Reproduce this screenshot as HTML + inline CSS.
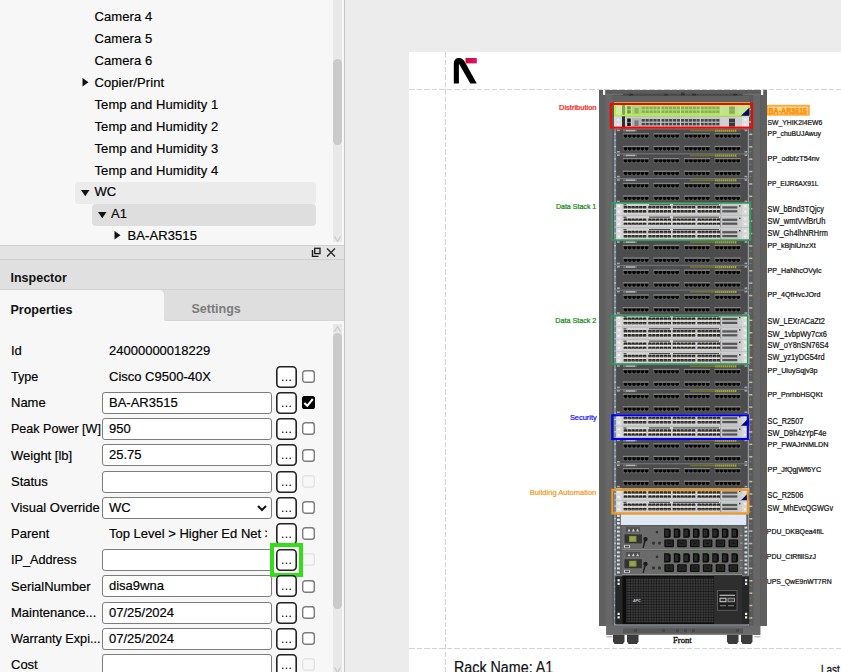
<!DOCTYPE html><html><head><meta charset="utf-8"><style>

html,body{margin:0;padding:0}
body{width:841px;height:672px;overflow:hidden;position:relative;background:#ececec;font-family:"Liberation Sans",sans-serif;color:#111}
.a{position:absolute}
.tr{position:absolute;height:22px;line-height:22px;font-size:13px;white-space:nowrap;letter-spacing:0.09px;color:#000;-webkit-text-stroke:0.18px #000}
.lbl{position:absolute;left:11px;height:22px;line-height:22px;font-size:13px;white-space:nowrap;color:#000;-webkit-text-stroke:0.18px #000}
.val{position:absolute;left:109px;height:22px;line-height:22px;font-size:13px;white-space:nowrap;color:#000;-webkit-text-stroke:0.18px #000}
.inp{position:absolute;left:102px;width:168px;height:20px;border:1px solid #7d7d7d;border-radius:3px;background:#fff}
.inp span{position:absolute;left:6px;top:0;line-height:20px;font-size:13px;color:#000;white-space:nowrap;-webkit-text-stroke:0.18px #000}
.btn{position:absolute;left:276px;width:17px;height:18px;border:2px solid #2a2a2a;border-radius:4px;background:#fff}
.btn svg{position:absolute;left:0;top:0}
.cb{position:absolute;left:302px;width:11px;height:11px;border:1px solid #8a8a8a;border-radius:2.5px;background:#fff}
.cbd{border-color:#e6e6e6;background:#f7f7f7}
.rl{position:absolute;font-size:7px;white-space:nowrap;color:#111;letter-spacing:0.1px}

</style></head><body>
<div class="a" style="left:0;top:0;width:344px;height:245px;background:#f7f7f7"></div>
<div class="a" style="left:75px;top:182px;width:241px;height:21.5px;background:#ebebeb;border-radius:4px"></div>
<div class="a" style="left:92px;top:204px;width:224px;height:21.5px;background:#dedede;border-radius:4px"></div>
<div class="tr" style="left:94.5px;top:5.5px">Camera 4</div>
<div class="tr" style="left:94.5px;top:27.5px">Camera 5</div>
<div class="tr" style="left:94.5px;top:49.5px">Camera 6</div>
<div class="tr" style="left:94.5px;top:71.5px">Copier/Print</div>
<svg class="a" style="left:82.0px;top:78.0px" width="7" height="9"><path d="M0.5 0V8.5L6.5 4.25Z" fill="#111"/></svg>
<div class="tr" style="left:94.5px;top:93.5px">Temp and Humidity 1</div>
<div class="tr" style="left:94.5px;top:115.5px">Temp and Humidity 2</div>
<div class="tr" style="left:94.5px;top:137.5px">Temp and Humidity 3</div>
<div class="tr" style="left:94.5px;top:159.5px">Temp and Humidity 4</div>
<div class="tr" style="left:94.5px;top:180.9px">WC</div>
<svg class="a" style="left:81.0px;top:190.2px" width="9" height="7"><path d="M0 0H8.5L4.25 6.3Z" fill="#111"/></svg>
<div class="tr" style="left:111.0px;top:202.9px">A1</div>
<svg class="a" style="left:97.5px;top:212.2px" width="9" height="7"><path d="M0 0H8.5L4.25 6.3Z" fill="#111"/></svg>
<div class="tr" style="left:127.5px;top:224.9px">BA-AR3515</div>
<svg class="a" style="left:113.5px;top:231.4px" width="7" height="9"><path d="M0.5 0V8.5L6.5 4.25Z" fill="#111"/></svg>
<div class="a" style="left:333px;top:0;width:9px;height:242px;background:#e8e8e8"></div>
<div class="a" style="left:333px;top:59px;width:9px;height:86px;background:#cbcacb;border-radius:4.5px"></div>
<svg class="a" style="left:333px;top:235px" width="9" height="8"><path d="M1.5 1.5L4.5 6.5L7.5 1.5" stroke="#cdcdcd" stroke-width="1.4" fill="none"/></svg>
<div class="a" style="left:344px;top:0;width:1px;height:672px;background:#c6c6c6"></div>
<div class="a" style="left:0;top:245px;width:344px;height:1px;background:#d0d0d0"></div>
<div class="a" style="left:0;top:246px;width:344px;height:13px;background:#e3e3e3"></div>
<div class="a" style="left:0;top:259px;width:344px;height:1px;background:#cfcfcf"></div>
<svg class="a" style="left:311px;top:247px" width="10" height="10"><path d="M1.5 3V9.5H7.5" stroke="#1a1a1a" stroke-width="1.4" fill="none"/><rect x="3.7" y="1.3" width="5.3" height="5.3" stroke="#1a1a1a" stroke-width="1.3" fill="#d8d8d8"/></svg>
<svg class="a" style="left:326px;top:248px" width="10" height="9"><path d="M1 0.5L9 8.5M9 0.5L1 8.5" stroke="#222" stroke-width="1.3"/></svg>
<div class="a" style="left:0;top:260px;width:344px;height:29px;background:#e0e0e0"></div>
<div class="a" style="left:0;top:289px;width:344px;height:1px;background:#d2d2d2"></div>
<div class="a" style="left:10.5px;top:268px;font-size:12.5px;font-weight:bold;line-height:20px;color:#111">Inspector</div>
<div class="a" style="left:0;top:290px;width:344px;height:382px;background:#f7f7f7"></div>
<div class="a" style="left:163px;top:290px;width:181px;height:30.5px;background:#dedede;border-bottom-left-radius:4px;border-bottom:1px solid #d6d6d6;box-sizing:border-box"></div>
<div class="a" style="left:150px;top:290px;width:14px;height:8px;background:#dedede"></div>
<div class="a" style="left:0;top:290px;width:163.5px;height:31px;background:#f7f7f7;border-top-right-radius:5px"></div>
<div class="a" style="left:10.5px;top:300px;font-size:12.5px;font-weight:bold;line-height:20px;color:#111">Properties</div>
<div class="a" style="left:191.5px;top:298.5px;font-size:12.5px;font-weight:bold;line-height:20px;color:#7b7b7b">Settings</div>
<div class="lbl" style="top:339.70px;transform:scaleX(1.0000);transform-origin:0 0">Id</div>
<div class="val" style="top:339.70px">24000000018229</div>
<div class="lbl" style="top:365.90px;transform:scaleX(0.9684);transform-origin:0 0">Type</div>
<div class="val" style="top:365.90px">Cisco C9500-40X</div>
<svg class="a" style="left:276px;top:365.80px" width="21" height="22"><rect x="0.8" y="0.8" width="19.4" height="20.4" rx="3.6" fill="#fff" stroke="#222" stroke-width="1.6"/><circle cx="6.8" cy="14.3" r="0.8" fill="#111"/><circle cx="10.5" cy="14.3" r="0.8" fill="#111"/><circle cx="14.2" cy="14.3" r="0.8" fill="#111"/></svg>
<svg class="a" style="left:302px;top:370.00px" width="13" height="13"><rect x="0.7" y="0.7" width="11.6" height="11.6" rx="2.6" fill="#fff" stroke="#7c7c7c" stroke-width="1.4"/></svg>
<div class="lbl" style="top:392.10px;transform:scaleX(1.0000);transform-origin:0 0">Name</div>
<div class="inp" style="top:392.00px"><span>BA-AR3515</span></div>
<svg class="a" style="left:276px;top:392.00px" width="21" height="22"><rect x="0.8" y="0.8" width="19.4" height="20.4" rx="3.6" fill="#fff" stroke="#222" stroke-width="1.6"/><circle cx="6.8" cy="14.3" r="0.8" fill="#111"/><circle cx="10.5" cy="14.3" r="0.8" fill="#111"/><circle cx="14.2" cy="14.3" r="0.8" fill="#111"/></svg>
<svg class="a" style="left:302px;top:396.20px" width="13" height="13"><rect x="0" y="0" width="13" height="13" rx="2.6" fill="#000"/><path d="M2.3 6.9L5.3 9.8L10.8 3" stroke="#fff" stroke-width="2.1" fill="none"/></svg>
<div class="lbl" style="top:418.30px;transform:scaleX(0.9646);transform-origin:0 0">Peak Power [W]</div>
<div class="inp" style="top:418.20px"><span>950</span></div>
<svg class="a" style="left:276px;top:418.20px" width="21" height="22"><rect x="0.8" y="0.8" width="19.4" height="20.4" rx="3.6" fill="#fff" stroke="#222" stroke-width="1.6"/><circle cx="6.8" cy="14.3" r="0.8" fill="#111"/><circle cx="10.5" cy="14.3" r="0.8" fill="#111"/><circle cx="14.2" cy="14.3" r="0.8" fill="#111"/></svg>
<svg class="a" style="left:302px;top:422.40px" width="13" height="13"><rect x="0.7" y="0.7" width="11.6" height="11.6" rx="2.6" fill="#fff" stroke="#7c7c7c" stroke-width="1.4"/></svg>
<div class="lbl" style="top:444.50px;transform:scaleX(1.0000);transform-origin:0 0">Weight [lb]</div>
<div class="inp" style="top:444.40px"><span>25.75</span></div>
<svg class="a" style="left:276px;top:444.40px" width="21" height="22"><rect x="0.8" y="0.8" width="19.4" height="20.4" rx="3.6" fill="#fff" stroke="#222" stroke-width="1.6"/><circle cx="6.8" cy="14.3" r="0.8" fill="#111"/><circle cx="10.5" cy="14.3" r="0.8" fill="#111"/><circle cx="14.2" cy="14.3" r="0.8" fill="#111"/></svg>
<svg class="a" style="left:302px;top:448.60px" width="13" height="13"><rect x="0.7" y="0.7" width="11.6" height="11.6" rx="2.6" fill="#fff" stroke="#7c7c7c" stroke-width="1.4"/></svg>
<div class="lbl" style="top:470.70px;transform:scaleX(1.0000);transform-origin:0 0">Status</div>
<div class="inp" style="top:470.60px"><span></span></div>
<svg class="a" style="left:276px;top:470.60px" width="21" height="22"><rect x="0.8" y="0.8" width="19.4" height="20.4" rx="3.6" fill="#fff" stroke="#222" stroke-width="1.6"/><circle cx="6.8" cy="14.3" r="0.8" fill="#111"/><circle cx="10.5" cy="14.3" r="0.8" fill="#111"/><circle cx="14.2" cy="14.3" r="0.8" fill="#111"/></svg>
<svg class="a" style="left:302px;top:474.80px" width="13" height="13"><rect x="0.7" y="0.7" width="11.6" height="11.6" rx="2.6" fill="#f7f7f7" stroke="#e4e4e4" stroke-width="1.4"/></svg>
<div class="lbl" style="top:496.90px;transform:scaleX(1.0000);transform-origin:0 0">Visual Override</div>
<div class="inp" style="top:496.80px"><span>WC</span></div>
<svg class="a" style="left:257px;top:504.80px" width="10" height="7"><path d="M1 1L5 5L9 1" stroke="#111" stroke-width="2" fill="none"/></svg>
<svg class="a" style="left:276px;top:496.80px" width="21" height="22"><rect x="0.8" y="0.8" width="19.4" height="20.4" rx="3.6" fill="#fff" stroke="#222" stroke-width="1.6"/><circle cx="6.8" cy="14.3" r="0.8" fill="#111"/><circle cx="10.5" cy="14.3" r="0.8" fill="#111"/><circle cx="14.2" cy="14.3" r="0.8" fill="#111"/></svg>
<svg class="a" style="left:302px;top:501.00px" width="13" height="13"><rect x="0.7" y="0.7" width="11.6" height="11.6" rx="2.6" fill="#fff" stroke="#7c7c7c" stroke-width="1.4"/></svg>
<div class="lbl" style="top:523.10px;transform:scaleX(1.0000);transform-origin:0 0">Parent</div>
<div class="val" style="top:523.10px;width:158px;overflow:hidden">Top Level &gt; Higher Ed Net &gt;</div>
<svg class="a" style="left:276px;top:523.00px" width="21" height="22"><rect x="0.8" y="0.8" width="19.4" height="20.4" rx="3.6" fill="#fff" stroke="#222" stroke-width="1.6"/><circle cx="6.8" cy="14.3" r="0.8" fill="#111"/><circle cx="10.5" cy="14.3" r="0.8" fill="#111"/><circle cx="14.2" cy="14.3" r="0.8" fill="#111"/></svg>
<svg class="a" style="left:302px;top:527.20px" width="13" height="13"><rect x="0.7" y="0.7" width="11.6" height="11.6" rx="2.6" fill="#fff" stroke="#7c7c7c" stroke-width="1.4"/></svg>
<div class="lbl" style="top:549.30px;transform:scaleX(0.9747);transform-origin:0 0">IP_Address</div>
<div class="inp" style="top:549.20px"><span></span></div>
<svg class="a" style="left:276px;top:549.20px" width="21" height="22"><rect x="0.8" y="0.8" width="19.4" height="20.4" rx="3.6" fill="#fff" stroke="#222" stroke-width="1.6"/><circle cx="6.8" cy="14.3" r="0.8" fill="#111"/><circle cx="10.5" cy="14.3" r="0.8" fill="#111"/><circle cx="14.2" cy="14.3" r="0.8" fill="#111"/></svg>
<svg class="a" style="left:302px;top:553.40px" width="13" height="13"><rect x="0.7" y="0.7" width="11.6" height="11.6" rx="2.6" fill="#f7f7f7" stroke="#e4e4e4" stroke-width="1.4"/></svg>
<div class="a" style="left:270px;top:543.20px;width:24.5px;height:25.5px;border:4px solid #33dd17"></div>
<div class="lbl" style="top:575.50px;transform:scaleX(1.0000);transform-origin:0 0">SerialNumber</div>
<div class="inp" style="top:575.40px"><span>disa9wna</span></div>
<svg class="a" style="left:276px;top:575.40px" width="21" height="22"><rect x="0.8" y="0.8" width="19.4" height="20.4" rx="3.6" fill="#fff" stroke="#222" stroke-width="1.6"/><circle cx="6.8" cy="14.3" r="0.8" fill="#111"/><circle cx="10.5" cy="14.3" r="0.8" fill="#111"/><circle cx="14.2" cy="14.3" r="0.8" fill="#111"/></svg>
<svg class="a" style="left:302px;top:579.60px" width="13" height="13"><rect x="0.7" y="0.7" width="11.6" height="11.6" rx="2.6" fill="#fff" stroke="#7c7c7c" stroke-width="1.4"/></svg>
<div class="lbl" style="top:601.70px;transform:scaleX(1.0000);transform-origin:0 0">Maintenance...</div>
<div class="inp" style="top:601.60px"><span>07/25/2024</span></div>
<svg class="a" style="left:276px;top:601.60px" width="21" height="22"><rect x="0.8" y="0.8" width="19.4" height="20.4" rx="3.6" fill="#fff" stroke="#222" stroke-width="1.6"/><circle cx="6.8" cy="14.3" r="0.8" fill="#111"/><circle cx="10.5" cy="14.3" r="0.8" fill="#111"/><circle cx="14.2" cy="14.3" r="0.8" fill="#111"/></svg>
<svg class="a" style="left:302px;top:605.80px" width="13" height="13"><rect x="0.7" y="0.7" width="11.6" height="11.6" rx="2.6" fill="#fff" stroke="#7c7c7c" stroke-width="1.4"/></svg>
<div class="lbl" style="top:627.90px;transform:scaleX(0.9730);transform-origin:0 0">Warranty Expi...</div>
<div class="inp" style="top:627.80px"><span>07/25/2024</span></div>
<svg class="a" style="left:276px;top:627.80px" width="21" height="22"><rect x="0.8" y="0.8" width="19.4" height="20.4" rx="3.6" fill="#fff" stroke="#222" stroke-width="1.6"/><circle cx="6.8" cy="14.3" r="0.8" fill="#111"/><circle cx="10.5" cy="14.3" r="0.8" fill="#111"/><circle cx="14.2" cy="14.3" r="0.8" fill="#111"/></svg>
<svg class="a" style="left:302px;top:632.00px" width="13" height="13"><rect x="0.7" y="0.7" width="11.6" height="11.6" rx="2.6" fill="#fff" stroke="#7c7c7c" stroke-width="1.4"/></svg>
<div class="lbl" style="top:654.10px;transform:scaleX(1.0000);transform-origin:0 0">Cost</div>
<div class="inp" style="top:654.00px"><span></span></div>
<svg class="a" style="left:276px;top:654.00px" width="21" height="22"><rect x="0.8" y="0.8" width="19.4" height="20.4" rx="3.6" fill="#fff" stroke="#222" stroke-width="1.6"/><circle cx="6.8" cy="14.3" r="0.8" fill="#111"/><circle cx="10.5" cy="14.3" r="0.8" fill="#111"/><circle cx="14.2" cy="14.3" r="0.8" fill="#111"/></svg>
<svg class="a" style="left:302px;top:658.20px" width="13" height="13"><rect x="0.7" y="0.7" width="11.6" height="11.6" rx="2.6" fill="#f7f7f7" stroke="#e4e4e4" stroke-width="1.4"/></svg>
<div class="a" style="left:333px;top:324px;width:9px;height:348px;background:#e8e8e8"></div>
<div class="a" style="left:333px;top:333px;width:9px;height:276px;background:#cbcacb;border-radius:4.5px"></div>
<svg class="a" style="left:333px;top:325px" width="9" height="8"><path d="M1.5 6.5L4.5 1.5L7.5 6.5" stroke="#cdcdcd" stroke-width="1.4" fill="none"/></svg>
<svg class="a" style="left:333px;top:666px" width="9" height="8"><path d="M1.5 1.5L4.5 6.5L7.5 1.5" stroke="#cdcdcd" stroke-width="1.4" fill="none"/></svg>
<div class="a" style="left:409px;top:52px;width:432px;height:620px;background:#fff"></div>
<div class="a" style="left:445px;top:52px;width:1px;height:620px;background:repeating-linear-gradient(to bottom,#d4d4d4 0 5.5px,transparent 5.5px 7.5px)"></div>
<div class="a" style="left:409px;top:89px;width:432px;height:1px;background:repeating-linear-gradient(to right,#d4d4d4 0 5.5px,transparent 5.5px 7.5px)"></div>
<div class="a" style="left:409px;top:648px;width:432px;height:1px;background:repeating-linear-gradient(to right,#d4d4d4 0 5.5px,transparent 5.5px 7.5px)"></div>
<svg class="a" style="left:448px;top:54px" width="34" height="34"><defs><linearGradient id="lg" x1="0" x2="1"><stop offset="0" stop-color="#c8102e"/><stop offset="1" stop-color="#e0107a"/></linearGradient></defs><path d="M5.8 29.6V9.8Q5.8 4 11.2 4Q14.6 4 16.6 7.6L28.8 29.6H22.3L11.3 10.2H10.9V29.6Z" fill="#000"/><rect x="17.5" y="4" width="11.3" height="5.4" fill="url(#lg)"/></svg>
<div class="a" style="left:453.5px;top:657px;font-size:16px;line-height:22px;color:#111;white-space:nowrap;transform:scaleX(0.893);transform-origin:0 0;-webkit-text-stroke:0.2px #111">Rack Name: A1</div>
<div class="a" style="left:821px;top:662px;font-size:12.5px;line-height:16px;color:#111;white-space:nowrap;transform:scaleX(0.8);transform-origin:0 0;-webkit-text-stroke:0.3px #111">Last</div>
<svg class="a" style="left:0;top:0" width="841" height="672" shape-rendering="auto"><defs><pattern id="mesh" width="2.6" height="2.6" patternUnits="userSpaceOnUse"><rect width="2.6" height="2.6" fill="#3e3e3e"/><circle cx="1.3" cy="1.3" r="0.95" fill="#0c0c0c"/></pattern></defs><rect x="599.00" y="90.00" width="168.00" height="536.00" fill="#5f5f5f" /><rect x="605.80" y="90.00" width="0.70" height="536.00" fill="#6e6e6e" /><rect x="606.50" y="90.00" width="5.50" height="545.00" fill="#676767" /><rect x="612.00" y="95.00" width="2.00" height="530.00" fill="#5a5a5a" /><rect x="760.30" y="90.00" width="0.70" height="536.00" fill="#575757" /><rect x="753.20" y="90.00" width="7.10" height="545.00" fill="#676767" /><rect x="749.00" y="95.00" width="4.20" height="530.00" fill="#5a5a5a" /><rect x="599.00" y="90.00" width="168.00" height="4.00" fill="#5c5c5c" /><rect x="605.00" y="94.00" width="156.00" height="1.00" fill="#707070" /><rect x="612.00" y="95.00" width="137.00" height="9.00" fill="#595959" /><rect x="622.80" y="93.60" width="120.00" height="2.20" fill="#4a4a4a" /><rect x="629.00" y="93.80" width="4.00" height="1.60" fill="#2e2e2e" /><rect x="664.00" y="93.80" width="4.00" height="1.60" fill="#2e2e2e" /><rect x="692.00" y="93.80" width="4.00" height="1.60" fill="#2e2e2e" /><rect x="733.00" y="93.80" width="4.00" height="1.60" fill="#2e2e2e" /><rect x="681.00" y="92.50" width="3.50" height="3.00" fill="#333" /><rect x="612.00" y="96.00" width="137.00" height="8.00" fill="#606060" /><rect x="603.00" y="90.00" width="2.20" height="5.00" fill="#f4f4f4" /><rect x="761.00" y="90.00" width="2.20" height="5.00" fill="#f4f4f4" /><rect x="614.00" y="104.00" width="2.20" height="521.00" fill="#7c8896" /><rect x="747.60" y="104.00" width="1.40" height="521.00" fill="#8c9aaa" /><rect x="614.30" y="108.60" width="1.60" height="1.50" fill="#a8d0f0" /><rect x="614.30" y="114.80" width="1.60" height="1.50" fill="#94b8d8" /><rect x="749.30" y="108.80" width="1.40" height="1.50" fill="#b8d4ee" /><rect x="750.70" y="108.80" width="1.60" height="1.50" fill="#e8c060" /><rect x="749.50" y="114.20" width="2.00" height="0.70" fill="#7a8490" /><rect x="614.30" y="121.00" width="1.60" height="1.50" fill="#a8d0f0" /><rect x="614.30" y="127.20" width="1.60" height="1.50" fill="#94b8d8" /><rect x="749.30" y="121.20" width="1.40" height="1.50" fill="#b8d4ee" /><rect x="750.70" y="121.20" width="1.60" height="1.50" fill="#e8c060" /><rect x="749.50" y="126.60" width="2.00" height="0.70" fill="#7a8490" /><rect x="614.30" y="133.40" width="1.60" height="1.50" fill="#a8d0f0" /><rect x="614.30" y="139.60" width="1.60" height="1.50" fill="#94b8d8" /><rect x="749.30" y="133.60" width="1.40" height="1.50" fill="#b8d4ee" /><rect x="750.70" y="133.60" width="1.60" height="1.50" fill="#e8c060" /><rect x="749.50" y="139.00" width="2.00" height="0.70" fill="#7a8490" /><rect x="614.30" y="145.80" width="1.60" height="1.50" fill="#a8d0f0" /><rect x="614.30" y="152.00" width="1.60" height="1.50" fill="#94b8d8" /><rect x="749.30" y="146.00" width="1.40" height="1.50" fill="#b8d4ee" /><rect x="750.70" y="146.00" width="1.60" height="1.50" fill="#e8c060" /><rect x="749.50" y="151.40" width="2.00" height="0.70" fill="#7a8490" /><rect x="614.30" y="158.20" width="1.60" height="1.50" fill="#a8d0f0" /><rect x="614.30" y="164.40" width="1.60" height="1.50" fill="#94b8d8" /><rect x="749.30" y="158.40" width="1.40" height="1.50" fill="#b8d4ee" /><rect x="750.70" y="158.40" width="1.60" height="1.50" fill="#e8c060" /><rect x="749.50" y="163.80" width="2.00" height="0.70" fill="#7a8490" /><rect x="614.30" y="170.60" width="1.60" height="1.50" fill="#a8d0f0" /><rect x="614.30" y="176.80" width="1.60" height="1.50" fill="#94b8d8" /><rect x="749.30" y="170.80" width="1.40" height="1.50" fill="#b8d4ee" /><rect x="750.70" y="170.80" width="1.60" height="1.50" fill="#e8c060" /><rect x="749.50" y="176.20" width="2.00" height="0.70" fill="#7a8490" /><rect x="614.30" y="183.00" width="1.60" height="1.50" fill="#a8d0f0" /><rect x="614.30" y="189.20" width="1.60" height="1.50" fill="#94b8d8" /><rect x="749.30" y="183.20" width="1.40" height="1.50" fill="#b8d4ee" /><rect x="750.70" y="183.20" width="1.60" height="1.50" fill="#e8c060" /><rect x="749.50" y="188.60" width="2.00" height="0.70" fill="#7a8490" /><rect x="614.30" y="195.40" width="1.60" height="1.50" fill="#a8d0f0" /><rect x="614.30" y="201.60" width="1.60" height="1.50" fill="#94b8d8" /><rect x="749.30" y="195.60" width="1.40" height="1.50" fill="#b8d4ee" /><rect x="750.70" y="195.60" width="1.60" height="1.50" fill="#e8c060" /><rect x="749.50" y="201.00" width="2.00" height="0.70" fill="#7a8490" /><rect x="614.30" y="207.80" width="1.60" height="1.50" fill="#a8d0f0" /><rect x="614.30" y="214.00" width="1.60" height="1.50" fill="#94b8d8" /><rect x="749.30" y="208.00" width="1.40" height="1.50" fill="#b8d4ee" /><rect x="750.70" y="208.00" width="1.60" height="1.50" fill="#e8c060" /><rect x="749.50" y="213.40" width="2.00" height="0.70" fill="#7a8490" /><rect x="614.30" y="220.20" width="1.60" height="1.50" fill="#a8d0f0" /><rect x="614.30" y="226.40" width="1.60" height="1.50" fill="#94b8d8" /><rect x="749.30" y="220.40" width="1.40" height="1.50" fill="#b8d4ee" /><rect x="750.70" y="220.40" width="1.60" height="1.50" fill="#e8c060" /><rect x="749.50" y="225.80" width="2.00" height="0.70" fill="#7a8490" /><rect x="614.30" y="232.60" width="1.60" height="1.50" fill="#a8d0f0" /><rect x="614.30" y="238.80" width="1.60" height="1.50" fill="#94b8d8" /><rect x="749.30" y="232.80" width="1.40" height="1.50" fill="#b8d4ee" /><rect x="750.70" y="232.80" width="1.60" height="1.50" fill="#e8c060" /><rect x="749.50" y="238.20" width="2.00" height="0.70" fill="#7a8490" /><rect x="614.30" y="245.00" width="1.60" height="1.50" fill="#a8d0f0" /><rect x="614.30" y="251.20" width="1.60" height="1.50" fill="#94b8d8" /><rect x="749.30" y="245.20" width="1.40" height="1.50" fill="#b8d4ee" /><rect x="750.70" y="245.20" width="1.60" height="1.50" fill="#e8c060" /><rect x="749.50" y="250.60" width="2.00" height="0.70" fill="#7a8490" /><rect x="614.30" y="257.40" width="1.60" height="1.50" fill="#a8d0f0" /><rect x="614.30" y="263.60" width="1.60" height="1.50" fill="#94b8d8" /><rect x="749.30" y="257.60" width="1.40" height="1.50" fill="#b8d4ee" /><rect x="750.70" y="257.60" width="1.60" height="1.50" fill="#e8c060" /><rect x="749.50" y="263.00" width="2.00" height="0.70" fill="#7a8490" /><rect x="614.30" y="269.80" width="1.60" height="1.50" fill="#a8d0f0" /><rect x="614.30" y="276.00" width="1.60" height="1.50" fill="#94b8d8" /><rect x="749.30" y="270.00" width="1.40" height="1.50" fill="#b8d4ee" /><rect x="750.70" y="270.00" width="1.60" height="1.50" fill="#e8c060" /><rect x="749.50" y="275.40" width="2.00" height="0.70" fill="#7a8490" /><rect x="614.30" y="282.20" width="1.60" height="1.50" fill="#a8d0f0" /><rect x="614.30" y="288.40" width="1.60" height="1.50" fill="#94b8d8" /><rect x="749.30" y="282.40" width="1.40" height="1.50" fill="#b8d4ee" /><rect x="750.70" y="282.40" width="1.60" height="1.50" fill="#e8c060" /><rect x="749.50" y="287.80" width="2.00" height="0.70" fill="#7a8490" /><rect x="614.30" y="294.60" width="1.60" height="1.50" fill="#a8d0f0" /><rect x="614.30" y="300.80" width="1.60" height="1.50" fill="#94b8d8" /><rect x="749.30" y="294.80" width="1.40" height="1.50" fill="#b8d4ee" /><rect x="750.70" y="294.80" width="1.60" height="1.50" fill="#e8c060" /><rect x="749.50" y="300.20" width="2.00" height="0.70" fill="#7a8490" /><rect x="614.30" y="307.00" width="1.60" height="1.50" fill="#a8d0f0" /><rect x="614.30" y="313.20" width="1.60" height="1.50" fill="#94b8d8" /><rect x="749.30" y="307.20" width="1.40" height="1.50" fill="#b8d4ee" /><rect x="750.70" y="307.20" width="1.60" height="1.50" fill="#e8c060" /><rect x="749.50" y="312.60" width="2.00" height="0.70" fill="#7a8490" /><rect x="614.30" y="319.40" width="1.60" height="1.50" fill="#a8d0f0" /><rect x="614.30" y="325.60" width="1.60" height="1.50" fill="#94b8d8" /><rect x="749.30" y="319.60" width="1.40" height="1.50" fill="#b8d4ee" /><rect x="750.70" y="319.60" width="1.60" height="1.50" fill="#e8c060" /><rect x="749.50" y="325.00" width="2.00" height="0.70" fill="#7a8490" /><rect x="614.30" y="331.80" width="1.60" height="1.50" fill="#a8d0f0" /><rect x="614.30" y="338.00" width="1.60" height="1.50" fill="#94b8d8" /><rect x="749.30" y="332.00" width="1.40" height="1.50" fill="#b8d4ee" /><rect x="750.70" y="332.00" width="1.60" height="1.50" fill="#e8c060" /><rect x="749.50" y="337.40" width="2.00" height="0.70" fill="#7a8490" /><rect x="614.30" y="344.20" width="1.60" height="1.50" fill="#a8d0f0" /><rect x="614.30" y="350.40" width="1.60" height="1.50" fill="#94b8d8" /><rect x="749.30" y="344.40" width="1.40" height="1.50" fill="#b8d4ee" /><rect x="750.70" y="344.40" width="1.60" height="1.50" fill="#e8c060" /><rect x="749.50" y="349.80" width="2.00" height="0.70" fill="#7a8490" /><rect x="614.30" y="356.60" width="1.60" height="1.50" fill="#a8d0f0" /><rect x="614.30" y="362.80" width="1.60" height="1.50" fill="#94b8d8" /><rect x="749.30" y="356.80" width="1.40" height="1.50" fill="#b8d4ee" /><rect x="750.70" y="356.80" width="1.60" height="1.50" fill="#e8c060" /><rect x="749.50" y="362.20" width="2.00" height="0.70" fill="#7a8490" /><rect x="614.30" y="369.00" width="1.60" height="1.50" fill="#a8d0f0" /><rect x="614.30" y="375.20" width="1.60" height="1.50" fill="#94b8d8" /><rect x="749.30" y="369.20" width="1.40" height="1.50" fill="#b8d4ee" /><rect x="750.70" y="369.20" width="1.60" height="1.50" fill="#e8c060" /><rect x="749.50" y="374.60" width="2.00" height="0.70" fill="#7a8490" /><rect x="614.30" y="381.40" width="1.60" height="1.50" fill="#a8d0f0" /><rect x="614.30" y="387.60" width="1.60" height="1.50" fill="#94b8d8" /><rect x="749.30" y="381.60" width="1.40" height="1.50" fill="#b8d4ee" /><rect x="750.70" y="381.60" width="1.60" height="1.50" fill="#e8c060" /><rect x="749.50" y="387.00" width="2.00" height="0.70" fill="#7a8490" /><rect x="614.30" y="393.80" width="1.60" height="1.50" fill="#a8d0f0" /><rect x="614.30" y="400.00" width="1.60" height="1.50" fill="#94b8d8" /><rect x="749.30" y="394.00" width="1.40" height="1.50" fill="#b8d4ee" /><rect x="750.70" y="394.00" width="1.60" height="1.50" fill="#e8c060" /><rect x="749.50" y="399.40" width="2.00" height="0.70" fill="#7a8490" /><rect x="614.30" y="406.20" width="1.60" height="1.50" fill="#a8d0f0" /><rect x="614.30" y="412.40" width="1.60" height="1.50" fill="#94b8d8" /><rect x="749.30" y="406.40" width="1.40" height="1.50" fill="#b8d4ee" /><rect x="750.70" y="406.40" width="1.60" height="1.50" fill="#e8c060" /><rect x="749.50" y="411.80" width="2.00" height="0.70" fill="#7a8490" /><rect x="614.30" y="418.60" width="1.60" height="1.50" fill="#a8d0f0" /><rect x="614.30" y="424.80" width="1.60" height="1.50" fill="#94b8d8" /><rect x="749.30" y="418.80" width="1.40" height="1.50" fill="#b8d4ee" /><rect x="750.70" y="418.80" width="1.60" height="1.50" fill="#e8c060" /><rect x="749.50" y="424.20" width="2.00" height="0.70" fill="#7a8490" /><rect x="614.30" y="431.00" width="1.60" height="1.50" fill="#a8d0f0" /><rect x="614.30" y="437.20" width="1.60" height="1.50" fill="#94b8d8" /><rect x="749.30" y="431.20" width="1.40" height="1.50" fill="#b8d4ee" /><rect x="750.70" y="431.20" width="1.60" height="1.50" fill="#e8c060" /><rect x="749.50" y="436.60" width="2.00" height="0.70" fill="#7a8490" /><rect x="614.30" y="443.40" width="1.60" height="1.50" fill="#a8d0f0" /><rect x="614.30" y="449.60" width="1.60" height="1.50" fill="#94b8d8" /><rect x="749.30" y="443.60" width="1.40" height="1.50" fill="#b8d4ee" /><rect x="750.70" y="443.60" width="1.60" height="1.50" fill="#e8c060" /><rect x="749.50" y="449.00" width="2.00" height="0.70" fill="#7a8490" /><rect x="614.30" y="455.80" width="1.60" height="1.50" fill="#a8d0f0" /><rect x="614.30" y="462.00" width="1.60" height="1.50" fill="#94b8d8" /><rect x="749.30" y="456.00" width="1.40" height="1.50" fill="#b8d4ee" /><rect x="750.70" y="456.00" width="1.60" height="1.50" fill="#e8c060" /><rect x="749.50" y="461.40" width="2.00" height="0.70" fill="#7a8490" /><rect x="614.30" y="468.20" width="1.60" height="1.50" fill="#a8d0f0" /><rect x="614.30" y="474.40" width="1.60" height="1.50" fill="#94b8d8" /><rect x="749.30" y="468.40" width="1.40" height="1.50" fill="#b8d4ee" /><rect x="750.70" y="468.40" width="1.60" height="1.50" fill="#e8c060" /><rect x="749.50" y="473.80" width="2.00" height="0.70" fill="#7a8490" /><rect x="614.30" y="480.60" width="1.60" height="1.50" fill="#a8d0f0" /><rect x="614.30" y="486.80" width="1.60" height="1.50" fill="#94b8d8" /><rect x="749.30" y="480.80" width="1.40" height="1.50" fill="#b8d4ee" /><rect x="750.70" y="480.80" width="1.60" height="1.50" fill="#e8c060" /><rect x="749.50" y="486.20" width="2.00" height="0.70" fill="#7a8490" /><rect x="614.30" y="493.00" width="1.60" height="1.50" fill="#a8d0f0" /><rect x="614.30" y="499.20" width="1.60" height="1.50" fill="#94b8d8" /><rect x="749.30" y="493.20" width="1.40" height="1.50" fill="#b8d4ee" /><rect x="750.70" y="493.20" width="1.60" height="1.50" fill="#e8c060" /><rect x="749.50" y="498.60" width="2.00" height="0.70" fill="#7a8490" /><rect x="614.30" y="505.40" width="1.60" height="1.50" fill="#a8d0f0" /><rect x="614.30" y="511.60" width="1.60" height="1.50" fill="#94b8d8" /><rect x="749.30" y="505.60" width="1.40" height="1.50" fill="#b8d4ee" /><rect x="750.70" y="505.60" width="1.60" height="1.50" fill="#e8c060" /><rect x="749.50" y="511.00" width="2.00" height="0.70" fill="#7a8490" /><rect x="614.30" y="517.80" width="1.60" height="1.50" fill="#a8d0f0" /><rect x="614.30" y="524.00" width="1.60" height="1.50" fill="#94b8d8" /><rect x="749.30" y="518.00" width="1.40" height="1.50" fill="#b8d4ee" /><rect x="750.70" y="518.00" width="1.60" height="1.50" fill="#e8c060" /><rect x="749.50" y="523.40" width="2.00" height="0.70" fill="#7a8490" /><rect x="614.30" y="530.20" width="1.60" height="1.50" fill="#a8d0f0" /><rect x="614.30" y="536.40" width="1.60" height="1.50" fill="#94b8d8" /><rect x="749.30" y="530.40" width="1.40" height="1.50" fill="#b8d4ee" /><rect x="750.70" y="530.40" width="1.60" height="1.50" fill="#e8c060" /><rect x="749.50" y="535.80" width="2.00" height="0.70" fill="#7a8490" /><rect x="614.30" y="542.60" width="1.60" height="1.50" fill="#a8d0f0" /><rect x="614.30" y="548.80" width="1.60" height="1.50" fill="#94b8d8" /><rect x="749.30" y="542.80" width="1.40" height="1.50" fill="#b8d4ee" /><rect x="750.70" y="542.80" width="1.60" height="1.50" fill="#e8c060" /><rect x="749.50" y="548.20" width="2.00" height="0.70" fill="#7a8490" /><rect x="614.30" y="555.00" width="1.60" height="1.50" fill="#a8d0f0" /><rect x="614.30" y="561.20" width="1.60" height="1.50" fill="#94b8d8" /><rect x="749.30" y="555.20" width="1.40" height="1.50" fill="#b8d4ee" /><rect x="750.70" y="555.20" width="1.60" height="1.50" fill="#e8c060" /><rect x="749.50" y="560.60" width="2.00" height="0.70" fill="#7a8490" /><rect x="614.30" y="567.40" width="1.60" height="1.50" fill="#a8d0f0" /><rect x="614.30" y="573.60" width="1.60" height="1.50" fill="#94b8d8" /><rect x="749.30" y="567.60" width="1.40" height="1.50" fill="#b8d4ee" /><rect x="750.70" y="567.60" width="1.60" height="1.50" fill="#e8c060" /><rect x="749.50" y="573.00" width="2.00" height="0.70" fill="#7a8490" /><rect x="614.30" y="579.80" width="1.60" height="1.50" fill="#a8d0f0" /><rect x="614.30" y="586.00" width="1.60" height="1.50" fill="#94b8d8" /><rect x="749.30" y="580.00" width="1.40" height="1.50" fill="#b8d4ee" /><rect x="750.70" y="580.00" width="1.60" height="1.50" fill="#e8c060" /><rect x="749.50" y="585.40" width="2.00" height="0.70" fill="#7a8490" /><rect x="614.30" y="592.20" width="1.60" height="1.50" fill="#a8d0f0" /><rect x="614.30" y="598.40" width="1.60" height="1.50" fill="#94b8d8" /><rect x="749.30" y="592.40" width="1.40" height="1.50" fill="#b8d4ee" /><rect x="750.70" y="592.40" width="1.60" height="1.50" fill="#e8c060" /><rect x="749.50" y="597.80" width="2.00" height="0.70" fill="#7a8490" /><rect x="614.30" y="604.60" width="1.60" height="1.50" fill="#a8d0f0" /><rect x="614.30" y="610.80" width="1.60" height="1.50" fill="#94b8d8" /><rect x="749.30" y="604.80" width="1.40" height="1.50" fill="#b8d4ee" /><rect x="750.70" y="604.80" width="1.60" height="1.50" fill="#e8c060" /><rect x="749.50" y="610.20" width="2.00" height="0.70" fill="#7a8490" /><rect x="614.30" y="617.00" width="1.60" height="1.50" fill="#a8d0f0" /><rect x="614.30" y="623.20" width="1.60" height="1.50" fill="#94b8d8" /><rect x="749.30" y="617.20" width="1.40" height="1.50" fill="#b8d4ee" /><rect x="750.70" y="617.20" width="1.60" height="1.50" fill="#e8c060" /><rect x="749.50" y="622.60" width="2.00" height="0.70" fill="#7a8490" /><rect x="614.00" y="102.30" width="136.00" height="14.30" fill="#b2f03a" /><rect x="616.00" y="104.20" width="132.50" height="10.40" fill="#c6e694" /><rect x="616.00" y="104.20" width="6.00" height="10.40" fill="#d2eaa8" /><rect x="622.00" y="104.20" width="3.00" height="10.40" fill="#7fa84c" /><path d="M627.2 106.20h3.6v3.3h-3.6z M627.2 110.20h3.6v3.3h-3.6z" fill="#6a9a38" /><rect x="632.00" y="105.50" width="9.00" height="9.00" fill="#b0d47c" /><rect x="634.50" y="108.00" width="4.00" height="5.50" fill="#8cb458" /><rect x="641.00" y="105.20" width="79.00" height="9.80" fill="#b9dc80" /><rect x="641.60" y="106.60" width="3.20" height="2.60" fill="#86b04a" /><rect x="645.53" y="106.60" width="3.20" height="2.60" fill="#86b04a" /><rect x="649.46" y="106.60" width="3.20" height="2.60" fill="#86b04a" /><rect x="653.39" y="106.60" width="3.20" height="2.60" fill="#86b04a" /><rect x="657.32" y="106.60" width="3.20" height="2.60" fill="#86b04a" /><rect x="661.25" y="106.60" width="3.20" height="2.60" fill="#86b04a" /><rect x="665.18" y="106.60" width="3.20" height="2.60" fill="#86b04a" /><rect x="669.11" y="106.60" width="3.20" height="2.60" fill="#86b04a" /><rect x="673.04" y="106.60" width="3.20" height="2.60" fill="#86b04a" /><rect x="676.97" y="106.60" width="3.20" height="2.60" fill="#86b04a" /><rect x="680.90" y="106.60" width="3.20" height="2.60" fill="#86b04a" /><rect x="684.83" y="106.60" width="3.20" height="2.60" fill="#86b04a" /><rect x="688.76" y="106.60" width="3.20" height="2.60" fill="#86b04a" /><rect x="692.69" y="106.60" width="3.20" height="2.60" fill="#86b04a" /><rect x="696.62" y="106.60" width="3.20" height="2.60" fill="#86b04a" /><rect x="700.55" y="106.60" width="3.20" height="2.60" fill="#86b04a" /><rect x="704.48" y="106.60" width="3.20" height="2.60" fill="#86b04a" /><rect x="708.41" y="106.60" width="3.20" height="2.60" fill="#86b04a" /><rect x="712.34" y="106.60" width="3.20" height="2.60" fill="#86b04a" /><rect x="716.27" y="106.60" width="3.20" height="2.60" fill="#86b04a" /><rect x="641.60" y="110.40" width="3.20" height="2.60" fill="#86b04a" /><rect x="645.53" y="110.40" width="3.20" height="2.60" fill="#86b04a" /><rect x="649.46" y="110.40" width="3.20" height="2.60" fill="#86b04a" /><rect x="653.39" y="110.40" width="3.20" height="2.60" fill="#86b04a" /><rect x="657.32" y="110.40" width="3.20" height="2.60" fill="#86b04a" /><rect x="661.25" y="110.40" width="3.20" height="2.60" fill="#86b04a" /><rect x="665.18" y="110.40" width="3.20" height="2.60" fill="#86b04a" /><rect x="669.11" y="110.40" width="3.20" height="2.60" fill="#86b04a" /><rect x="673.04" y="110.40" width="3.20" height="2.60" fill="#86b04a" /><rect x="676.97" y="110.40" width="3.20" height="2.60" fill="#86b04a" /><rect x="680.90" y="110.40" width="3.20" height="2.60" fill="#86b04a" /><rect x="684.83" y="110.40" width="3.20" height="2.60" fill="#86b04a" /><rect x="688.76" y="110.40" width="3.20" height="2.60" fill="#86b04a" /><rect x="692.69" y="110.40" width="3.20" height="2.60" fill="#86b04a" /><rect x="696.62" y="110.40" width="3.20" height="2.60" fill="#86b04a" /><rect x="700.55" y="110.40" width="3.20" height="2.60" fill="#86b04a" /><rect x="704.48" y="110.40" width="3.20" height="2.60" fill="#86b04a" /><rect x="708.41" y="110.40" width="3.20" height="2.60" fill="#86b04a" /><rect x="712.34" y="110.40" width="3.20" height="2.60" fill="#86b04a" /><rect x="716.27" y="110.40" width="3.20" height="2.60" fill="#86b04a" /><rect x="660.40" y="105.20" width="0.90" height="9.80" fill="#c9e89a" /><rect x="680.10" y="105.20" width="0.90" height="9.80" fill="#c9e89a" /><rect x="699.80" y="105.20" width="0.90" height="9.80" fill="#c9e89a" /><rect x="721.50" y="105.20" width="17.00" height="9.80" fill="#c3e190" /><rect x="729.00" y="106.20" width="6.00" height="8.00" fill="#9cc266" /><rect x="729.50" y="107.00" width="5.00" height="2.60" fill="#84ae4e" /><rect x="729.50" y="110.60" width="5.00" height="2.60" fill="#84ae4e" /><path d="M741 115.80L749.5 107.60V115.80Z" fill="#06066e" /><rect x="614.00" y="116.40" width="135.00" height="12.40" fill="#cfcfcf" /><rect x="614.00" y="116.40" width="8.00" height="12.40" fill="#d8d8d8" /><rect x="617.00" y="118.90" width="2.50" height="1.80" fill="#eef2f8" /><rect x="617.00" y="123.90" width="2.50" height="1.80" fill="#eef2f8" /><rect x="622.00" y="116.40" width="3.00" height="12.40" fill="#2d2d2d" /><path d="M627.2 118.60h3.6v3.3h-3.6z M627.2 122.60h3.6v3.3h-3.6z" fill="#151515" /><rect x="632.00" y="117.90" width="9.00" height="9.00" fill="#b4b4b4" /><rect x="634.50" y="120.40" width="4.00" height="5.50" fill="#7a7a7a" /><rect x="641.00" y="117.60" width="79.00" height="9.80" fill="#c4c4c4" /><rect x="641.60" y="119.00" width="3.20" height="2.60" fill="#454545" /><rect x="645.53" y="119.00" width="3.20" height="2.60" fill="#454545" /><rect x="649.46" y="119.00" width="3.20" height="2.60" fill="#454545" /><rect x="653.39" y="119.00" width="3.20" height="2.60" fill="#454545" /><rect x="657.32" y="119.00" width="3.20" height="2.60" fill="#454545" /><rect x="661.25" y="119.00" width="3.20" height="2.60" fill="#454545" /><rect x="665.18" y="119.00" width="3.20" height="2.60" fill="#454545" /><rect x="669.11" y="119.00" width="3.20" height="2.60" fill="#454545" /><rect x="673.04" y="119.00" width="3.20" height="2.60" fill="#454545" /><rect x="676.97" y="119.00" width="3.20" height="2.60" fill="#454545" /><rect x="680.90" y="119.00" width="3.20" height="2.60" fill="#454545" /><rect x="684.83" y="119.00" width="3.20" height="2.60" fill="#454545" /><rect x="688.76" y="119.00" width="3.20" height="2.60" fill="#454545" /><rect x="692.69" y="119.00" width="3.20" height="2.60" fill="#454545" /><rect x="696.62" y="119.00" width="3.20" height="2.60" fill="#454545" /><rect x="700.55" y="119.00" width="3.20" height="2.60" fill="#454545" /><rect x="704.48" y="119.00" width="3.20" height="2.60" fill="#454545" /><rect x="708.41" y="119.00" width="3.20" height="2.60" fill="#454545" /><rect x="712.34" y="119.00" width="3.20" height="2.60" fill="#454545" /><rect x="716.27" y="119.00" width="3.20" height="2.60" fill="#454545" /><rect x="641.60" y="122.80" width="3.20" height="2.60" fill="#454545" /><rect x="645.53" y="122.80" width="3.20" height="2.60" fill="#454545" /><rect x="649.46" y="122.80" width="3.20" height="2.60" fill="#454545" /><rect x="653.39" y="122.80" width="3.20" height="2.60" fill="#454545" /><rect x="657.32" y="122.80" width="3.20" height="2.60" fill="#454545" /><rect x="661.25" y="122.80" width="3.20" height="2.60" fill="#454545" /><rect x="665.18" y="122.80" width="3.20" height="2.60" fill="#454545" /><rect x="669.11" y="122.80" width="3.20" height="2.60" fill="#454545" /><rect x="673.04" y="122.80" width="3.20" height="2.60" fill="#454545" /><rect x="676.97" y="122.80" width="3.20" height="2.60" fill="#454545" /><rect x="680.90" y="122.80" width="3.20" height="2.60" fill="#454545" /><rect x="684.83" y="122.80" width="3.20" height="2.60" fill="#454545" /><rect x="688.76" y="122.80" width="3.20" height="2.60" fill="#454545" /><rect x="692.69" y="122.80" width="3.20" height="2.60" fill="#454545" /><rect x="696.62" y="122.80" width="3.20" height="2.60" fill="#454545" /><rect x="700.55" y="122.80" width="3.20" height="2.60" fill="#454545" /><rect x="704.48" y="122.80" width="3.20" height="2.60" fill="#454545" /><rect x="708.41" y="122.80" width="3.20" height="2.60" fill="#454545" /><rect x="712.34" y="122.80" width="3.20" height="2.60" fill="#454545" /><rect x="716.27" y="122.80" width="3.20" height="2.60" fill="#454545" /><rect x="660.40" y="117.60" width="0.90" height="9.80" fill="#d6d6d6" /><rect x="680.10" y="117.60" width="0.90" height="9.80" fill="#d6d6d6" /><rect x="699.80" y="117.60" width="0.90" height="9.80" fill="#d6d6d6" /><rect x="721.50" y="117.60" width="17.00" height="9.80" fill="#d0d0d0" /><rect x="729.00" y="118.60" width="6.00" height="8.00" fill="#3a3a3a" /><rect x="729.50" y="122.20" width="5.00" height="0.80" fill="#888" /><rect x="742.00" y="116.40" width="7.00" height="12.40" fill="#dedede" /><rect x="744.00" y="118.90" width="2.50" height="1.80" fill="#f4f4f4" /><rect x="744.00" y="123.90" width="2.50" height="1.80" fill="#f4f4f4" /><rect x="616.20" y="128.80" width="131.40" height="24.80" fill="#4c4c4c" /><rect x="614.00" y="128.40" width="135.00" height="1.10" fill="#6f7680" /><rect x="617.00" y="129.60" width="2.80" height="1.60" fill="#a9a9a9" /><rect x="617.00" y="151.00" width="2.80" height="1.60" fill="#a9a9a9" /><rect x="744.50" y="129.60" width="2.80" height="1.60" fill="#a5a5a5" /><rect x="744.50" y="151.00" width="2.80" height="1.60" fill="#a5a5a5" /><rect x="623.00" y="129.80" width="14.00" height="1.60" fill="#7c7c7c" /><rect x="626.00" y="129.90" width="9.00" height="1.40" fill="#b4b4b4" /><rect x="690.00" y="129.80" width="25.00" height="1.60" fill="#74742e" /><rect x="715.00" y="129.60" width="22.00" height="2.20" fill="#6a6a34" /><rect x="715.30" y="129.70" width="1.10" height="2.00" fill="#b4b440" /><rect x="717.28" y="129.70" width="1.10" height="2.00" fill="#b4b440" /><rect x="719.26" y="129.70" width="1.10" height="2.00" fill="#b4b440" /><rect x="721.24" y="129.70" width="1.10" height="2.00" fill="#b4b440" /><rect x="723.22" y="129.70" width="1.10" height="2.00" fill="#b4b440" /><rect x="725.20" y="129.70" width="1.10" height="2.00" fill="#b4b440" /><rect x="727.18" y="129.70" width="1.10" height="2.00" fill="#b4b440" /><rect x="729.16" y="129.70" width="1.10" height="2.00" fill="#b4b440" /><rect x="731.14" y="129.70" width="1.10" height="2.00" fill="#b4b440" /><rect x="733.12" y="129.70" width="1.10" height="2.00" fill="#b4b440" /><rect x="735.10" y="129.70" width="1.10" height="2.00" fill="#b4b440" /><rect x="738.00" y="130.00" width="3.00" height="1.30" fill="#5e5e30" /><rect x="622.80" y="133.20" width="26.20" height="1.30" fill="#858585" /><rect x="622.80" y="134.50" width="26.20" height="4.00" fill="#5a5a5a" /><path d="M623.80 134.70h3.6v1.9l-0.7 0.7h-0.5v0.5h-1.2v-0.5h-0.5l-0.7 -0.7z" fill="#050505" /><path d="M628.00 134.70h3.6v1.9l-0.7 0.7h-0.5v0.5h-1.2v-0.5h-0.5l-0.7 -0.7z" fill="#050505" /><path d="M632.20 134.70h3.6v1.9l-0.7 0.7h-0.5v0.5h-1.2v-0.5h-0.5l-0.7 -0.7z" fill="#050505" /><path d="M636.40 134.70h3.6v1.9l-0.7 0.7h-0.5v0.5h-1.2v-0.5h-0.5l-0.7 -0.7z" fill="#050505" /><path d="M640.60 134.70h3.6v1.9l-0.7 0.7h-0.5v0.5h-1.2v-0.5h-0.5l-0.7 -0.7z" fill="#050505" /><path d="M644.80 134.70h3.6v1.9l-0.7 0.7h-0.5v0.5h-1.2v-0.5h-0.5l-0.7 -0.7z" fill="#050505" /><rect x="622.80" y="145.80" width="26.20" height="1.30" fill="#858585" /><rect x="622.80" y="147.10" width="26.20" height="4.00" fill="#5a5a5a" /><path d="M623.80 147.30h3.6v1.9l-0.7 0.7h-0.5v0.5h-1.2v-0.5h-0.5l-0.7 -0.7z" fill="#050505" /><path d="M628.00 147.30h3.6v1.9l-0.7 0.7h-0.5v0.5h-1.2v-0.5h-0.5l-0.7 -0.7z" fill="#050505" /><path d="M632.20 147.30h3.6v1.9l-0.7 0.7h-0.5v0.5h-1.2v-0.5h-0.5l-0.7 -0.7z" fill="#050505" /><path d="M636.40 147.30h3.6v1.9l-0.7 0.7h-0.5v0.5h-1.2v-0.5h-0.5l-0.7 -0.7z" fill="#050505" /><path d="M640.60 147.30h3.6v1.9l-0.7 0.7h-0.5v0.5h-1.2v-0.5h-0.5l-0.7 -0.7z" fill="#050505" /><path d="M644.80 147.30h3.6v1.9l-0.7 0.7h-0.5v0.5h-1.2v-0.5h-0.5l-0.7 -0.7z" fill="#050505" /><rect x="653.30" y="133.20" width="26.20" height="1.30" fill="#858585" /><rect x="653.30" y="134.50" width="26.20" height="4.00" fill="#5a5a5a" /><path d="M654.30 134.70h3.6v1.9l-0.7 0.7h-0.5v0.5h-1.2v-0.5h-0.5l-0.7 -0.7z" fill="#050505" /><path d="M658.50 134.70h3.6v1.9l-0.7 0.7h-0.5v0.5h-1.2v-0.5h-0.5l-0.7 -0.7z" fill="#050505" /><path d="M662.70 134.70h3.6v1.9l-0.7 0.7h-0.5v0.5h-1.2v-0.5h-0.5l-0.7 -0.7z" fill="#050505" /><path d="M666.90 134.70h3.6v1.9l-0.7 0.7h-0.5v0.5h-1.2v-0.5h-0.5l-0.7 -0.7z" fill="#050505" /><path d="M671.10 134.70h3.6v1.9l-0.7 0.7h-0.5v0.5h-1.2v-0.5h-0.5l-0.7 -0.7z" fill="#050505" /><path d="M675.30 134.70h3.6v1.9l-0.7 0.7h-0.5v0.5h-1.2v-0.5h-0.5l-0.7 -0.7z" fill="#050505" /><rect x="653.30" y="145.80" width="26.20" height="1.30" fill="#858585" /><rect x="653.30" y="147.10" width="26.20" height="4.00" fill="#5a5a5a" /><path d="M654.30 147.30h3.6v1.9l-0.7 0.7h-0.5v0.5h-1.2v-0.5h-0.5l-0.7 -0.7z" fill="#050505" /><path d="M658.50 147.30h3.6v1.9l-0.7 0.7h-0.5v0.5h-1.2v-0.5h-0.5l-0.7 -0.7z" fill="#050505" /><path d="M662.70 147.30h3.6v1.9l-0.7 0.7h-0.5v0.5h-1.2v-0.5h-0.5l-0.7 -0.7z" fill="#050505" /><path d="M666.90 147.30h3.6v1.9l-0.7 0.7h-0.5v0.5h-1.2v-0.5h-0.5l-0.7 -0.7z" fill="#050505" /><path d="M671.10 147.30h3.6v1.9l-0.7 0.7h-0.5v0.5h-1.2v-0.5h-0.5l-0.7 -0.7z" fill="#050505" /><path d="M675.30 147.30h3.6v1.9l-0.7 0.7h-0.5v0.5h-1.2v-0.5h-0.5l-0.7 -0.7z" fill="#050505" /><rect x="683.90" y="133.20" width="26.20" height="1.30" fill="#858585" /><rect x="683.90" y="134.50" width="26.20" height="4.00" fill="#5a5a5a" /><path d="M684.90 134.70h3.6v1.9l-0.7 0.7h-0.5v0.5h-1.2v-0.5h-0.5l-0.7 -0.7z" fill="#050505" /><path d="M689.10 134.70h3.6v1.9l-0.7 0.7h-0.5v0.5h-1.2v-0.5h-0.5l-0.7 -0.7z" fill="#050505" /><path d="M693.30 134.70h3.6v1.9l-0.7 0.7h-0.5v0.5h-1.2v-0.5h-0.5l-0.7 -0.7z" fill="#050505" /><path d="M697.50 134.70h3.6v1.9l-0.7 0.7h-0.5v0.5h-1.2v-0.5h-0.5l-0.7 -0.7z" fill="#050505" /><path d="M701.70 134.70h3.6v1.9l-0.7 0.7h-0.5v0.5h-1.2v-0.5h-0.5l-0.7 -0.7z" fill="#050505" /><path d="M705.90 134.70h3.6v1.9l-0.7 0.7h-0.5v0.5h-1.2v-0.5h-0.5l-0.7 -0.7z" fill="#050505" /><rect x="683.90" y="145.80" width="26.20" height="1.30" fill="#858585" /><rect x="683.90" y="147.10" width="26.20" height="4.00" fill="#5a5a5a" /><path d="M684.90 147.30h3.6v1.9l-0.7 0.7h-0.5v0.5h-1.2v-0.5h-0.5l-0.7 -0.7z" fill="#050505" /><path d="M689.10 147.30h3.6v1.9l-0.7 0.7h-0.5v0.5h-1.2v-0.5h-0.5l-0.7 -0.7z" fill="#050505" /><path d="M693.30 147.30h3.6v1.9l-0.7 0.7h-0.5v0.5h-1.2v-0.5h-0.5l-0.7 -0.7z" fill="#050505" /><path d="M697.50 147.30h3.6v1.9l-0.7 0.7h-0.5v0.5h-1.2v-0.5h-0.5l-0.7 -0.7z" fill="#050505" /><path d="M701.70 147.30h3.6v1.9l-0.7 0.7h-0.5v0.5h-1.2v-0.5h-0.5l-0.7 -0.7z" fill="#050505" /><path d="M705.90 147.30h3.6v1.9l-0.7 0.7h-0.5v0.5h-1.2v-0.5h-0.5l-0.7 -0.7z" fill="#050505" /><rect x="714.40" y="133.20" width="26.20" height="1.30" fill="#858585" /><rect x="714.40" y="134.50" width="26.20" height="4.00" fill="#5a5a5a" /><path d="M715.40 134.70h3.6v1.9l-0.7 0.7h-0.5v0.5h-1.2v-0.5h-0.5l-0.7 -0.7z" fill="#050505" /><path d="M719.60 134.70h3.6v1.9l-0.7 0.7h-0.5v0.5h-1.2v-0.5h-0.5l-0.7 -0.7z" fill="#050505" /><path d="M723.80 134.70h3.6v1.9l-0.7 0.7h-0.5v0.5h-1.2v-0.5h-0.5l-0.7 -0.7z" fill="#050505" /><path d="M728.00 134.70h3.6v1.9l-0.7 0.7h-0.5v0.5h-1.2v-0.5h-0.5l-0.7 -0.7z" fill="#050505" /><path d="M732.20 134.70h3.6v1.9l-0.7 0.7h-0.5v0.5h-1.2v-0.5h-0.5l-0.7 -0.7z" fill="#050505" /><path d="M736.40 134.70h3.6v1.9l-0.7 0.7h-0.5v0.5h-1.2v-0.5h-0.5l-0.7 -0.7z" fill="#050505" /><rect x="714.40" y="145.80" width="26.20" height="1.30" fill="#858585" /><rect x="714.40" y="147.10" width="26.20" height="4.00" fill="#5a5a5a" /><path d="M715.40 147.30h3.6v1.9l-0.7 0.7h-0.5v0.5h-1.2v-0.5h-0.5l-0.7 -0.7z" fill="#050505" /><path d="M719.60 147.30h3.6v1.9l-0.7 0.7h-0.5v0.5h-1.2v-0.5h-0.5l-0.7 -0.7z" fill="#050505" /><path d="M723.80 147.30h3.6v1.9l-0.7 0.7h-0.5v0.5h-1.2v-0.5h-0.5l-0.7 -0.7z" fill="#050505" /><path d="M728.00 147.30h3.6v1.9l-0.7 0.7h-0.5v0.5h-1.2v-0.5h-0.5l-0.7 -0.7z" fill="#050505" /><path d="M732.20 147.30h3.6v1.9l-0.7 0.7h-0.5v0.5h-1.2v-0.5h-0.5l-0.7 -0.7z" fill="#050505" /><path d="M736.40 147.30h3.6v1.9l-0.7 0.7h-0.5v0.5h-1.2v-0.5h-0.5l-0.7 -0.7z" fill="#050505" /><rect x="616.20" y="153.60" width="131.40" height="24.80" fill="#4c4c4c" /><rect x="614.00" y="153.20" width="135.00" height="1.10" fill="#6f7680" /><rect x="617.00" y="154.40" width="2.80" height="1.60" fill="#a9a9a9" /><rect x="617.00" y="175.80" width="2.80" height="1.60" fill="#a9a9a9" /><rect x="744.50" y="154.40" width="2.80" height="1.60" fill="#a5a5a5" /><rect x="744.50" y="175.80" width="2.80" height="1.60" fill="#a5a5a5" /><rect x="623.00" y="154.60" width="14.00" height="1.60" fill="#7c7c7c" /><rect x="626.00" y="154.70" width="9.00" height="1.40" fill="#b4b4b4" /><rect x="690.00" y="154.60" width="25.00" height="1.60" fill="#74742e" /><rect x="715.00" y="154.40" width="22.00" height="2.20" fill="#6a6a34" /><rect x="715.30" y="154.50" width="1.10" height="2.00" fill="#b4b440" /><rect x="717.28" y="154.50" width="1.10" height="2.00" fill="#b4b440" /><rect x="719.26" y="154.50" width="1.10" height="2.00" fill="#b4b440" /><rect x="721.24" y="154.50" width="1.10" height="2.00" fill="#b4b440" /><rect x="723.22" y="154.50" width="1.10" height="2.00" fill="#b4b440" /><rect x="725.20" y="154.50" width="1.10" height="2.00" fill="#b4b440" /><rect x="727.18" y="154.50" width="1.10" height="2.00" fill="#b4b440" /><rect x="729.16" y="154.50" width="1.10" height="2.00" fill="#b4b440" /><rect x="731.14" y="154.50" width="1.10" height="2.00" fill="#b4b440" /><rect x="733.12" y="154.50" width="1.10" height="2.00" fill="#b4b440" /><rect x="735.10" y="154.50" width="1.10" height="2.00" fill="#b4b440" /><rect x="738.00" y="154.80" width="3.00" height="1.30" fill="#5e5e30" /><rect x="622.80" y="158.00" width="26.20" height="1.30" fill="#858585" /><rect x="622.80" y="159.30" width="26.20" height="4.00" fill="#5a5a5a" /><path d="M623.80 159.50h3.6v1.9l-0.7 0.7h-0.5v0.5h-1.2v-0.5h-0.5l-0.7 -0.7z" fill="#050505" /><path d="M628.00 159.50h3.6v1.9l-0.7 0.7h-0.5v0.5h-1.2v-0.5h-0.5l-0.7 -0.7z" fill="#050505" /><path d="M632.20 159.50h3.6v1.9l-0.7 0.7h-0.5v0.5h-1.2v-0.5h-0.5l-0.7 -0.7z" fill="#050505" /><path d="M636.40 159.50h3.6v1.9l-0.7 0.7h-0.5v0.5h-1.2v-0.5h-0.5l-0.7 -0.7z" fill="#050505" /><path d="M640.60 159.50h3.6v1.9l-0.7 0.7h-0.5v0.5h-1.2v-0.5h-0.5l-0.7 -0.7z" fill="#050505" /><path d="M644.80 159.50h3.6v1.9l-0.7 0.7h-0.5v0.5h-1.2v-0.5h-0.5l-0.7 -0.7z" fill="#050505" /><rect x="622.80" y="170.60" width="26.20" height="1.30" fill="#858585" /><rect x="622.80" y="171.90" width="26.20" height="4.00" fill="#5a5a5a" /><path d="M623.80 172.10h3.6v1.9l-0.7 0.7h-0.5v0.5h-1.2v-0.5h-0.5l-0.7 -0.7z" fill="#050505" /><path d="M628.00 172.10h3.6v1.9l-0.7 0.7h-0.5v0.5h-1.2v-0.5h-0.5l-0.7 -0.7z" fill="#050505" /><path d="M632.20 172.10h3.6v1.9l-0.7 0.7h-0.5v0.5h-1.2v-0.5h-0.5l-0.7 -0.7z" fill="#050505" /><path d="M636.40 172.10h3.6v1.9l-0.7 0.7h-0.5v0.5h-1.2v-0.5h-0.5l-0.7 -0.7z" fill="#050505" /><path d="M640.60 172.10h3.6v1.9l-0.7 0.7h-0.5v0.5h-1.2v-0.5h-0.5l-0.7 -0.7z" fill="#050505" /><path d="M644.80 172.10h3.6v1.9l-0.7 0.7h-0.5v0.5h-1.2v-0.5h-0.5l-0.7 -0.7z" fill="#050505" /><rect x="653.30" y="158.00" width="26.20" height="1.30" fill="#858585" /><rect x="653.30" y="159.30" width="26.20" height="4.00" fill="#5a5a5a" /><path d="M654.30 159.50h3.6v1.9l-0.7 0.7h-0.5v0.5h-1.2v-0.5h-0.5l-0.7 -0.7z" fill="#050505" /><path d="M658.50 159.50h3.6v1.9l-0.7 0.7h-0.5v0.5h-1.2v-0.5h-0.5l-0.7 -0.7z" fill="#050505" /><path d="M662.70 159.50h3.6v1.9l-0.7 0.7h-0.5v0.5h-1.2v-0.5h-0.5l-0.7 -0.7z" fill="#050505" /><path d="M666.90 159.50h3.6v1.9l-0.7 0.7h-0.5v0.5h-1.2v-0.5h-0.5l-0.7 -0.7z" fill="#050505" /><path d="M671.10 159.50h3.6v1.9l-0.7 0.7h-0.5v0.5h-1.2v-0.5h-0.5l-0.7 -0.7z" fill="#050505" /><path d="M675.30 159.50h3.6v1.9l-0.7 0.7h-0.5v0.5h-1.2v-0.5h-0.5l-0.7 -0.7z" fill="#050505" /><rect x="653.30" y="170.60" width="26.20" height="1.30" fill="#858585" /><rect x="653.30" y="171.90" width="26.20" height="4.00" fill="#5a5a5a" /><path d="M654.30 172.10h3.6v1.9l-0.7 0.7h-0.5v0.5h-1.2v-0.5h-0.5l-0.7 -0.7z" fill="#050505" /><path d="M658.50 172.10h3.6v1.9l-0.7 0.7h-0.5v0.5h-1.2v-0.5h-0.5l-0.7 -0.7z" fill="#050505" /><path d="M662.70 172.10h3.6v1.9l-0.7 0.7h-0.5v0.5h-1.2v-0.5h-0.5l-0.7 -0.7z" fill="#050505" /><path d="M666.90 172.10h3.6v1.9l-0.7 0.7h-0.5v0.5h-1.2v-0.5h-0.5l-0.7 -0.7z" fill="#050505" /><path d="M671.10 172.10h3.6v1.9l-0.7 0.7h-0.5v0.5h-1.2v-0.5h-0.5l-0.7 -0.7z" fill="#050505" /><path d="M675.30 172.10h3.6v1.9l-0.7 0.7h-0.5v0.5h-1.2v-0.5h-0.5l-0.7 -0.7z" fill="#050505" /><rect x="683.90" y="158.00" width="26.20" height="1.30" fill="#858585" /><rect x="683.90" y="159.30" width="26.20" height="4.00" fill="#5a5a5a" /><path d="M684.90 159.50h3.6v1.9l-0.7 0.7h-0.5v0.5h-1.2v-0.5h-0.5l-0.7 -0.7z" fill="#050505" /><path d="M689.10 159.50h3.6v1.9l-0.7 0.7h-0.5v0.5h-1.2v-0.5h-0.5l-0.7 -0.7z" fill="#050505" /><path d="M693.30 159.50h3.6v1.9l-0.7 0.7h-0.5v0.5h-1.2v-0.5h-0.5l-0.7 -0.7z" fill="#050505" /><path d="M697.50 159.50h3.6v1.9l-0.7 0.7h-0.5v0.5h-1.2v-0.5h-0.5l-0.7 -0.7z" fill="#050505" /><path d="M701.70 159.50h3.6v1.9l-0.7 0.7h-0.5v0.5h-1.2v-0.5h-0.5l-0.7 -0.7z" fill="#050505" /><path d="M705.90 159.50h3.6v1.9l-0.7 0.7h-0.5v0.5h-1.2v-0.5h-0.5l-0.7 -0.7z" fill="#050505" /><rect x="683.90" y="170.60" width="26.20" height="1.30" fill="#858585" /><rect x="683.90" y="171.90" width="26.20" height="4.00" fill="#5a5a5a" /><path d="M684.90 172.10h3.6v1.9l-0.7 0.7h-0.5v0.5h-1.2v-0.5h-0.5l-0.7 -0.7z" fill="#050505" /><path d="M689.10 172.10h3.6v1.9l-0.7 0.7h-0.5v0.5h-1.2v-0.5h-0.5l-0.7 -0.7z" fill="#050505" /><path d="M693.30 172.10h3.6v1.9l-0.7 0.7h-0.5v0.5h-1.2v-0.5h-0.5l-0.7 -0.7z" fill="#050505" /><path d="M697.50 172.10h3.6v1.9l-0.7 0.7h-0.5v0.5h-1.2v-0.5h-0.5l-0.7 -0.7z" fill="#050505" /><path d="M701.70 172.10h3.6v1.9l-0.7 0.7h-0.5v0.5h-1.2v-0.5h-0.5l-0.7 -0.7z" fill="#050505" /><path d="M705.90 172.10h3.6v1.9l-0.7 0.7h-0.5v0.5h-1.2v-0.5h-0.5l-0.7 -0.7z" fill="#050505" /><rect x="714.40" y="158.00" width="26.20" height="1.30" fill="#858585" /><rect x="714.40" y="159.30" width="26.20" height="4.00" fill="#5a5a5a" /><path d="M715.40 159.50h3.6v1.9l-0.7 0.7h-0.5v0.5h-1.2v-0.5h-0.5l-0.7 -0.7z" fill="#050505" /><path d="M719.60 159.50h3.6v1.9l-0.7 0.7h-0.5v0.5h-1.2v-0.5h-0.5l-0.7 -0.7z" fill="#050505" /><path d="M723.80 159.50h3.6v1.9l-0.7 0.7h-0.5v0.5h-1.2v-0.5h-0.5l-0.7 -0.7z" fill="#050505" /><path d="M728.00 159.50h3.6v1.9l-0.7 0.7h-0.5v0.5h-1.2v-0.5h-0.5l-0.7 -0.7z" fill="#050505" /><path d="M732.20 159.50h3.6v1.9l-0.7 0.7h-0.5v0.5h-1.2v-0.5h-0.5l-0.7 -0.7z" fill="#050505" /><path d="M736.40 159.50h3.6v1.9l-0.7 0.7h-0.5v0.5h-1.2v-0.5h-0.5l-0.7 -0.7z" fill="#050505" /><rect x="714.40" y="170.60" width="26.20" height="1.30" fill="#858585" /><rect x="714.40" y="171.90" width="26.20" height="4.00" fill="#5a5a5a" /><path d="M715.40 172.10h3.6v1.9l-0.7 0.7h-0.5v0.5h-1.2v-0.5h-0.5l-0.7 -0.7z" fill="#050505" /><path d="M719.60 172.10h3.6v1.9l-0.7 0.7h-0.5v0.5h-1.2v-0.5h-0.5l-0.7 -0.7z" fill="#050505" /><path d="M723.80 172.10h3.6v1.9l-0.7 0.7h-0.5v0.5h-1.2v-0.5h-0.5l-0.7 -0.7z" fill="#050505" /><path d="M728.00 172.10h3.6v1.9l-0.7 0.7h-0.5v0.5h-1.2v-0.5h-0.5l-0.7 -0.7z" fill="#050505" /><path d="M732.20 172.10h3.6v1.9l-0.7 0.7h-0.5v0.5h-1.2v-0.5h-0.5l-0.7 -0.7z" fill="#050505" /><path d="M736.40 172.10h3.6v1.9l-0.7 0.7h-0.5v0.5h-1.2v-0.5h-0.5l-0.7 -0.7z" fill="#050505" /><rect x="616.20" y="178.40" width="131.40" height="24.80" fill="#4c4c4c" /><rect x="614.00" y="178.00" width="135.00" height="1.10" fill="#6f7680" /><rect x="617.00" y="179.20" width="2.80" height="1.60" fill="#a9a9a9" /><rect x="617.00" y="200.60" width="2.80" height="1.60" fill="#a9a9a9" /><rect x="744.50" y="179.20" width="2.80" height="1.60" fill="#a5a5a5" /><rect x="744.50" y="200.60" width="2.80" height="1.60" fill="#a5a5a5" /><rect x="623.00" y="179.40" width="14.00" height="1.60" fill="#7c7c7c" /><rect x="626.00" y="179.50" width="9.00" height="1.40" fill="#b4b4b4" /><rect x="690.00" y="179.40" width="25.00" height="1.60" fill="#74742e" /><rect x="715.00" y="179.20" width="22.00" height="2.20" fill="#6a6a34" /><rect x="715.30" y="179.30" width="1.10" height="2.00" fill="#b4b440" /><rect x="717.28" y="179.30" width="1.10" height="2.00" fill="#b4b440" /><rect x="719.26" y="179.30" width="1.10" height="2.00" fill="#b4b440" /><rect x="721.24" y="179.30" width="1.10" height="2.00" fill="#b4b440" /><rect x="723.22" y="179.30" width="1.10" height="2.00" fill="#b4b440" /><rect x="725.20" y="179.30" width="1.10" height="2.00" fill="#b4b440" /><rect x="727.18" y="179.30" width="1.10" height="2.00" fill="#b4b440" /><rect x="729.16" y="179.30" width="1.10" height="2.00" fill="#b4b440" /><rect x="731.14" y="179.30" width="1.10" height="2.00" fill="#b4b440" /><rect x="733.12" y="179.30" width="1.10" height="2.00" fill="#b4b440" /><rect x="735.10" y="179.30" width="1.10" height="2.00" fill="#b4b440" /><rect x="738.00" y="179.60" width="3.00" height="1.30" fill="#5e5e30" /><rect x="622.80" y="182.80" width="26.20" height="1.30" fill="#858585" /><rect x="622.80" y="184.10" width="26.20" height="4.00" fill="#5a5a5a" /><path d="M623.80 184.30h3.6v1.9l-0.7 0.7h-0.5v0.5h-1.2v-0.5h-0.5l-0.7 -0.7z" fill="#050505" /><path d="M628.00 184.30h3.6v1.9l-0.7 0.7h-0.5v0.5h-1.2v-0.5h-0.5l-0.7 -0.7z" fill="#050505" /><path d="M632.20 184.30h3.6v1.9l-0.7 0.7h-0.5v0.5h-1.2v-0.5h-0.5l-0.7 -0.7z" fill="#050505" /><path d="M636.40 184.30h3.6v1.9l-0.7 0.7h-0.5v0.5h-1.2v-0.5h-0.5l-0.7 -0.7z" fill="#050505" /><path d="M640.60 184.30h3.6v1.9l-0.7 0.7h-0.5v0.5h-1.2v-0.5h-0.5l-0.7 -0.7z" fill="#050505" /><path d="M644.80 184.30h3.6v1.9l-0.7 0.7h-0.5v0.5h-1.2v-0.5h-0.5l-0.7 -0.7z" fill="#050505" /><rect x="622.80" y="195.40" width="26.20" height="1.30" fill="#858585" /><rect x="622.80" y="196.70" width="26.20" height="4.00" fill="#5a5a5a" /><path d="M623.80 196.90h3.6v1.9l-0.7 0.7h-0.5v0.5h-1.2v-0.5h-0.5l-0.7 -0.7z" fill="#050505" /><path d="M628.00 196.90h3.6v1.9l-0.7 0.7h-0.5v0.5h-1.2v-0.5h-0.5l-0.7 -0.7z" fill="#050505" /><path d="M632.20 196.90h3.6v1.9l-0.7 0.7h-0.5v0.5h-1.2v-0.5h-0.5l-0.7 -0.7z" fill="#050505" /><path d="M636.40 196.90h3.6v1.9l-0.7 0.7h-0.5v0.5h-1.2v-0.5h-0.5l-0.7 -0.7z" fill="#050505" /><path d="M640.60 196.90h3.6v1.9l-0.7 0.7h-0.5v0.5h-1.2v-0.5h-0.5l-0.7 -0.7z" fill="#050505" /><path d="M644.80 196.90h3.6v1.9l-0.7 0.7h-0.5v0.5h-1.2v-0.5h-0.5l-0.7 -0.7z" fill="#050505" /><rect x="653.30" y="182.80" width="26.20" height="1.30" fill="#858585" /><rect x="653.30" y="184.10" width="26.20" height="4.00" fill="#5a5a5a" /><path d="M654.30 184.30h3.6v1.9l-0.7 0.7h-0.5v0.5h-1.2v-0.5h-0.5l-0.7 -0.7z" fill="#050505" /><path d="M658.50 184.30h3.6v1.9l-0.7 0.7h-0.5v0.5h-1.2v-0.5h-0.5l-0.7 -0.7z" fill="#050505" /><path d="M662.70 184.30h3.6v1.9l-0.7 0.7h-0.5v0.5h-1.2v-0.5h-0.5l-0.7 -0.7z" fill="#050505" /><path d="M666.90 184.30h3.6v1.9l-0.7 0.7h-0.5v0.5h-1.2v-0.5h-0.5l-0.7 -0.7z" fill="#050505" /><path d="M671.10 184.30h3.6v1.9l-0.7 0.7h-0.5v0.5h-1.2v-0.5h-0.5l-0.7 -0.7z" fill="#050505" /><path d="M675.30 184.30h3.6v1.9l-0.7 0.7h-0.5v0.5h-1.2v-0.5h-0.5l-0.7 -0.7z" fill="#050505" /><rect x="653.30" y="195.40" width="26.20" height="1.30" fill="#858585" /><rect x="653.30" y="196.70" width="26.20" height="4.00" fill="#5a5a5a" /><path d="M654.30 196.90h3.6v1.9l-0.7 0.7h-0.5v0.5h-1.2v-0.5h-0.5l-0.7 -0.7z" fill="#050505" /><path d="M658.50 196.90h3.6v1.9l-0.7 0.7h-0.5v0.5h-1.2v-0.5h-0.5l-0.7 -0.7z" fill="#050505" /><path d="M662.70 196.90h3.6v1.9l-0.7 0.7h-0.5v0.5h-1.2v-0.5h-0.5l-0.7 -0.7z" fill="#050505" /><path d="M666.90 196.90h3.6v1.9l-0.7 0.7h-0.5v0.5h-1.2v-0.5h-0.5l-0.7 -0.7z" fill="#050505" /><path d="M671.10 196.90h3.6v1.9l-0.7 0.7h-0.5v0.5h-1.2v-0.5h-0.5l-0.7 -0.7z" fill="#050505" /><path d="M675.30 196.90h3.6v1.9l-0.7 0.7h-0.5v0.5h-1.2v-0.5h-0.5l-0.7 -0.7z" fill="#050505" /><rect x="683.90" y="182.80" width="26.20" height="1.30" fill="#858585" /><rect x="683.90" y="184.10" width="26.20" height="4.00" fill="#5a5a5a" /><path d="M684.90 184.30h3.6v1.9l-0.7 0.7h-0.5v0.5h-1.2v-0.5h-0.5l-0.7 -0.7z" fill="#050505" /><path d="M689.10 184.30h3.6v1.9l-0.7 0.7h-0.5v0.5h-1.2v-0.5h-0.5l-0.7 -0.7z" fill="#050505" /><path d="M693.30 184.30h3.6v1.9l-0.7 0.7h-0.5v0.5h-1.2v-0.5h-0.5l-0.7 -0.7z" fill="#050505" /><path d="M697.50 184.30h3.6v1.9l-0.7 0.7h-0.5v0.5h-1.2v-0.5h-0.5l-0.7 -0.7z" fill="#050505" /><path d="M701.70 184.30h3.6v1.9l-0.7 0.7h-0.5v0.5h-1.2v-0.5h-0.5l-0.7 -0.7z" fill="#050505" /><path d="M705.90 184.30h3.6v1.9l-0.7 0.7h-0.5v0.5h-1.2v-0.5h-0.5l-0.7 -0.7z" fill="#050505" /><rect x="683.90" y="195.40" width="26.20" height="1.30" fill="#858585" /><rect x="683.90" y="196.70" width="26.20" height="4.00" fill="#5a5a5a" /><path d="M684.90 196.90h3.6v1.9l-0.7 0.7h-0.5v0.5h-1.2v-0.5h-0.5l-0.7 -0.7z" fill="#050505" /><path d="M689.10 196.90h3.6v1.9l-0.7 0.7h-0.5v0.5h-1.2v-0.5h-0.5l-0.7 -0.7z" fill="#050505" /><path d="M693.30 196.90h3.6v1.9l-0.7 0.7h-0.5v0.5h-1.2v-0.5h-0.5l-0.7 -0.7z" fill="#050505" /><path d="M697.50 196.90h3.6v1.9l-0.7 0.7h-0.5v0.5h-1.2v-0.5h-0.5l-0.7 -0.7z" fill="#050505" /><path d="M701.70 196.90h3.6v1.9l-0.7 0.7h-0.5v0.5h-1.2v-0.5h-0.5l-0.7 -0.7z" fill="#050505" /><path d="M705.90 196.90h3.6v1.9l-0.7 0.7h-0.5v0.5h-1.2v-0.5h-0.5l-0.7 -0.7z" fill="#050505" /><rect x="714.40" y="182.80" width="26.20" height="1.30" fill="#858585" /><rect x="714.40" y="184.10" width="26.20" height="4.00" fill="#5a5a5a" /><path d="M715.40 184.30h3.6v1.9l-0.7 0.7h-0.5v0.5h-1.2v-0.5h-0.5l-0.7 -0.7z" fill="#050505" /><path d="M719.60 184.30h3.6v1.9l-0.7 0.7h-0.5v0.5h-1.2v-0.5h-0.5l-0.7 -0.7z" fill="#050505" /><path d="M723.80 184.30h3.6v1.9l-0.7 0.7h-0.5v0.5h-1.2v-0.5h-0.5l-0.7 -0.7z" fill="#050505" /><path d="M728.00 184.30h3.6v1.9l-0.7 0.7h-0.5v0.5h-1.2v-0.5h-0.5l-0.7 -0.7z" fill="#050505" /><path d="M732.20 184.30h3.6v1.9l-0.7 0.7h-0.5v0.5h-1.2v-0.5h-0.5l-0.7 -0.7z" fill="#050505" /><path d="M736.40 184.30h3.6v1.9l-0.7 0.7h-0.5v0.5h-1.2v-0.5h-0.5l-0.7 -0.7z" fill="#050505" /><rect x="714.40" y="195.40" width="26.20" height="1.30" fill="#858585" /><rect x="714.40" y="196.70" width="26.20" height="4.00" fill="#5a5a5a" /><path d="M715.40 196.90h3.6v1.9l-0.7 0.7h-0.5v0.5h-1.2v-0.5h-0.5l-0.7 -0.7z" fill="#050505" /><path d="M719.60 196.90h3.6v1.9l-0.7 0.7h-0.5v0.5h-1.2v-0.5h-0.5l-0.7 -0.7z" fill="#050505" /><path d="M723.80 196.90h3.6v1.9l-0.7 0.7h-0.5v0.5h-1.2v-0.5h-0.5l-0.7 -0.7z" fill="#050505" /><path d="M728.00 196.90h3.6v1.9l-0.7 0.7h-0.5v0.5h-1.2v-0.5h-0.5l-0.7 -0.7z" fill="#050505" /><path d="M732.20 196.90h3.6v1.9l-0.7 0.7h-0.5v0.5h-1.2v-0.5h-0.5l-0.7 -0.7z" fill="#050505" /><path d="M736.40 196.90h3.6v1.9l-0.7 0.7h-0.5v0.5h-1.2v-0.5h-0.5l-0.7 -0.7z" fill="#050505" /><rect x="616.20" y="203.20" width="133.00" height="12.40" fill="#cdcdcd" /><rect x="616.20" y="203.20" width="5.60" height="12.40" fill="#dadada" /><rect x="742.00" y="203.20" width="7.20" height="12.40" fill="#d8d8d8" /><rect x="617.50" y="205.20" width="2.50" height="2.00" fill="#f2f2f2" /><rect x="617.50" y="210.70" width="2.50" height="2.00" fill="#f2f2f2" /><rect x="744.00" y="205.20" width="2.50" height="2.00" fill="#eeeeee" /><rect x="744.00" y="210.70" width="2.50" height="2.00" fill="#eeeeee" /><rect x="623.20" y="204.20" width="23.40" height="10.20" fill="#d4d4d4" /><rect x="623.70" y="206.00" width="3.40" height="2.60" fill="#262626" rx="0.6"/><rect x="624.30" y="207.70" width="2.20" height="0.80" fill="#8a7a5a" /><rect x="627.55" y="206.00" width="3.40" height="2.60" fill="#262626" rx="0.6"/><rect x="628.15" y="207.70" width="2.20" height="0.80" fill="#8a7a5a" /><rect x="631.40" y="206.00" width="3.40" height="2.60" fill="#262626" rx="0.6"/><rect x="632.00" y="207.70" width="2.20" height="0.80" fill="#8a7a5a" /><rect x="635.25" y="206.00" width="3.40" height="2.60" fill="#262626" rx="0.6"/><rect x="635.85" y="207.70" width="2.20" height="0.80" fill="#8a7a5a" /><rect x="639.10" y="206.00" width="3.40" height="2.60" fill="#262626" rx="0.6"/><rect x="639.70" y="207.70" width="2.20" height="0.80" fill="#8a7a5a" /><rect x="642.95" y="206.00" width="3.40" height="2.60" fill="#262626" rx="0.6"/><rect x="643.55" y="207.70" width="2.20" height="0.80" fill="#8a7a5a" /><rect x="623.70" y="210.10" width="3.40" height="2.60" fill="#262626" rx="0.6"/><rect x="624.30" y="211.80" width="2.20" height="0.80" fill="#8a7a5a" /><rect x="627.55" y="210.10" width="3.40" height="2.60" fill="#262626" rx="0.6"/><rect x="628.15" y="211.80" width="2.20" height="0.80" fill="#8a7a5a" /><rect x="631.40" y="210.10" width="3.40" height="2.60" fill="#262626" rx="0.6"/><rect x="632.00" y="211.80" width="2.20" height="0.80" fill="#8a7a5a" /><rect x="635.25" y="210.10" width="3.40" height="2.60" fill="#262626" rx="0.6"/><rect x="635.85" y="211.80" width="2.20" height="0.80" fill="#8a7a5a" /><rect x="639.10" y="210.10" width="3.40" height="2.60" fill="#262626" rx="0.6"/><rect x="639.70" y="211.80" width="2.20" height="0.80" fill="#8a7a5a" /><rect x="642.95" y="210.10" width="3.40" height="2.60" fill="#262626" rx="0.6"/><rect x="643.55" y="211.80" width="2.20" height="0.80" fill="#8a7a5a" /><rect x="623.70" y="208.80" width="22.50" height="1.10" fill="#efefef" /><rect x="647.80" y="204.20" width="23.40" height="10.20" fill="#d4d4d4" /><rect x="648.30" y="206.00" width="3.40" height="2.60" fill="#262626" rx="0.6"/><rect x="648.90" y="207.70" width="2.20" height="0.80" fill="#8a7a5a" /><rect x="652.15" y="206.00" width="3.40" height="2.60" fill="#262626" rx="0.6"/><rect x="652.75" y="207.70" width="2.20" height="0.80" fill="#8a7a5a" /><rect x="656.00" y="206.00" width="3.40" height="2.60" fill="#262626" rx="0.6"/><rect x="656.60" y="207.70" width="2.20" height="0.80" fill="#8a7a5a" /><rect x="659.85" y="206.00" width="3.40" height="2.60" fill="#262626" rx="0.6"/><rect x="660.45" y="207.70" width="2.20" height="0.80" fill="#8a7a5a" /><rect x="663.70" y="206.00" width="3.40" height="2.60" fill="#262626" rx="0.6"/><rect x="664.30" y="207.70" width="2.20" height="0.80" fill="#8a7a5a" /><rect x="667.55" y="206.00" width="3.40" height="2.60" fill="#262626" rx="0.6"/><rect x="668.15" y="207.70" width="2.20" height="0.80" fill="#8a7a5a" /><rect x="648.30" y="210.10" width="3.40" height="2.60" fill="#262626" rx="0.6"/><rect x="648.90" y="211.80" width="2.20" height="0.80" fill="#8a7a5a" /><rect x="652.15" y="210.10" width="3.40" height="2.60" fill="#262626" rx="0.6"/><rect x="652.75" y="211.80" width="2.20" height="0.80" fill="#8a7a5a" /><rect x="656.00" y="210.10" width="3.40" height="2.60" fill="#262626" rx="0.6"/><rect x="656.60" y="211.80" width="2.20" height="0.80" fill="#8a7a5a" /><rect x="659.85" y="210.10" width="3.40" height="2.60" fill="#262626" rx="0.6"/><rect x="660.45" y="211.80" width="2.20" height="0.80" fill="#8a7a5a" /><rect x="663.70" y="210.10" width="3.40" height="2.60" fill="#262626" rx="0.6"/><rect x="664.30" y="211.80" width="2.20" height="0.80" fill="#8a7a5a" /><rect x="667.55" y="210.10" width="3.40" height="2.60" fill="#262626" rx="0.6"/><rect x="668.15" y="211.80" width="2.20" height="0.80" fill="#8a7a5a" /><rect x="648.30" y="208.80" width="22.50" height="1.10" fill="#efefef" /><rect x="672.20" y="204.20" width="23.40" height="10.20" fill="#d4d4d4" /><rect x="672.70" y="206.00" width="3.40" height="2.60" fill="#262626" rx="0.6"/><rect x="673.30" y="207.70" width="2.20" height="0.80" fill="#8a7a5a" /><rect x="676.55" y="206.00" width="3.40" height="2.60" fill="#262626" rx="0.6"/><rect x="677.15" y="207.70" width="2.20" height="0.80" fill="#8a7a5a" /><rect x="680.40" y="206.00" width="3.40" height="2.60" fill="#262626" rx="0.6"/><rect x="681.00" y="207.70" width="2.20" height="0.80" fill="#8a7a5a" /><rect x="684.25" y="206.00" width="3.40" height="2.60" fill="#262626" rx="0.6"/><rect x="684.85" y="207.70" width="2.20" height="0.80" fill="#8a7a5a" /><rect x="688.10" y="206.00" width="3.40" height="2.60" fill="#262626" rx="0.6"/><rect x="688.70" y="207.70" width="2.20" height="0.80" fill="#8a7a5a" /><rect x="691.95" y="206.00" width="3.40" height="2.60" fill="#262626" rx="0.6"/><rect x="692.55" y="207.70" width="2.20" height="0.80" fill="#8a7a5a" /><rect x="672.70" y="210.10" width="3.40" height="2.60" fill="#262626" rx="0.6"/><rect x="673.30" y="211.80" width="2.20" height="0.80" fill="#8a7a5a" /><rect x="676.55" y="210.10" width="3.40" height="2.60" fill="#262626" rx="0.6"/><rect x="677.15" y="211.80" width="2.20" height="0.80" fill="#8a7a5a" /><rect x="680.40" y="210.10" width="3.40" height="2.60" fill="#262626" rx="0.6"/><rect x="681.00" y="211.80" width="2.20" height="0.80" fill="#8a7a5a" /><rect x="684.25" y="210.10" width="3.40" height="2.60" fill="#262626" rx="0.6"/><rect x="684.85" y="211.80" width="2.20" height="0.80" fill="#8a7a5a" /><rect x="688.10" y="210.10" width="3.40" height="2.60" fill="#262626" rx="0.6"/><rect x="688.70" y="211.80" width="2.20" height="0.80" fill="#8a7a5a" /><rect x="691.95" y="210.10" width="3.40" height="2.60" fill="#262626" rx="0.6"/><rect x="692.55" y="211.80" width="2.20" height="0.80" fill="#8a7a5a" /><rect x="672.70" y="208.80" width="22.50" height="1.10" fill="#efefef" /><rect x="697.00" y="204.20" width="23.40" height="10.20" fill="#d4d4d4" /><rect x="697.50" y="206.00" width="3.40" height="2.60" fill="#262626" rx="0.6"/><rect x="698.10" y="207.70" width="2.20" height="0.80" fill="#8a7a5a" /><rect x="701.35" y="206.00" width="3.40" height="2.60" fill="#262626" rx="0.6"/><rect x="701.95" y="207.70" width="2.20" height="0.80" fill="#8a7a5a" /><rect x="705.20" y="206.00" width="3.40" height="2.60" fill="#262626" rx="0.6"/><rect x="705.80" y="207.70" width="2.20" height="0.80" fill="#8a7a5a" /><rect x="709.05" y="206.00" width="3.40" height="2.60" fill="#262626" rx="0.6"/><rect x="709.65" y="207.70" width="2.20" height="0.80" fill="#8a7a5a" /><rect x="712.90" y="206.00" width="3.40" height="2.60" fill="#262626" rx="0.6"/><rect x="713.50" y="207.70" width="2.20" height="0.80" fill="#8a7a5a" /><rect x="716.75" y="206.00" width="3.40" height="2.60" fill="#262626" rx="0.6"/><rect x="717.35" y="207.70" width="2.20" height="0.80" fill="#8a7a5a" /><rect x="697.50" y="210.10" width="3.40" height="2.60" fill="#262626" rx="0.6"/><rect x="698.10" y="211.80" width="2.20" height="0.80" fill="#8a7a5a" /><rect x="701.35" y="210.10" width="3.40" height="2.60" fill="#262626" rx="0.6"/><rect x="701.95" y="211.80" width="2.20" height="0.80" fill="#8a7a5a" /><rect x="705.20" y="210.10" width="3.40" height="2.60" fill="#262626" rx="0.6"/><rect x="705.80" y="211.80" width="2.20" height="0.80" fill="#8a7a5a" /><rect x="709.05" y="210.10" width="3.40" height="2.60" fill="#262626" rx="0.6"/><rect x="709.65" y="211.80" width="2.20" height="0.80" fill="#8a7a5a" /><rect x="712.90" y="210.10" width="3.40" height="2.60" fill="#262626" rx="0.6"/><rect x="713.50" y="211.80" width="2.20" height="0.80" fill="#8a7a5a" /><rect x="716.75" y="210.10" width="3.40" height="2.60" fill="#262626" rx="0.6"/><rect x="717.35" y="211.80" width="2.20" height="0.80" fill="#8a7a5a" /><rect x="697.50" y="208.80" width="22.50" height="1.10" fill="#efefef" /><rect x="623.50" y="204.20" width="3.00" height="1.30" fill="#555" /><rect x="649.00" y="204.20" width="21.00" height="1.10" fill="#4a4a4a" /><rect x="673.00" y="204.20" width="46.00" height="1.10" fill="#4a4a4a" /><rect x="720.20" y="204.20" width="0.90" height="10.40" fill="#8a8a8a" /><rect x="721.50" y="204.70" width="16.50" height="9.50" fill="#c6c6c6" /><rect x="722.30" y="206.30" width="15.00" height="2.20" fill="#555" /><rect x="722.30" y="210.20" width="15.00" height="2.20" fill="#535353" /><rect x="739.00" y="205.20" width="1.50" height="1.50" fill="#444" /><rect x="616.20" y="214.90" width="133.00" height="0.80" fill="#aebbc9" /><rect x="616.20" y="215.60" width="133.00" height="12.40" fill="#cdcdcd" /><rect x="616.20" y="215.60" width="5.60" height="12.40" fill="#dadada" /><rect x="742.00" y="215.60" width="7.20" height="12.40" fill="#d8d8d8" /><rect x="617.50" y="217.60" width="2.50" height="2.00" fill="#f2f2f2" /><rect x="617.50" y="223.10" width="2.50" height="2.00" fill="#f2f2f2" /><rect x="744.00" y="217.60" width="2.50" height="2.00" fill="#eeeeee" /><rect x="744.00" y="223.10" width="2.50" height="2.00" fill="#eeeeee" /><rect x="623.20" y="216.60" width="23.40" height="10.20" fill="#d4d4d4" /><rect x="623.70" y="218.40" width="3.40" height="2.60" fill="#262626" rx="0.6"/><rect x="624.30" y="220.10" width="2.20" height="0.80" fill="#8a7a5a" /><rect x="627.55" y="218.40" width="3.40" height="2.60" fill="#262626" rx="0.6"/><rect x="628.15" y="220.10" width="2.20" height="0.80" fill="#8a7a5a" /><rect x="631.40" y="218.40" width="3.40" height="2.60" fill="#262626" rx="0.6"/><rect x="632.00" y="220.10" width="2.20" height="0.80" fill="#8a7a5a" /><rect x="635.25" y="218.40" width="3.40" height="2.60" fill="#262626" rx="0.6"/><rect x="635.85" y="220.10" width="2.20" height="0.80" fill="#8a7a5a" /><rect x="639.10" y="218.40" width="3.40" height="2.60" fill="#262626" rx="0.6"/><rect x="639.70" y="220.10" width="2.20" height="0.80" fill="#8a7a5a" /><rect x="642.95" y="218.40" width="3.40" height="2.60" fill="#262626" rx="0.6"/><rect x="643.55" y="220.10" width="2.20" height="0.80" fill="#8a7a5a" /><rect x="623.70" y="222.50" width="3.40" height="2.60" fill="#262626" rx="0.6"/><rect x="624.30" y="224.20" width="2.20" height="0.80" fill="#8a7a5a" /><rect x="627.55" y="222.50" width="3.40" height="2.60" fill="#262626" rx="0.6"/><rect x="628.15" y="224.20" width="2.20" height="0.80" fill="#8a7a5a" /><rect x="631.40" y="222.50" width="3.40" height="2.60" fill="#262626" rx="0.6"/><rect x="632.00" y="224.20" width="2.20" height="0.80" fill="#8a7a5a" /><rect x="635.25" y="222.50" width="3.40" height="2.60" fill="#262626" rx="0.6"/><rect x="635.85" y="224.20" width="2.20" height="0.80" fill="#8a7a5a" /><rect x="639.10" y="222.50" width="3.40" height="2.60" fill="#262626" rx="0.6"/><rect x="639.70" y="224.20" width="2.20" height="0.80" fill="#8a7a5a" /><rect x="642.95" y="222.50" width="3.40" height="2.60" fill="#262626" rx="0.6"/><rect x="643.55" y="224.20" width="2.20" height="0.80" fill="#8a7a5a" /><rect x="623.70" y="221.20" width="22.50" height="1.10" fill="#efefef" /><rect x="647.80" y="216.60" width="23.40" height="10.20" fill="#d4d4d4" /><rect x="648.30" y="218.40" width="3.40" height="2.60" fill="#262626" rx="0.6"/><rect x="648.90" y="220.10" width="2.20" height="0.80" fill="#8a7a5a" /><rect x="652.15" y="218.40" width="3.40" height="2.60" fill="#262626" rx="0.6"/><rect x="652.75" y="220.10" width="2.20" height="0.80" fill="#8a7a5a" /><rect x="656.00" y="218.40" width="3.40" height="2.60" fill="#262626" rx="0.6"/><rect x="656.60" y="220.10" width="2.20" height="0.80" fill="#8a7a5a" /><rect x="659.85" y="218.40" width="3.40" height="2.60" fill="#262626" rx="0.6"/><rect x="660.45" y="220.10" width="2.20" height="0.80" fill="#8a7a5a" /><rect x="663.70" y="218.40" width="3.40" height="2.60" fill="#262626" rx="0.6"/><rect x="664.30" y="220.10" width="2.20" height="0.80" fill="#8a7a5a" /><rect x="667.55" y="218.40" width="3.40" height="2.60" fill="#262626" rx="0.6"/><rect x="668.15" y="220.10" width="2.20" height="0.80" fill="#8a7a5a" /><rect x="648.30" y="222.50" width="3.40" height="2.60" fill="#262626" rx="0.6"/><rect x="648.90" y="224.20" width="2.20" height="0.80" fill="#8a7a5a" /><rect x="652.15" y="222.50" width="3.40" height="2.60" fill="#262626" rx="0.6"/><rect x="652.75" y="224.20" width="2.20" height="0.80" fill="#8a7a5a" /><rect x="656.00" y="222.50" width="3.40" height="2.60" fill="#262626" rx="0.6"/><rect x="656.60" y="224.20" width="2.20" height="0.80" fill="#8a7a5a" /><rect x="659.85" y="222.50" width="3.40" height="2.60" fill="#262626" rx="0.6"/><rect x="660.45" y="224.20" width="2.20" height="0.80" fill="#8a7a5a" /><rect x="663.70" y="222.50" width="3.40" height="2.60" fill="#262626" rx="0.6"/><rect x="664.30" y="224.20" width="2.20" height="0.80" fill="#8a7a5a" /><rect x="667.55" y="222.50" width="3.40" height="2.60" fill="#262626" rx="0.6"/><rect x="668.15" y="224.20" width="2.20" height="0.80" fill="#8a7a5a" /><rect x="648.30" y="221.20" width="22.50" height="1.10" fill="#efefef" /><rect x="672.20" y="216.60" width="23.40" height="10.20" fill="#d4d4d4" /><rect x="672.70" y="218.40" width="3.40" height="2.60" fill="#262626" rx="0.6"/><rect x="673.30" y="220.10" width="2.20" height="0.80" fill="#8a7a5a" /><rect x="676.55" y="218.40" width="3.40" height="2.60" fill="#262626" rx="0.6"/><rect x="677.15" y="220.10" width="2.20" height="0.80" fill="#8a7a5a" /><rect x="680.40" y="218.40" width="3.40" height="2.60" fill="#262626" rx="0.6"/><rect x="681.00" y="220.10" width="2.20" height="0.80" fill="#8a7a5a" /><rect x="684.25" y="218.40" width="3.40" height="2.60" fill="#262626" rx="0.6"/><rect x="684.85" y="220.10" width="2.20" height="0.80" fill="#8a7a5a" /><rect x="688.10" y="218.40" width="3.40" height="2.60" fill="#262626" rx="0.6"/><rect x="688.70" y="220.10" width="2.20" height="0.80" fill="#8a7a5a" /><rect x="691.95" y="218.40" width="3.40" height="2.60" fill="#262626" rx="0.6"/><rect x="692.55" y="220.10" width="2.20" height="0.80" fill="#8a7a5a" /><rect x="672.70" y="222.50" width="3.40" height="2.60" fill="#262626" rx="0.6"/><rect x="673.30" y="224.20" width="2.20" height="0.80" fill="#8a7a5a" /><rect x="676.55" y="222.50" width="3.40" height="2.60" fill="#262626" rx="0.6"/><rect x="677.15" y="224.20" width="2.20" height="0.80" fill="#8a7a5a" /><rect x="680.40" y="222.50" width="3.40" height="2.60" fill="#262626" rx="0.6"/><rect x="681.00" y="224.20" width="2.20" height="0.80" fill="#8a7a5a" /><rect x="684.25" y="222.50" width="3.40" height="2.60" fill="#262626" rx="0.6"/><rect x="684.85" y="224.20" width="2.20" height="0.80" fill="#8a7a5a" /><rect x="688.10" y="222.50" width="3.40" height="2.60" fill="#262626" rx="0.6"/><rect x="688.70" y="224.20" width="2.20" height="0.80" fill="#8a7a5a" /><rect x="691.95" y="222.50" width="3.40" height="2.60" fill="#262626" rx="0.6"/><rect x="692.55" y="224.20" width="2.20" height="0.80" fill="#8a7a5a" /><rect x="672.70" y="221.20" width="22.50" height="1.10" fill="#efefef" /><rect x="697.00" y="216.60" width="23.40" height="10.20" fill="#d4d4d4" /><rect x="697.50" y="218.40" width="3.40" height="2.60" fill="#262626" rx="0.6"/><rect x="698.10" y="220.10" width="2.20" height="0.80" fill="#8a7a5a" /><rect x="701.35" y="218.40" width="3.40" height="2.60" fill="#262626" rx="0.6"/><rect x="701.95" y="220.10" width="2.20" height="0.80" fill="#8a7a5a" /><rect x="705.20" y="218.40" width="3.40" height="2.60" fill="#262626" rx="0.6"/><rect x="705.80" y="220.10" width="2.20" height="0.80" fill="#8a7a5a" /><rect x="709.05" y="218.40" width="3.40" height="2.60" fill="#262626" rx="0.6"/><rect x="709.65" y="220.10" width="2.20" height="0.80" fill="#8a7a5a" /><rect x="712.90" y="218.40" width="3.40" height="2.60" fill="#262626" rx="0.6"/><rect x="713.50" y="220.10" width="2.20" height="0.80" fill="#8a7a5a" /><rect x="716.75" y="218.40" width="3.40" height="2.60" fill="#262626" rx="0.6"/><rect x="717.35" y="220.10" width="2.20" height="0.80" fill="#8a7a5a" /><rect x="697.50" y="222.50" width="3.40" height="2.60" fill="#262626" rx="0.6"/><rect x="698.10" y="224.20" width="2.20" height="0.80" fill="#8a7a5a" /><rect x="701.35" y="222.50" width="3.40" height="2.60" fill="#262626" rx="0.6"/><rect x="701.95" y="224.20" width="2.20" height="0.80" fill="#8a7a5a" /><rect x="705.20" y="222.50" width="3.40" height="2.60" fill="#262626" rx="0.6"/><rect x="705.80" y="224.20" width="2.20" height="0.80" fill="#8a7a5a" /><rect x="709.05" y="222.50" width="3.40" height="2.60" fill="#262626" rx="0.6"/><rect x="709.65" y="224.20" width="2.20" height="0.80" fill="#8a7a5a" /><rect x="712.90" y="222.50" width="3.40" height="2.60" fill="#262626" rx="0.6"/><rect x="713.50" y="224.20" width="2.20" height="0.80" fill="#8a7a5a" /><rect x="716.75" y="222.50" width="3.40" height="2.60" fill="#262626" rx="0.6"/><rect x="717.35" y="224.20" width="2.20" height="0.80" fill="#8a7a5a" /><rect x="697.50" y="221.20" width="22.50" height="1.10" fill="#efefef" /><rect x="623.50" y="216.60" width="3.00" height="1.30" fill="#555" /><rect x="649.00" y="216.60" width="21.00" height="1.10" fill="#4a4a4a" /><rect x="673.00" y="216.60" width="46.00" height="1.10" fill="#4a4a4a" /><rect x="720.20" y="216.60" width="0.90" height="10.40" fill="#8a8a8a" /><rect x="721.50" y="217.10" width="16.50" height="9.50" fill="#c6c6c6" /><rect x="722.30" y="218.70" width="15.00" height="2.20" fill="#555" /><rect x="722.30" y="222.60" width="15.00" height="2.20" fill="#535353" /><rect x="739.00" y="217.60" width="1.50" height="1.50" fill="#444" /><rect x="616.20" y="227.30" width="133.00" height="0.80" fill="#aebbc9" /><rect x="616.20" y="228.00" width="133.00" height="12.40" fill="#cdcdcd" /><rect x="616.20" y="228.00" width="5.60" height="12.40" fill="#dadada" /><rect x="742.00" y="228.00" width="7.20" height="12.40" fill="#d8d8d8" /><rect x="617.50" y="230.00" width="2.50" height="2.00" fill="#f2f2f2" /><rect x="617.50" y="235.50" width="2.50" height="2.00" fill="#f2f2f2" /><rect x="744.00" y="230.00" width="2.50" height="2.00" fill="#eeeeee" /><rect x="744.00" y="235.50" width="2.50" height="2.00" fill="#eeeeee" /><rect x="623.20" y="229.00" width="23.40" height="10.20" fill="#d4d4d4" /><rect x="623.70" y="230.80" width="3.40" height="2.60" fill="#262626" rx="0.6"/><rect x="624.30" y="232.50" width="2.20" height="0.80" fill="#8a7a5a" /><rect x="627.55" y="230.80" width="3.40" height="2.60" fill="#262626" rx="0.6"/><rect x="628.15" y="232.50" width="2.20" height="0.80" fill="#8a7a5a" /><rect x="631.40" y="230.80" width="3.40" height="2.60" fill="#262626" rx="0.6"/><rect x="632.00" y="232.50" width="2.20" height="0.80" fill="#8a7a5a" /><rect x="635.25" y="230.80" width="3.40" height="2.60" fill="#262626" rx="0.6"/><rect x="635.85" y="232.50" width="2.20" height="0.80" fill="#8a7a5a" /><rect x="639.10" y="230.80" width="3.40" height="2.60" fill="#262626" rx="0.6"/><rect x="639.70" y="232.50" width="2.20" height="0.80" fill="#8a7a5a" /><rect x="642.95" y="230.80" width="3.40" height="2.60" fill="#262626" rx="0.6"/><rect x="643.55" y="232.50" width="2.20" height="0.80" fill="#8a7a5a" /><rect x="623.70" y="234.90" width="3.40" height="2.60" fill="#262626" rx="0.6"/><rect x="624.30" y="236.60" width="2.20" height="0.80" fill="#8a7a5a" /><rect x="627.55" y="234.90" width="3.40" height="2.60" fill="#262626" rx="0.6"/><rect x="628.15" y="236.60" width="2.20" height="0.80" fill="#8a7a5a" /><rect x="631.40" y="234.90" width="3.40" height="2.60" fill="#262626" rx="0.6"/><rect x="632.00" y="236.60" width="2.20" height="0.80" fill="#8a7a5a" /><rect x="635.25" y="234.90" width="3.40" height="2.60" fill="#262626" rx="0.6"/><rect x="635.85" y="236.60" width="2.20" height="0.80" fill="#8a7a5a" /><rect x="639.10" y="234.90" width="3.40" height="2.60" fill="#262626" rx="0.6"/><rect x="639.70" y="236.60" width="2.20" height="0.80" fill="#8a7a5a" /><rect x="642.95" y="234.90" width="3.40" height="2.60" fill="#262626" rx="0.6"/><rect x="643.55" y="236.60" width="2.20" height="0.80" fill="#8a7a5a" /><rect x="623.70" y="233.60" width="22.50" height="1.10" fill="#efefef" /><rect x="647.80" y="229.00" width="23.40" height="10.20" fill="#d4d4d4" /><rect x="648.30" y="230.80" width="3.40" height="2.60" fill="#262626" rx="0.6"/><rect x="648.90" y="232.50" width="2.20" height="0.80" fill="#8a7a5a" /><rect x="652.15" y="230.80" width="3.40" height="2.60" fill="#262626" rx="0.6"/><rect x="652.75" y="232.50" width="2.20" height="0.80" fill="#8a7a5a" /><rect x="656.00" y="230.80" width="3.40" height="2.60" fill="#262626" rx="0.6"/><rect x="656.60" y="232.50" width="2.20" height="0.80" fill="#8a7a5a" /><rect x="659.85" y="230.80" width="3.40" height="2.60" fill="#262626" rx="0.6"/><rect x="660.45" y="232.50" width="2.20" height="0.80" fill="#8a7a5a" /><rect x="663.70" y="230.80" width="3.40" height="2.60" fill="#262626" rx="0.6"/><rect x="664.30" y="232.50" width="2.20" height="0.80" fill="#8a7a5a" /><rect x="667.55" y="230.80" width="3.40" height="2.60" fill="#262626" rx="0.6"/><rect x="668.15" y="232.50" width="2.20" height="0.80" fill="#8a7a5a" /><rect x="648.30" y="234.90" width="3.40" height="2.60" fill="#262626" rx="0.6"/><rect x="648.90" y="236.60" width="2.20" height="0.80" fill="#8a7a5a" /><rect x="652.15" y="234.90" width="3.40" height="2.60" fill="#262626" rx="0.6"/><rect x="652.75" y="236.60" width="2.20" height="0.80" fill="#8a7a5a" /><rect x="656.00" y="234.90" width="3.40" height="2.60" fill="#262626" rx="0.6"/><rect x="656.60" y="236.60" width="2.20" height="0.80" fill="#8a7a5a" /><rect x="659.85" y="234.90" width="3.40" height="2.60" fill="#262626" rx="0.6"/><rect x="660.45" y="236.60" width="2.20" height="0.80" fill="#8a7a5a" /><rect x="663.70" y="234.90" width="3.40" height="2.60" fill="#262626" rx="0.6"/><rect x="664.30" y="236.60" width="2.20" height="0.80" fill="#8a7a5a" /><rect x="667.55" y="234.90" width="3.40" height="2.60" fill="#262626" rx="0.6"/><rect x="668.15" y="236.60" width="2.20" height="0.80" fill="#8a7a5a" /><rect x="648.30" y="233.60" width="22.50" height="1.10" fill="#efefef" /><rect x="672.20" y="229.00" width="23.40" height="10.20" fill="#d4d4d4" /><rect x="672.70" y="230.80" width="3.40" height="2.60" fill="#262626" rx="0.6"/><rect x="673.30" y="232.50" width="2.20" height="0.80" fill="#8a7a5a" /><rect x="676.55" y="230.80" width="3.40" height="2.60" fill="#262626" rx="0.6"/><rect x="677.15" y="232.50" width="2.20" height="0.80" fill="#8a7a5a" /><rect x="680.40" y="230.80" width="3.40" height="2.60" fill="#262626" rx="0.6"/><rect x="681.00" y="232.50" width="2.20" height="0.80" fill="#8a7a5a" /><rect x="684.25" y="230.80" width="3.40" height="2.60" fill="#262626" rx="0.6"/><rect x="684.85" y="232.50" width="2.20" height="0.80" fill="#8a7a5a" /><rect x="688.10" y="230.80" width="3.40" height="2.60" fill="#262626" rx="0.6"/><rect x="688.70" y="232.50" width="2.20" height="0.80" fill="#8a7a5a" /><rect x="691.95" y="230.80" width="3.40" height="2.60" fill="#262626" rx="0.6"/><rect x="692.55" y="232.50" width="2.20" height="0.80" fill="#8a7a5a" /><rect x="672.70" y="234.90" width="3.40" height="2.60" fill="#262626" rx="0.6"/><rect x="673.30" y="236.60" width="2.20" height="0.80" fill="#8a7a5a" /><rect x="676.55" y="234.90" width="3.40" height="2.60" fill="#262626" rx="0.6"/><rect x="677.15" y="236.60" width="2.20" height="0.80" fill="#8a7a5a" /><rect x="680.40" y="234.90" width="3.40" height="2.60" fill="#262626" rx="0.6"/><rect x="681.00" y="236.60" width="2.20" height="0.80" fill="#8a7a5a" /><rect x="684.25" y="234.90" width="3.40" height="2.60" fill="#262626" rx="0.6"/><rect x="684.85" y="236.60" width="2.20" height="0.80" fill="#8a7a5a" /><rect x="688.10" y="234.90" width="3.40" height="2.60" fill="#262626" rx="0.6"/><rect x="688.70" y="236.60" width="2.20" height="0.80" fill="#8a7a5a" /><rect x="691.95" y="234.90" width="3.40" height="2.60" fill="#262626" rx="0.6"/><rect x="692.55" y="236.60" width="2.20" height="0.80" fill="#8a7a5a" /><rect x="672.70" y="233.60" width="22.50" height="1.10" fill="#efefef" /><rect x="697.00" y="229.00" width="23.40" height="10.20" fill="#d4d4d4" /><rect x="697.50" y="230.80" width="3.40" height="2.60" fill="#262626" rx="0.6"/><rect x="698.10" y="232.50" width="2.20" height="0.80" fill="#8a7a5a" /><rect x="701.35" y="230.80" width="3.40" height="2.60" fill="#262626" rx="0.6"/><rect x="701.95" y="232.50" width="2.20" height="0.80" fill="#8a7a5a" /><rect x="705.20" y="230.80" width="3.40" height="2.60" fill="#262626" rx="0.6"/><rect x="705.80" y="232.50" width="2.20" height="0.80" fill="#8a7a5a" /><rect x="709.05" y="230.80" width="3.40" height="2.60" fill="#262626" rx="0.6"/><rect x="709.65" y="232.50" width="2.20" height="0.80" fill="#8a7a5a" /><rect x="712.90" y="230.80" width="3.40" height="2.60" fill="#262626" rx="0.6"/><rect x="713.50" y="232.50" width="2.20" height="0.80" fill="#8a7a5a" /><rect x="716.75" y="230.80" width="3.40" height="2.60" fill="#262626" rx="0.6"/><rect x="717.35" y="232.50" width="2.20" height="0.80" fill="#8a7a5a" /><rect x="697.50" y="234.90" width="3.40" height="2.60" fill="#262626" rx="0.6"/><rect x="698.10" y="236.60" width="2.20" height="0.80" fill="#8a7a5a" /><rect x="701.35" y="234.90" width="3.40" height="2.60" fill="#262626" rx="0.6"/><rect x="701.95" y="236.60" width="2.20" height="0.80" fill="#8a7a5a" /><rect x="705.20" y="234.90" width="3.40" height="2.60" fill="#262626" rx="0.6"/><rect x="705.80" y="236.60" width="2.20" height="0.80" fill="#8a7a5a" /><rect x="709.05" y="234.90" width="3.40" height="2.60" fill="#262626" rx="0.6"/><rect x="709.65" y="236.60" width="2.20" height="0.80" fill="#8a7a5a" /><rect x="712.90" y="234.90" width="3.40" height="2.60" fill="#262626" rx="0.6"/><rect x="713.50" y="236.60" width="2.20" height="0.80" fill="#8a7a5a" /><rect x="716.75" y="234.90" width="3.40" height="2.60" fill="#262626" rx="0.6"/><rect x="717.35" y="236.60" width="2.20" height="0.80" fill="#8a7a5a" /><rect x="697.50" y="233.60" width="22.50" height="1.10" fill="#efefef" /><rect x="623.50" y="229.00" width="3.00" height="1.30" fill="#555" /><rect x="649.00" y="229.00" width="21.00" height="1.10" fill="#4a4a4a" /><rect x="673.00" y="229.00" width="46.00" height="1.10" fill="#4a4a4a" /><rect x="720.20" y="229.00" width="0.90" height="10.40" fill="#8a8a8a" /><rect x="721.50" y="229.50" width="16.50" height="9.50" fill="#c6c6c6" /><rect x="722.30" y="231.10" width="15.00" height="2.20" fill="#555" /><rect x="722.30" y="235.00" width="15.00" height="2.20" fill="#535353" /><rect x="739.00" y="230.00" width="1.50" height="1.50" fill="#444" /><rect x="616.20" y="239.70" width="133.00" height="0.80" fill="#aebbc9" /><rect x="616.20" y="240.40" width="131.40" height="24.80" fill="#4c4c4c" /><rect x="614.00" y="240.00" width="135.00" height="1.10" fill="#6f7680" /><rect x="617.00" y="241.20" width="2.80" height="1.60" fill="#a9a9a9" /><rect x="617.00" y="262.60" width="2.80" height="1.60" fill="#a9a9a9" /><rect x="744.50" y="241.20" width="2.80" height="1.60" fill="#a5a5a5" /><rect x="744.50" y="262.60" width="2.80" height="1.60" fill="#a5a5a5" /><rect x="623.00" y="241.40" width="14.00" height="1.60" fill="#7c7c7c" /><rect x="626.00" y="241.50" width="9.00" height="1.40" fill="#b4b4b4" /><rect x="690.00" y="241.40" width="25.00" height="1.60" fill="#74742e" /><rect x="715.00" y="241.20" width="22.00" height="2.20" fill="#6a6a34" /><rect x="715.30" y="241.30" width="1.10" height="2.00" fill="#b4b440" /><rect x="717.28" y="241.30" width="1.10" height="2.00" fill="#b4b440" /><rect x="719.26" y="241.30" width="1.10" height="2.00" fill="#b4b440" /><rect x="721.24" y="241.30" width="1.10" height="2.00" fill="#b4b440" /><rect x="723.22" y="241.30" width="1.10" height="2.00" fill="#b4b440" /><rect x="725.20" y="241.30" width="1.10" height="2.00" fill="#b4b440" /><rect x="727.18" y="241.30" width="1.10" height="2.00" fill="#b4b440" /><rect x="729.16" y="241.30" width="1.10" height="2.00" fill="#b4b440" /><rect x="731.14" y="241.30" width="1.10" height="2.00" fill="#b4b440" /><rect x="733.12" y="241.30" width="1.10" height="2.00" fill="#b4b440" /><rect x="735.10" y="241.30" width="1.10" height="2.00" fill="#b4b440" /><rect x="738.00" y="241.60" width="3.00" height="1.30" fill="#5e5e30" /><rect x="622.80" y="244.80" width="26.20" height="1.30" fill="#858585" /><rect x="622.80" y="246.10" width="26.20" height="4.00" fill="#5a5a5a" /><path d="M623.80 246.30h3.6v1.9l-0.7 0.7h-0.5v0.5h-1.2v-0.5h-0.5l-0.7 -0.7z" fill="#050505" /><path d="M628.00 246.30h3.6v1.9l-0.7 0.7h-0.5v0.5h-1.2v-0.5h-0.5l-0.7 -0.7z" fill="#050505" /><path d="M632.20 246.30h3.6v1.9l-0.7 0.7h-0.5v0.5h-1.2v-0.5h-0.5l-0.7 -0.7z" fill="#050505" /><path d="M636.40 246.30h3.6v1.9l-0.7 0.7h-0.5v0.5h-1.2v-0.5h-0.5l-0.7 -0.7z" fill="#050505" /><path d="M640.60 246.30h3.6v1.9l-0.7 0.7h-0.5v0.5h-1.2v-0.5h-0.5l-0.7 -0.7z" fill="#050505" /><path d="M644.80 246.30h3.6v1.9l-0.7 0.7h-0.5v0.5h-1.2v-0.5h-0.5l-0.7 -0.7z" fill="#050505" /><rect x="622.80" y="257.40" width="26.20" height="1.30" fill="#858585" /><rect x="622.80" y="258.70" width="26.20" height="4.00" fill="#5a5a5a" /><path d="M623.80 258.90h3.6v1.9l-0.7 0.7h-0.5v0.5h-1.2v-0.5h-0.5l-0.7 -0.7z" fill="#050505" /><path d="M628.00 258.90h3.6v1.9l-0.7 0.7h-0.5v0.5h-1.2v-0.5h-0.5l-0.7 -0.7z" fill="#050505" /><path d="M632.20 258.90h3.6v1.9l-0.7 0.7h-0.5v0.5h-1.2v-0.5h-0.5l-0.7 -0.7z" fill="#050505" /><path d="M636.40 258.90h3.6v1.9l-0.7 0.7h-0.5v0.5h-1.2v-0.5h-0.5l-0.7 -0.7z" fill="#050505" /><path d="M640.60 258.90h3.6v1.9l-0.7 0.7h-0.5v0.5h-1.2v-0.5h-0.5l-0.7 -0.7z" fill="#050505" /><path d="M644.80 258.90h3.6v1.9l-0.7 0.7h-0.5v0.5h-1.2v-0.5h-0.5l-0.7 -0.7z" fill="#050505" /><rect x="653.30" y="244.80" width="26.20" height="1.30" fill="#858585" /><rect x="653.30" y="246.10" width="26.20" height="4.00" fill="#5a5a5a" /><path d="M654.30 246.30h3.6v1.9l-0.7 0.7h-0.5v0.5h-1.2v-0.5h-0.5l-0.7 -0.7z" fill="#050505" /><path d="M658.50 246.30h3.6v1.9l-0.7 0.7h-0.5v0.5h-1.2v-0.5h-0.5l-0.7 -0.7z" fill="#050505" /><path d="M662.70 246.30h3.6v1.9l-0.7 0.7h-0.5v0.5h-1.2v-0.5h-0.5l-0.7 -0.7z" fill="#050505" /><path d="M666.90 246.30h3.6v1.9l-0.7 0.7h-0.5v0.5h-1.2v-0.5h-0.5l-0.7 -0.7z" fill="#050505" /><path d="M671.10 246.30h3.6v1.9l-0.7 0.7h-0.5v0.5h-1.2v-0.5h-0.5l-0.7 -0.7z" fill="#050505" /><path d="M675.30 246.30h3.6v1.9l-0.7 0.7h-0.5v0.5h-1.2v-0.5h-0.5l-0.7 -0.7z" fill="#050505" /><rect x="653.30" y="257.40" width="26.20" height="1.30" fill="#858585" /><rect x="653.30" y="258.70" width="26.20" height="4.00" fill="#5a5a5a" /><path d="M654.30 258.90h3.6v1.9l-0.7 0.7h-0.5v0.5h-1.2v-0.5h-0.5l-0.7 -0.7z" fill="#050505" /><path d="M658.50 258.90h3.6v1.9l-0.7 0.7h-0.5v0.5h-1.2v-0.5h-0.5l-0.7 -0.7z" fill="#050505" /><path d="M662.70 258.90h3.6v1.9l-0.7 0.7h-0.5v0.5h-1.2v-0.5h-0.5l-0.7 -0.7z" fill="#050505" /><path d="M666.90 258.90h3.6v1.9l-0.7 0.7h-0.5v0.5h-1.2v-0.5h-0.5l-0.7 -0.7z" fill="#050505" /><path d="M671.10 258.90h3.6v1.9l-0.7 0.7h-0.5v0.5h-1.2v-0.5h-0.5l-0.7 -0.7z" fill="#050505" /><path d="M675.30 258.90h3.6v1.9l-0.7 0.7h-0.5v0.5h-1.2v-0.5h-0.5l-0.7 -0.7z" fill="#050505" /><rect x="683.90" y="244.80" width="26.20" height="1.30" fill="#858585" /><rect x="683.90" y="246.10" width="26.20" height="4.00" fill="#5a5a5a" /><path d="M684.90 246.30h3.6v1.9l-0.7 0.7h-0.5v0.5h-1.2v-0.5h-0.5l-0.7 -0.7z" fill="#050505" /><path d="M689.10 246.30h3.6v1.9l-0.7 0.7h-0.5v0.5h-1.2v-0.5h-0.5l-0.7 -0.7z" fill="#050505" /><path d="M693.30 246.30h3.6v1.9l-0.7 0.7h-0.5v0.5h-1.2v-0.5h-0.5l-0.7 -0.7z" fill="#050505" /><path d="M697.50 246.30h3.6v1.9l-0.7 0.7h-0.5v0.5h-1.2v-0.5h-0.5l-0.7 -0.7z" fill="#050505" /><path d="M701.70 246.30h3.6v1.9l-0.7 0.7h-0.5v0.5h-1.2v-0.5h-0.5l-0.7 -0.7z" fill="#050505" /><path d="M705.90 246.30h3.6v1.9l-0.7 0.7h-0.5v0.5h-1.2v-0.5h-0.5l-0.7 -0.7z" fill="#050505" /><rect x="683.90" y="257.40" width="26.20" height="1.30" fill="#858585" /><rect x="683.90" y="258.70" width="26.20" height="4.00" fill="#5a5a5a" /><path d="M684.90 258.90h3.6v1.9l-0.7 0.7h-0.5v0.5h-1.2v-0.5h-0.5l-0.7 -0.7z" fill="#050505" /><path d="M689.10 258.90h3.6v1.9l-0.7 0.7h-0.5v0.5h-1.2v-0.5h-0.5l-0.7 -0.7z" fill="#050505" /><path d="M693.30 258.90h3.6v1.9l-0.7 0.7h-0.5v0.5h-1.2v-0.5h-0.5l-0.7 -0.7z" fill="#050505" /><path d="M697.50 258.90h3.6v1.9l-0.7 0.7h-0.5v0.5h-1.2v-0.5h-0.5l-0.7 -0.7z" fill="#050505" /><path d="M701.70 258.90h3.6v1.9l-0.7 0.7h-0.5v0.5h-1.2v-0.5h-0.5l-0.7 -0.7z" fill="#050505" /><path d="M705.90 258.90h3.6v1.9l-0.7 0.7h-0.5v0.5h-1.2v-0.5h-0.5l-0.7 -0.7z" fill="#050505" /><rect x="714.40" y="244.80" width="26.20" height="1.30" fill="#858585" /><rect x="714.40" y="246.10" width="26.20" height="4.00" fill="#5a5a5a" /><path d="M715.40 246.30h3.6v1.9l-0.7 0.7h-0.5v0.5h-1.2v-0.5h-0.5l-0.7 -0.7z" fill="#050505" /><path d="M719.60 246.30h3.6v1.9l-0.7 0.7h-0.5v0.5h-1.2v-0.5h-0.5l-0.7 -0.7z" fill="#050505" /><path d="M723.80 246.30h3.6v1.9l-0.7 0.7h-0.5v0.5h-1.2v-0.5h-0.5l-0.7 -0.7z" fill="#050505" /><path d="M728.00 246.30h3.6v1.9l-0.7 0.7h-0.5v0.5h-1.2v-0.5h-0.5l-0.7 -0.7z" fill="#050505" /><path d="M732.20 246.30h3.6v1.9l-0.7 0.7h-0.5v0.5h-1.2v-0.5h-0.5l-0.7 -0.7z" fill="#050505" /><path d="M736.40 246.30h3.6v1.9l-0.7 0.7h-0.5v0.5h-1.2v-0.5h-0.5l-0.7 -0.7z" fill="#050505" /><rect x="714.40" y="257.40" width="26.20" height="1.30" fill="#858585" /><rect x="714.40" y="258.70" width="26.20" height="4.00" fill="#5a5a5a" /><path d="M715.40 258.90h3.6v1.9l-0.7 0.7h-0.5v0.5h-1.2v-0.5h-0.5l-0.7 -0.7z" fill="#050505" /><path d="M719.60 258.90h3.6v1.9l-0.7 0.7h-0.5v0.5h-1.2v-0.5h-0.5l-0.7 -0.7z" fill="#050505" /><path d="M723.80 258.90h3.6v1.9l-0.7 0.7h-0.5v0.5h-1.2v-0.5h-0.5l-0.7 -0.7z" fill="#050505" /><path d="M728.00 258.90h3.6v1.9l-0.7 0.7h-0.5v0.5h-1.2v-0.5h-0.5l-0.7 -0.7z" fill="#050505" /><path d="M732.20 258.90h3.6v1.9l-0.7 0.7h-0.5v0.5h-1.2v-0.5h-0.5l-0.7 -0.7z" fill="#050505" /><path d="M736.40 258.90h3.6v1.9l-0.7 0.7h-0.5v0.5h-1.2v-0.5h-0.5l-0.7 -0.7z" fill="#050505" /><rect x="616.20" y="265.20" width="131.40" height="24.80" fill="#4c4c4c" /><rect x="614.00" y="264.80" width="135.00" height="1.10" fill="#6f7680" /><rect x="617.00" y="266.00" width="2.80" height="1.60" fill="#a9a9a9" /><rect x="617.00" y="287.40" width="2.80" height="1.60" fill="#a9a9a9" /><rect x="744.50" y="266.00" width="2.80" height="1.60" fill="#a5a5a5" /><rect x="744.50" y="287.40" width="2.80" height="1.60" fill="#a5a5a5" /><rect x="623.00" y="266.20" width="14.00" height="1.60" fill="#7c7c7c" /><rect x="626.00" y="266.30" width="9.00" height="1.40" fill="#b4b4b4" /><rect x="690.00" y="266.20" width="25.00" height="1.60" fill="#74742e" /><rect x="715.00" y="266.00" width="22.00" height="2.20" fill="#6a6a34" /><rect x="715.30" y="266.10" width="1.10" height="2.00" fill="#b4b440" /><rect x="717.28" y="266.10" width="1.10" height="2.00" fill="#b4b440" /><rect x="719.26" y="266.10" width="1.10" height="2.00" fill="#b4b440" /><rect x="721.24" y="266.10" width="1.10" height="2.00" fill="#b4b440" /><rect x="723.22" y="266.10" width="1.10" height="2.00" fill="#b4b440" /><rect x="725.20" y="266.10" width="1.10" height="2.00" fill="#b4b440" /><rect x="727.18" y="266.10" width="1.10" height="2.00" fill="#b4b440" /><rect x="729.16" y="266.10" width="1.10" height="2.00" fill="#b4b440" /><rect x="731.14" y="266.10" width="1.10" height="2.00" fill="#b4b440" /><rect x="733.12" y="266.10" width="1.10" height="2.00" fill="#b4b440" /><rect x="735.10" y="266.10" width="1.10" height="2.00" fill="#b4b440" /><rect x="738.00" y="266.40" width="3.00" height="1.30" fill="#5e5e30" /><rect x="622.80" y="269.60" width="26.20" height="1.30" fill="#858585" /><rect x="622.80" y="270.90" width="26.20" height="4.00" fill="#5a5a5a" /><path d="M623.80 271.10h3.6v1.9l-0.7 0.7h-0.5v0.5h-1.2v-0.5h-0.5l-0.7 -0.7z" fill="#050505" /><path d="M628.00 271.10h3.6v1.9l-0.7 0.7h-0.5v0.5h-1.2v-0.5h-0.5l-0.7 -0.7z" fill="#050505" /><path d="M632.20 271.10h3.6v1.9l-0.7 0.7h-0.5v0.5h-1.2v-0.5h-0.5l-0.7 -0.7z" fill="#050505" /><path d="M636.40 271.10h3.6v1.9l-0.7 0.7h-0.5v0.5h-1.2v-0.5h-0.5l-0.7 -0.7z" fill="#050505" /><path d="M640.60 271.10h3.6v1.9l-0.7 0.7h-0.5v0.5h-1.2v-0.5h-0.5l-0.7 -0.7z" fill="#050505" /><path d="M644.80 271.10h3.6v1.9l-0.7 0.7h-0.5v0.5h-1.2v-0.5h-0.5l-0.7 -0.7z" fill="#050505" /><rect x="622.80" y="282.20" width="26.20" height="1.30" fill="#858585" /><rect x="622.80" y="283.50" width="26.20" height="4.00" fill="#5a5a5a" /><path d="M623.80 283.70h3.6v1.9l-0.7 0.7h-0.5v0.5h-1.2v-0.5h-0.5l-0.7 -0.7z" fill="#050505" /><path d="M628.00 283.70h3.6v1.9l-0.7 0.7h-0.5v0.5h-1.2v-0.5h-0.5l-0.7 -0.7z" fill="#050505" /><path d="M632.20 283.70h3.6v1.9l-0.7 0.7h-0.5v0.5h-1.2v-0.5h-0.5l-0.7 -0.7z" fill="#050505" /><path d="M636.40 283.70h3.6v1.9l-0.7 0.7h-0.5v0.5h-1.2v-0.5h-0.5l-0.7 -0.7z" fill="#050505" /><path d="M640.60 283.70h3.6v1.9l-0.7 0.7h-0.5v0.5h-1.2v-0.5h-0.5l-0.7 -0.7z" fill="#050505" /><path d="M644.80 283.70h3.6v1.9l-0.7 0.7h-0.5v0.5h-1.2v-0.5h-0.5l-0.7 -0.7z" fill="#050505" /><rect x="653.30" y="269.60" width="26.20" height="1.30" fill="#858585" /><rect x="653.30" y="270.90" width="26.20" height="4.00" fill="#5a5a5a" /><path d="M654.30 271.10h3.6v1.9l-0.7 0.7h-0.5v0.5h-1.2v-0.5h-0.5l-0.7 -0.7z" fill="#050505" /><path d="M658.50 271.10h3.6v1.9l-0.7 0.7h-0.5v0.5h-1.2v-0.5h-0.5l-0.7 -0.7z" fill="#050505" /><path d="M662.70 271.10h3.6v1.9l-0.7 0.7h-0.5v0.5h-1.2v-0.5h-0.5l-0.7 -0.7z" fill="#050505" /><path d="M666.90 271.10h3.6v1.9l-0.7 0.7h-0.5v0.5h-1.2v-0.5h-0.5l-0.7 -0.7z" fill="#050505" /><path d="M671.10 271.10h3.6v1.9l-0.7 0.7h-0.5v0.5h-1.2v-0.5h-0.5l-0.7 -0.7z" fill="#050505" /><path d="M675.30 271.10h3.6v1.9l-0.7 0.7h-0.5v0.5h-1.2v-0.5h-0.5l-0.7 -0.7z" fill="#050505" /><rect x="653.30" y="282.20" width="26.20" height="1.30" fill="#858585" /><rect x="653.30" y="283.50" width="26.20" height="4.00" fill="#5a5a5a" /><path d="M654.30 283.70h3.6v1.9l-0.7 0.7h-0.5v0.5h-1.2v-0.5h-0.5l-0.7 -0.7z" fill="#050505" /><path d="M658.50 283.70h3.6v1.9l-0.7 0.7h-0.5v0.5h-1.2v-0.5h-0.5l-0.7 -0.7z" fill="#050505" /><path d="M662.70 283.70h3.6v1.9l-0.7 0.7h-0.5v0.5h-1.2v-0.5h-0.5l-0.7 -0.7z" fill="#050505" /><path d="M666.90 283.70h3.6v1.9l-0.7 0.7h-0.5v0.5h-1.2v-0.5h-0.5l-0.7 -0.7z" fill="#050505" /><path d="M671.10 283.70h3.6v1.9l-0.7 0.7h-0.5v0.5h-1.2v-0.5h-0.5l-0.7 -0.7z" fill="#050505" /><path d="M675.30 283.70h3.6v1.9l-0.7 0.7h-0.5v0.5h-1.2v-0.5h-0.5l-0.7 -0.7z" fill="#050505" /><rect x="683.90" y="269.60" width="26.20" height="1.30" fill="#858585" /><rect x="683.90" y="270.90" width="26.20" height="4.00" fill="#5a5a5a" /><path d="M684.90 271.10h3.6v1.9l-0.7 0.7h-0.5v0.5h-1.2v-0.5h-0.5l-0.7 -0.7z" fill="#050505" /><path d="M689.10 271.10h3.6v1.9l-0.7 0.7h-0.5v0.5h-1.2v-0.5h-0.5l-0.7 -0.7z" fill="#050505" /><path d="M693.30 271.10h3.6v1.9l-0.7 0.7h-0.5v0.5h-1.2v-0.5h-0.5l-0.7 -0.7z" fill="#050505" /><path d="M697.50 271.10h3.6v1.9l-0.7 0.7h-0.5v0.5h-1.2v-0.5h-0.5l-0.7 -0.7z" fill="#050505" /><path d="M701.70 271.10h3.6v1.9l-0.7 0.7h-0.5v0.5h-1.2v-0.5h-0.5l-0.7 -0.7z" fill="#050505" /><path d="M705.90 271.10h3.6v1.9l-0.7 0.7h-0.5v0.5h-1.2v-0.5h-0.5l-0.7 -0.7z" fill="#050505" /><rect x="683.90" y="282.20" width="26.20" height="1.30" fill="#858585" /><rect x="683.90" y="283.50" width="26.20" height="4.00" fill="#5a5a5a" /><path d="M684.90 283.70h3.6v1.9l-0.7 0.7h-0.5v0.5h-1.2v-0.5h-0.5l-0.7 -0.7z" fill="#050505" /><path d="M689.10 283.70h3.6v1.9l-0.7 0.7h-0.5v0.5h-1.2v-0.5h-0.5l-0.7 -0.7z" fill="#050505" /><path d="M693.30 283.70h3.6v1.9l-0.7 0.7h-0.5v0.5h-1.2v-0.5h-0.5l-0.7 -0.7z" fill="#050505" /><path d="M697.50 283.70h3.6v1.9l-0.7 0.7h-0.5v0.5h-1.2v-0.5h-0.5l-0.7 -0.7z" fill="#050505" /><path d="M701.70 283.70h3.6v1.9l-0.7 0.7h-0.5v0.5h-1.2v-0.5h-0.5l-0.7 -0.7z" fill="#050505" /><path d="M705.90 283.70h3.6v1.9l-0.7 0.7h-0.5v0.5h-1.2v-0.5h-0.5l-0.7 -0.7z" fill="#050505" /><rect x="714.40" y="269.60" width="26.20" height="1.30" fill="#858585" /><rect x="714.40" y="270.90" width="26.20" height="4.00" fill="#5a5a5a" /><path d="M715.40 271.10h3.6v1.9l-0.7 0.7h-0.5v0.5h-1.2v-0.5h-0.5l-0.7 -0.7z" fill="#050505" /><path d="M719.60 271.10h3.6v1.9l-0.7 0.7h-0.5v0.5h-1.2v-0.5h-0.5l-0.7 -0.7z" fill="#050505" /><path d="M723.80 271.10h3.6v1.9l-0.7 0.7h-0.5v0.5h-1.2v-0.5h-0.5l-0.7 -0.7z" fill="#050505" /><path d="M728.00 271.10h3.6v1.9l-0.7 0.7h-0.5v0.5h-1.2v-0.5h-0.5l-0.7 -0.7z" fill="#050505" /><path d="M732.20 271.10h3.6v1.9l-0.7 0.7h-0.5v0.5h-1.2v-0.5h-0.5l-0.7 -0.7z" fill="#050505" /><path d="M736.40 271.10h3.6v1.9l-0.7 0.7h-0.5v0.5h-1.2v-0.5h-0.5l-0.7 -0.7z" fill="#050505" /><rect x="714.40" y="282.20" width="26.20" height="1.30" fill="#858585" /><rect x="714.40" y="283.50" width="26.20" height="4.00" fill="#5a5a5a" /><path d="M715.40 283.70h3.6v1.9l-0.7 0.7h-0.5v0.5h-1.2v-0.5h-0.5l-0.7 -0.7z" fill="#050505" /><path d="M719.60 283.70h3.6v1.9l-0.7 0.7h-0.5v0.5h-1.2v-0.5h-0.5l-0.7 -0.7z" fill="#050505" /><path d="M723.80 283.70h3.6v1.9l-0.7 0.7h-0.5v0.5h-1.2v-0.5h-0.5l-0.7 -0.7z" fill="#050505" /><path d="M728.00 283.70h3.6v1.9l-0.7 0.7h-0.5v0.5h-1.2v-0.5h-0.5l-0.7 -0.7z" fill="#050505" /><path d="M732.20 283.70h3.6v1.9l-0.7 0.7h-0.5v0.5h-1.2v-0.5h-0.5l-0.7 -0.7z" fill="#050505" /><path d="M736.40 283.70h3.6v1.9l-0.7 0.7h-0.5v0.5h-1.2v-0.5h-0.5l-0.7 -0.7z" fill="#050505" /><rect x="616.20" y="290.00" width="131.40" height="24.80" fill="#4c4c4c" /><rect x="614.00" y="289.60" width="135.00" height="1.10" fill="#6f7680" /><rect x="617.00" y="290.80" width="2.80" height="1.60" fill="#a9a9a9" /><rect x="617.00" y="312.20" width="2.80" height="1.60" fill="#a9a9a9" /><rect x="744.50" y="290.80" width="2.80" height="1.60" fill="#a5a5a5" /><rect x="744.50" y="312.20" width="2.80" height="1.60" fill="#a5a5a5" /><rect x="623.00" y="291.00" width="14.00" height="1.60" fill="#7c7c7c" /><rect x="626.00" y="291.10" width="9.00" height="1.40" fill="#b4b4b4" /><rect x="690.00" y="291.00" width="25.00" height="1.60" fill="#74742e" /><rect x="715.00" y="290.80" width="22.00" height="2.20" fill="#6a6a34" /><rect x="715.30" y="290.90" width="1.10" height="2.00" fill="#b4b440" /><rect x="717.28" y="290.90" width="1.10" height="2.00" fill="#b4b440" /><rect x="719.26" y="290.90" width="1.10" height="2.00" fill="#b4b440" /><rect x="721.24" y="290.90" width="1.10" height="2.00" fill="#b4b440" /><rect x="723.22" y="290.90" width="1.10" height="2.00" fill="#b4b440" /><rect x="725.20" y="290.90" width="1.10" height="2.00" fill="#b4b440" /><rect x="727.18" y="290.90" width="1.10" height="2.00" fill="#b4b440" /><rect x="729.16" y="290.90" width="1.10" height="2.00" fill="#b4b440" /><rect x="731.14" y="290.90" width="1.10" height="2.00" fill="#b4b440" /><rect x="733.12" y="290.90" width="1.10" height="2.00" fill="#b4b440" /><rect x="735.10" y="290.90" width="1.10" height="2.00" fill="#b4b440" /><rect x="738.00" y="291.20" width="3.00" height="1.30" fill="#5e5e30" /><rect x="622.80" y="294.40" width="26.20" height="1.30" fill="#858585" /><rect x="622.80" y="295.70" width="26.20" height="4.00" fill="#5a5a5a" /><path d="M623.80 295.90h3.6v1.9l-0.7 0.7h-0.5v0.5h-1.2v-0.5h-0.5l-0.7 -0.7z" fill="#050505" /><path d="M628.00 295.90h3.6v1.9l-0.7 0.7h-0.5v0.5h-1.2v-0.5h-0.5l-0.7 -0.7z" fill="#050505" /><path d="M632.20 295.90h3.6v1.9l-0.7 0.7h-0.5v0.5h-1.2v-0.5h-0.5l-0.7 -0.7z" fill="#050505" /><path d="M636.40 295.90h3.6v1.9l-0.7 0.7h-0.5v0.5h-1.2v-0.5h-0.5l-0.7 -0.7z" fill="#050505" /><path d="M640.60 295.90h3.6v1.9l-0.7 0.7h-0.5v0.5h-1.2v-0.5h-0.5l-0.7 -0.7z" fill="#050505" /><path d="M644.80 295.90h3.6v1.9l-0.7 0.7h-0.5v0.5h-1.2v-0.5h-0.5l-0.7 -0.7z" fill="#050505" /><rect x="622.80" y="307.00" width="26.20" height="1.30" fill="#858585" /><rect x="622.80" y="308.30" width="26.20" height="4.00" fill="#5a5a5a" /><path d="M623.80 308.50h3.6v1.9l-0.7 0.7h-0.5v0.5h-1.2v-0.5h-0.5l-0.7 -0.7z" fill="#050505" /><path d="M628.00 308.50h3.6v1.9l-0.7 0.7h-0.5v0.5h-1.2v-0.5h-0.5l-0.7 -0.7z" fill="#050505" /><path d="M632.20 308.50h3.6v1.9l-0.7 0.7h-0.5v0.5h-1.2v-0.5h-0.5l-0.7 -0.7z" fill="#050505" /><path d="M636.40 308.50h3.6v1.9l-0.7 0.7h-0.5v0.5h-1.2v-0.5h-0.5l-0.7 -0.7z" fill="#050505" /><path d="M640.60 308.50h3.6v1.9l-0.7 0.7h-0.5v0.5h-1.2v-0.5h-0.5l-0.7 -0.7z" fill="#050505" /><path d="M644.80 308.50h3.6v1.9l-0.7 0.7h-0.5v0.5h-1.2v-0.5h-0.5l-0.7 -0.7z" fill="#050505" /><rect x="653.30" y="294.40" width="26.20" height="1.30" fill="#858585" /><rect x="653.30" y="295.70" width="26.20" height="4.00" fill="#5a5a5a" /><path d="M654.30 295.90h3.6v1.9l-0.7 0.7h-0.5v0.5h-1.2v-0.5h-0.5l-0.7 -0.7z" fill="#050505" /><path d="M658.50 295.90h3.6v1.9l-0.7 0.7h-0.5v0.5h-1.2v-0.5h-0.5l-0.7 -0.7z" fill="#050505" /><path d="M662.70 295.90h3.6v1.9l-0.7 0.7h-0.5v0.5h-1.2v-0.5h-0.5l-0.7 -0.7z" fill="#050505" /><path d="M666.90 295.90h3.6v1.9l-0.7 0.7h-0.5v0.5h-1.2v-0.5h-0.5l-0.7 -0.7z" fill="#050505" /><path d="M671.10 295.90h3.6v1.9l-0.7 0.7h-0.5v0.5h-1.2v-0.5h-0.5l-0.7 -0.7z" fill="#050505" /><path d="M675.30 295.90h3.6v1.9l-0.7 0.7h-0.5v0.5h-1.2v-0.5h-0.5l-0.7 -0.7z" fill="#050505" /><rect x="653.30" y="307.00" width="26.20" height="1.30" fill="#858585" /><rect x="653.30" y="308.30" width="26.20" height="4.00" fill="#5a5a5a" /><path d="M654.30 308.50h3.6v1.9l-0.7 0.7h-0.5v0.5h-1.2v-0.5h-0.5l-0.7 -0.7z" fill="#050505" /><path d="M658.50 308.50h3.6v1.9l-0.7 0.7h-0.5v0.5h-1.2v-0.5h-0.5l-0.7 -0.7z" fill="#050505" /><path d="M662.70 308.50h3.6v1.9l-0.7 0.7h-0.5v0.5h-1.2v-0.5h-0.5l-0.7 -0.7z" fill="#050505" /><path d="M666.90 308.50h3.6v1.9l-0.7 0.7h-0.5v0.5h-1.2v-0.5h-0.5l-0.7 -0.7z" fill="#050505" /><path d="M671.10 308.50h3.6v1.9l-0.7 0.7h-0.5v0.5h-1.2v-0.5h-0.5l-0.7 -0.7z" fill="#050505" /><path d="M675.30 308.50h3.6v1.9l-0.7 0.7h-0.5v0.5h-1.2v-0.5h-0.5l-0.7 -0.7z" fill="#050505" /><rect x="683.90" y="294.40" width="26.20" height="1.30" fill="#858585" /><rect x="683.90" y="295.70" width="26.20" height="4.00" fill="#5a5a5a" /><path d="M684.90 295.90h3.6v1.9l-0.7 0.7h-0.5v0.5h-1.2v-0.5h-0.5l-0.7 -0.7z" fill="#050505" /><path d="M689.10 295.90h3.6v1.9l-0.7 0.7h-0.5v0.5h-1.2v-0.5h-0.5l-0.7 -0.7z" fill="#050505" /><path d="M693.30 295.90h3.6v1.9l-0.7 0.7h-0.5v0.5h-1.2v-0.5h-0.5l-0.7 -0.7z" fill="#050505" /><path d="M697.50 295.90h3.6v1.9l-0.7 0.7h-0.5v0.5h-1.2v-0.5h-0.5l-0.7 -0.7z" fill="#050505" /><path d="M701.70 295.90h3.6v1.9l-0.7 0.7h-0.5v0.5h-1.2v-0.5h-0.5l-0.7 -0.7z" fill="#050505" /><path d="M705.90 295.90h3.6v1.9l-0.7 0.7h-0.5v0.5h-1.2v-0.5h-0.5l-0.7 -0.7z" fill="#050505" /><rect x="683.90" y="307.00" width="26.20" height="1.30" fill="#858585" /><rect x="683.90" y="308.30" width="26.20" height="4.00" fill="#5a5a5a" /><path d="M684.90 308.50h3.6v1.9l-0.7 0.7h-0.5v0.5h-1.2v-0.5h-0.5l-0.7 -0.7z" fill="#050505" /><path d="M689.10 308.50h3.6v1.9l-0.7 0.7h-0.5v0.5h-1.2v-0.5h-0.5l-0.7 -0.7z" fill="#050505" /><path d="M693.30 308.50h3.6v1.9l-0.7 0.7h-0.5v0.5h-1.2v-0.5h-0.5l-0.7 -0.7z" fill="#050505" /><path d="M697.50 308.50h3.6v1.9l-0.7 0.7h-0.5v0.5h-1.2v-0.5h-0.5l-0.7 -0.7z" fill="#050505" /><path d="M701.70 308.50h3.6v1.9l-0.7 0.7h-0.5v0.5h-1.2v-0.5h-0.5l-0.7 -0.7z" fill="#050505" /><path d="M705.90 308.50h3.6v1.9l-0.7 0.7h-0.5v0.5h-1.2v-0.5h-0.5l-0.7 -0.7z" fill="#050505" /><rect x="714.40" y="294.40" width="26.20" height="1.30" fill="#858585" /><rect x="714.40" y="295.70" width="26.20" height="4.00" fill="#5a5a5a" /><path d="M715.40 295.90h3.6v1.9l-0.7 0.7h-0.5v0.5h-1.2v-0.5h-0.5l-0.7 -0.7z" fill="#050505" /><path d="M719.60 295.90h3.6v1.9l-0.7 0.7h-0.5v0.5h-1.2v-0.5h-0.5l-0.7 -0.7z" fill="#050505" /><path d="M723.80 295.90h3.6v1.9l-0.7 0.7h-0.5v0.5h-1.2v-0.5h-0.5l-0.7 -0.7z" fill="#050505" /><path d="M728.00 295.90h3.6v1.9l-0.7 0.7h-0.5v0.5h-1.2v-0.5h-0.5l-0.7 -0.7z" fill="#050505" /><path d="M732.20 295.90h3.6v1.9l-0.7 0.7h-0.5v0.5h-1.2v-0.5h-0.5l-0.7 -0.7z" fill="#050505" /><path d="M736.40 295.90h3.6v1.9l-0.7 0.7h-0.5v0.5h-1.2v-0.5h-0.5l-0.7 -0.7z" fill="#050505" /><rect x="714.40" y="307.00" width="26.20" height="1.30" fill="#858585" /><rect x="714.40" y="308.30" width="26.20" height="4.00" fill="#5a5a5a" /><path d="M715.40 308.50h3.6v1.9l-0.7 0.7h-0.5v0.5h-1.2v-0.5h-0.5l-0.7 -0.7z" fill="#050505" /><path d="M719.60 308.50h3.6v1.9l-0.7 0.7h-0.5v0.5h-1.2v-0.5h-0.5l-0.7 -0.7z" fill="#050505" /><path d="M723.80 308.50h3.6v1.9l-0.7 0.7h-0.5v0.5h-1.2v-0.5h-0.5l-0.7 -0.7z" fill="#050505" /><path d="M728.00 308.50h3.6v1.9l-0.7 0.7h-0.5v0.5h-1.2v-0.5h-0.5l-0.7 -0.7z" fill="#050505" /><path d="M732.20 308.50h3.6v1.9l-0.7 0.7h-0.5v0.5h-1.2v-0.5h-0.5l-0.7 -0.7z" fill="#050505" /><path d="M736.40 308.50h3.6v1.9l-0.7 0.7h-0.5v0.5h-1.2v-0.5h-0.5l-0.7 -0.7z" fill="#050505" /><rect x="616.20" y="314.80" width="133.00" height="12.40" fill="#cdcdcd" /><rect x="616.20" y="314.80" width="5.60" height="12.40" fill="#dadada" /><rect x="742.00" y="314.80" width="7.20" height="12.40" fill="#d8d8d8" /><rect x="617.50" y="316.80" width="2.50" height="2.00" fill="#f2f2f2" /><rect x="617.50" y="322.30" width="2.50" height="2.00" fill="#f2f2f2" /><rect x="744.00" y="316.80" width="2.50" height="2.00" fill="#eeeeee" /><rect x="744.00" y="322.30" width="2.50" height="2.00" fill="#eeeeee" /><rect x="623.20" y="315.80" width="23.40" height="10.20" fill="#d4d4d4" /><rect x="623.70" y="317.60" width="3.40" height="2.60" fill="#262626" rx="0.6"/><rect x="624.30" y="319.30" width="2.20" height="0.80" fill="#8a7a5a" /><rect x="627.55" y="317.60" width="3.40" height="2.60" fill="#262626" rx="0.6"/><rect x="628.15" y="319.30" width="2.20" height="0.80" fill="#8a7a5a" /><rect x="631.40" y="317.60" width="3.40" height="2.60" fill="#262626" rx="0.6"/><rect x="632.00" y="319.30" width="2.20" height="0.80" fill="#8a7a5a" /><rect x="635.25" y="317.60" width="3.40" height="2.60" fill="#262626" rx="0.6"/><rect x="635.85" y="319.30" width="2.20" height="0.80" fill="#8a7a5a" /><rect x="639.10" y="317.60" width="3.40" height="2.60" fill="#262626" rx="0.6"/><rect x="639.70" y="319.30" width="2.20" height="0.80" fill="#8a7a5a" /><rect x="642.95" y="317.60" width="3.40" height="2.60" fill="#262626" rx="0.6"/><rect x="643.55" y="319.30" width="2.20" height="0.80" fill="#8a7a5a" /><rect x="623.70" y="321.70" width="3.40" height="2.60" fill="#262626" rx="0.6"/><rect x="624.30" y="323.40" width="2.20" height="0.80" fill="#8a7a5a" /><rect x="627.55" y="321.70" width="3.40" height="2.60" fill="#262626" rx="0.6"/><rect x="628.15" y="323.40" width="2.20" height="0.80" fill="#8a7a5a" /><rect x="631.40" y="321.70" width="3.40" height="2.60" fill="#262626" rx="0.6"/><rect x="632.00" y="323.40" width="2.20" height="0.80" fill="#8a7a5a" /><rect x="635.25" y="321.70" width="3.40" height="2.60" fill="#262626" rx="0.6"/><rect x="635.85" y="323.40" width="2.20" height="0.80" fill="#8a7a5a" /><rect x="639.10" y="321.70" width="3.40" height="2.60" fill="#262626" rx="0.6"/><rect x="639.70" y="323.40" width="2.20" height="0.80" fill="#8a7a5a" /><rect x="642.95" y="321.70" width="3.40" height="2.60" fill="#262626" rx="0.6"/><rect x="643.55" y="323.40" width="2.20" height="0.80" fill="#8a7a5a" /><rect x="623.70" y="320.40" width="22.50" height="1.10" fill="#efefef" /><rect x="647.80" y="315.80" width="23.40" height="10.20" fill="#d4d4d4" /><rect x="648.30" y="317.60" width="3.40" height="2.60" fill="#262626" rx="0.6"/><rect x="648.90" y="319.30" width="2.20" height="0.80" fill="#8a7a5a" /><rect x="652.15" y="317.60" width="3.40" height="2.60" fill="#262626" rx="0.6"/><rect x="652.75" y="319.30" width="2.20" height="0.80" fill="#8a7a5a" /><rect x="656.00" y="317.60" width="3.40" height="2.60" fill="#262626" rx="0.6"/><rect x="656.60" y="319.30" width="2.20" height="0.80" fill="#8a7a5a" /><rect x="659.85" y="317.60" width="3.40" height="2.60" fill="#262626" rx="0.6"/><rect x="660.45" y="319.30" width="2.20" height="0.80" fill="#8a7a5a" /><rect x="663.70" y="317.60" width="3.40" height="2.60" fill="#262626" rx="0.6"/><rect x="664.30" y="319.30" width="2.20" height="0.80" fill="#8a7a5a" /><rect x="667.55" y="317.60" width="3.40" height="2.60" fill="#262626" rx="0.6"/><rect x="668.15" y="319.30" width="2.20" height="0.80" fill="#8a7a5a" /><rect x="648.30" y="321.70" width="3.40" height="2.60" fill="#262626" rx="0.6"/><rect x="648.90" y="323.40" width="2.20" height="0.80" fill="#8a7a5a" /><rect x="652.15" y="321.70" width="3.40" height="2.60" fill="#262626" rx="0.6"/><rect x="652.75" y="323.40" width="2.20" height="0.80" fill="#8a7a5a" /><rect x="656.00" y="321.70" width="3.40" height="2.60" fill="#262626" rx="0.6"/><rect x="656.60" y="323.40" width="2.20" height="0.80" fill="#8a7a5a" /><rect x="659.85" y="321.70" width="3.40" height="2.60" fill="#262626" rx="0.6"/><rect x="660.45" y="323.40" width="2.20" height="0.80" fill="#8a7a5a" /><rect x="663.70" y="321.70" width="3.40" height="2.60" fill="#262626" rx="0.6"/><rect x="664.30" y="323.40" width="2.20" height="0.80" fill="#8a7a5a" /><rect x="667.55" y="321.70" width="3.40" height="2.60" fill="#262626" rx="0.6"/><rect x="668.15" y="323.40" width="2.20" height="0.80" fill="#8a7a5a" /><rect x="648.30" y="320.40" width="22.50" height="1.10" fill="#efefef" /><rect x="672.20" y="315.80" width="23.40" height="10.20" fill="#d4d4d4" /><rect x="672.70" y="317.60" width="3.40" height="2.60" fill="#262626" rx="0.6"/><rect x="673.30" y="319.30" width="2.20" height="0.80" fill="#8a7a5a" /><rect x="676.55" y="317.60" width="3.40" height="2.60" fill="#262626" rx="0.6"/><rect x="677.15" y="319.30" width="2.20" height="0.80" fill="#8a7a5a" /><rect x="680.40" y="317.60" width="3.40" height="2.60" fill="#262626" rx="0.6"/><rect x="681.00" y="319.30" width="2.20" height="0.80" fill="#8a7a5a" /><rect x="684.25" y="317.60" width="3.40" height="2.60" fill="#262626" rx="0.6"/><rect x="684.85" y="319.30" width="2.20" height="0.80" fill="#8a7a5a" /><rect x="688.10" y="317.60" width="3.40" height="2.60" fill="#262626" rx="0.6"/><rect x="688.70" y="319.30" width="2.20" height="0.80" fill="#8a7a5a" /><rect x="691.95" y="317.60" width="3.40" height="2.60" fill="#262626" rx="0.6"/><rect x="692.55" y="319.30" width="2.20" height="0.80" fill="#8a7a5a" /><rect x="672.70" y="321.70" width="3.40" height="2.60" fill="#262626" rx="0.6"/><rect x="673.30" y="323.40" width="2.20" height="0.80" fill="#8a7a5a" /><rect x="676.55" y="321.70" width="3.40" height="2.60" fill="#262626" rx="0.6"/><rect x="677.15" y="323.40" width="2.20" height="0.80" fill="#8a7a5a" /><rect x="680.40" y="321.70" width="3.40" height="2.60" fill="#262626" rx="0.6"/><rect x="681.00" y="323.40" width="2.20" height="0.80" fill="#8a7a5a" /><rect x="684.25" y="321.70" width="3.40" height="2.60" fill="#262626" rx="0.6"/><rect x="684.85" y="323.40" width="2.20" height="0.80" fill="#8a7a5a" /><rect x="688.10" y="321.70" width="3.40" height="2.60" fill="#262626" rx="0.6"/><rect x="688.70" y="323.40" width="2.20" height="0.80" fill="#8a7a5a" /><rect x="691.95" y="321.70" width="3.40" height="2.60" fill="#262626" rx="0.6"/><rect x="692.55" y="323.40" width="2.20" height="0.80" fill="#8a7a5a" /><rect x="672.70" y="320.40" width="22.50" height="1.10" fill="#efefef" /><rect x="697.00" y="315.80" width="23.40" height="10.20" fill="#d4d4d4" /><rect x="697.50" y="317.60" width="3.40" height="2.60" fill="#262626" rx="0.6"/><rect x="698.10" y="319.30" width="2.20" height="0.80" fill="#8a7a5a" /><rect x="701.35" y="317.60" width="3.40" height="2.60" fill="#262626" rx="0.6"/><rect x="701.95" y="319.30" width="2.20" height="0.80" fill="#8a7a5a" /><rect x="705.20" y="317.60" width="3.40" height="2.60" fill="#262626" rx="0.6"/><rect x="705.80" y="319.30" width="2.20" height="0.80" fill="#8a7a5a" /><rect x="709.05" y="317.60" width="3.40" height="2.60" fill="#262626" rx="0.6"/><rect x="709.65" y="319.30" width="2.20" height="0.80" fill="#8a7a5a" /><rect x="712.90" y="317.60" width="3.40" height="2.60" fill="#262626" rx="0.6"/><rect x="713.50" y="319.30" width="2.20" height="0.80" fill="#8a7a5a" /><rect x="716.75" y="317.60" width="3.40" height="2.60" fill="#262626" rx="0.6"/><rect x="717.35" y="319.30" width="2.20" height="0.80" fill="#8a7a5a" /><rect x="697.50" y="321.70" width="3.40" height="2.60" fill="#262626" rx="0.6"/><rect x="698.10" y="323.40" width="2.20" height="0.80" fill="#8a7a5a" /><rect x="701.35" y="321.70" width="3.40" height="2.60" fill="#262626" rx="0.6"/><rect x="701.95" y="323.40" width="2.20" height="0.80" fill="#8a7a5a" /><rect x="705.20" y="321.70" width="3.40" height="2.60" fill="#262626" rx="0.6"/><rect x="705.80" y="323.40" width="2.20" height="0.80" fill="#8a7a5a" /><rect x="709.05" y="321.70" width="3.40" height="2.60" fill="#262626" rx="0.6"/><rect x="709.65" y="323.40" width="2.20" height="0.80" fill="#8a7a5a" /><rect x="712.90" y="321.70" width="3.40" height="2.60" fill="#262626" rx="0.6"/><rect x="713.50" y="323.40" width="2.20" height="0.80" fill="#8a7a5a" /><rect x="716.75" y="321.70" width="3.40" height="2.60" fill="#262626" rx="0.6"/><rect x="717.35" y="323.40" width="2.20" height="0.80" fill="#8a7a5a" /><rect x="697.50" y="320.40" width="22.50" height="1.10" fill="#efefef" /><rect x="623.50" y="315.80" width="3.00" height="1.30" fill="#555" /><rect x="649.00" y="315.80" width="21.00" height="1.10" fill="#4a4a4a" /><rect x="673.00" y="315.80" width="46.00" height="1.10" fill="#4a4a4a" /><rect x="720.20" y="315.80" width="0.90" height="10.40" fill="#8a8a8a" /><rect x="721.50" y="316.30" width="16.50" height="9.50" fill="#c6c6c6" /><rect x="722.30" y="317.90" width="15.00" height="2.20" fill="#555" /><rect x="722.30" y="321.80" width="15.00" height="2.20" fill="#535353" /><rect x="739.00" y="316.80" width="1.50" height="1.50" fill="#444" /><rect x="616.20" y="326.50" width="133.00" height="0.80" fill="#aebbc9" /><rect x="616.20" y="327.20" width="133.00" height="12.40" fill="#cdcdcd" /><rect x="616.20" y="327.20" width="5.60" height="12.40" fill="#dadada" /><rect x="742.00" y="327.20" width="7.20" height="12.40" fill="#d8d8d8" /><rect x="617.50" y="329.20" width="2.50" height="2.00" fill="#f2f2f2" /><rect x="617.50" y="334.70" width="2.50" height="2.00" fill="#f2f2f2" /><rect x="744.00" y="329.20" width="2.50" height="2.00" fill="#eeeeee" /><rect x="744.00" y="334.70" width="2.50" height="2.00" fill="#eeeeee" /><rect x="623.20" y="328.20" width="23.40" height="10.20" fill="#d4d4d4" /><rect x="623.70" y="330.00" width="3.40" height="2.60" fill="#262626" rx="0.6"/><rect x="624.30" y="331.70" width="2.20" height="0.80" fill="#8a7a5a" /><rect x="627.55" y="330.00" width="3.40" height="2.60" fill="#262626" rx="0.6"/><rect x="628.15" y="331.70" width="2.20" height="0.80" fill="#8a7a5a" /><rect x="631.40" y="330.00" width="3.40" height="2.60" fill="#262626" rx="0.6"/><rect x="632.00" y="331.70" width="2.20" height="0.80" fill="#8a7a5a" /><rect x="635.25" y="330.00" width="3.40" height="2.60" fill="#262626" rx="0.6"/><rect x="635.85" y="331.70" width="2.20" height="0.80" fill="#8a7a5a" /><rect x="639.10" y="330.00" width="3.40" height="2.60" fill="#262626" rx="0.6"/><rect x="639.70" y="331.70" width="2.20" height="0.80" fill="#8a7a5a" /><rect x="642.95" y="330.00" width="3.40" height="2.60" fill="#262626" rx="0.6"/><rect x="643.55" y="331.70" width="2.20" height="0.80" fill="#8a7a5a" /><rect x="623.70" y="334.10" width="3.40" height="2.60" fill="#262626" rx="0.6"/><rect x="624.30" y="335.80" width="2.20" height="0.80" fill="#8a7a5a" /><rect x="627.55" y="334.10" width="3.40" height="2.60" fill="#262626" rx="0.6"/><rect x="628.15" y="335.80" width="2.20" height="0.80" fill="#8a7a5a" /><rect x="631.40" y="334.10" width="3.40" height="2.60" fill="#262626" rx="0.6"/><rect x="632.00" y="335.80" width="2.20" height="0.80" fill="#8a7a5a" /><rect x="635.25" y="334.10" width="3.40" height="2.60" fill="#262626" rx="0.6"/><rect x="635.85" y="335.80" width="2.20" height="0.80" fill="#8a7a5a" /><rect x="639.10" y="334.10" width="3.40" height="2.60" fill="#262626" rx="0.6"/><rect x="639.70" y="335.80" width="2.20" height="0.80" fill="#8a7a5a" /><rect x="642.95" y="334.10" width="3.40" height="2.60" fill="#262626" rx="0.6"/><rect x="643.55" y="335.80" width="2.20" height="0.80" fill="#8a7a5a" /><rect x="623.70" y="332.80" width="22.50" height="1.10" fill="#efefef" /><rect x="647.80" y="328.20" width="23.40" height="10.20" fill="#d4d4d4" /><rect x="648.30" y="330.00" width="3.40" height="2.60" fill="#262626" rx="0.6"/><rect x="648.90" y="331.70" width="2.20" height="0.80" fill="#8a7a5a" /><rect x="652.15" y="330.00" width="3.40" height="2.60" fill="#262626" rx="0.6"/><rect x="652.75" y="331.70" width="2.20" height="0.80" fill="#8a7a5a" /><rect x="656.00" y="330.00" width="3.40" height="2.60" fill="#262626" rx="0.6"/><rect x="656.60" y="331.70" width="2.20" height="0.80" fill="#8a7a5a" /><rect x="659.85" y="330.00" width="3.40" height="2.60" fill="#262626" rx="0.6"/><rect x="660.45" y="331.70" width="2.20" height="0.80" fill="#8a7a5a" /><rect x="663.70" y="330.00" width="3.40" height="2.60" fill="#262626" rx="0.6"/><rect x="664.30" y="331.70" width="2.20" height="0.80" fill="#8a7a5a" /><rect x="667.55" y="330.00" width="3.40" height="2.60" fill="#262626" rx="0.6"/><rect x="668.15" y="331.70" width="2.20" height="0.80" fill="#8a7a5a" /><rect x="648.30" y="334.10" width="3.40" height="2.60" fill="#262626" rx="0.6"/><rect x="648.90" y="335.80" width="2.20" height="0.80" fill="#8a7a5a" /><rect x="652.15" y="334.10" width="3.40" height="2.60" fill="#262626" rx="0.6"/><rect x="652.75" y="335.80" width="2.20" height="0.80" fill="#8a7a5a" /><rect x="656.00" y="334.10" width="3.40" height="2.60" fill="#262626" rx="0.6"/><rect x="656.60" y="335.80" width="2.20" height="0.80" fill="#8a7a5a" /><rect x="659.85" y="334.10" width="3.40" height="2.60" fill="#262626" rx="0.6"/><rect x="660.45" y="335.80" width="2.20" height="0.80" fill="#8a7a5a" /><rect x="663.70" y="334.10" width="3.40" height="2.60" fill="#262626" rx="0.6"/><rect x="664.30" y="335.80" width="2.20" height="0.80" fill="#8a7a5a" /><rect x="667.55" y="334.10" width="3.40" height="2.60" fill="#262626" rx="0.6"/><rect x="668.15" y="335.80" width="2.20" height="0.80" fill="#8a7a5a" /><rect x="648.30" y="332.80" width="22.50" height="1.10" fill="#efefef" /><rect x="672.20" y="328.20" width="23.40" height="10.20" fill="#d4d4d4" /><rect x="672.70" y="330.00" width="3.40" height="2.60" fill="#262626" rx="0.6"/><rect x="673.30" y="331.70" width="2.20" height="0.80" fill="#8a7a5a" /><rect x="676.55" y="330.00" width="3.40" height="2.60" fill="#262626" rx="0.6"/><rect x="677.15" y="331.70" width="2.20" height="0.80" fill="#8a7a5a" /><rect x="680.40" y="330.00" width="3.40" height="2.60" fill="#262626" rx="0.6"/><rect x="681.00" y="331.70" width="2.20" height="0.80" fill="#8a7a5a" /><rect x="684.25" y="330.00" width="3.40" height="2.60" fill="#262626" rx="0.6"/><rect x="684.85" y="331.70" width="2.20" height="0.80" fill="#8a7a5a" /><rect x="688.10" y="330.00" width="3.40" height="2.60" fill="#262626" rx="0.6"/><rect x="688.70" y="331.70" width="2.20" height="0.80" fill="#8a7a5a" /><rect x="691.95" y="330.00" width="3.40" height="2.60" fill="#262626" rx="0.6"/><rect x="692.55" y="331.70" width="2.20" height="0.80" fill="#8a7a5a" /><rect x="672.70" y="334.10" width="3.40" height="2.60" fill="#262626" rx="0.6"/><rect x="673.30" y="335.80" width="2.20" height="0.80" fill="#8a7a5a" /><rect x="676.55" y="334.10" width="3.40" height="2.60" fill="#262626" rx="0.6"/><rect x="677.15" y="335.80" width="2.20" height="0.80" fill="#8a7a5a" /><rect x="680.40" y="334.10" width="3.40" height="2.60" fill="#262626" rx="0.6"/><rect x="681.00" y="335.80" width="2.20" height="0.80" fill="#8a7a5a" /><rect x="684.25" y="334.10" width="3.40" height="2.60" fill="#262626" rx="0.6"/><rect x="684.85" y="335.80" width="2.20" height="0.80" fill="#8a7a5a" /><rect x="688.10" y="334.10" width="3.40" height="2.60" fill="#262626" rx="0.6"/><rect x="688.70" y="335.80" width="2.20" height="0.80" fill="#8a7a5a" /><rect x="691.95" y="334.10" width="3.40" height="2.60" fill="#262626" rx="0.6"/><rect x="692.55" y="335.80" width="2.20" height="0.80" fill="#8a7a5a" /><rect x="672.70" y="332.80" width="22.50" height="1.10" fill="#efefef" /><rect x="697.00" y="328.20" width="23.40" height="10.20" fill="#d4d4d4" /><rect x="697.50" y="330.00" width="3.40" height="2.60" fill="#262626" rx="0.6"/><rect x="698.10" y="331.70" width="2.20" height="0.80" fill="#8a7a5a" /><rect x="701.35" y="330.00" width="3.40" height="2.60" fill="#262626" rx="0.6"/><rect x="701.95" y="331.70" width="2.20" height="0.80" fill="#8a7a5a" /><rect x="705.20" y="330.00" width="3.40" height="2.60" fill="#262626" rx="0.6"/><rect x="705.80" y="331.70" width="2.20" height="0.80" fill="#8a7a5a" /><rect x="709.05" y="330.00" width="3.40" height="2.60" fill="#262626" rx="0.6"/><rect x="709.65" y="331.70" width="2.20" height="0.80" fill="#8a7a5a" /><rect x="712.90" y="330.00" width="3.40" height="2.60" fill="#262626" rx="0.6"/><rect x="713.50" y="331.70" width="2.20" height="0.80" fill="#8a7a5a" /><rect x="716.75" y="330.00" width="3.40" height="2.60" fill="#262626" rx="0.6"/><rect x="717.35" y="331.70" width="2.20" height="0.80" fill="#8a7a5a" /><rect x="697.50" y="334.10" width="3.40" height="2.60" fill="#262626" rx="0.6"/><rect x="698.10" y="335.80" width="2.20" height="0.80" fill="#8a7a5a" /><rect x="701.35" y="334.10" width="3.40" height="2.60" fill="#262626" rx="0.6"/><rect x="701.95" y="335.80" width="2.20" height="0.80" fill="#8a7a5a" /><rect x="705.20" y="334.10" width="3.40" height="2.60" fill="#262626" rx="0.6"/><rect x="705.80" y="335.80" width="2.20" height="0.80" fill="#8a7a5a" /><rect x="709.05" y="334.10" width="3.40" height="2.60" fill="#262626" rx="0.6"/><rect x="709.65" y="335.80" width="2.20" height="0.80" fill="#8a7a5a" /><rect x="712.90" y="334.10" width="3.40" height="2.60" fill="#262626" rx="0.6"/><rect x="713.50" y="335.80" width="2.20" height="0.80" fill="#8a7a5a" /><rect x="716.75" y="334.10" width="3.40" height="2.60" fill="#262626" rx="0.6"/><rect x="717.35" y="335.80" width="2.20" height="0.80" fill="#8a7a5a" /><rect x="697.50" y="332.80" width="22.50" height="1.10" fill="#efefef" /><rect x="623.50" y="328.20" width="3.00" height="1.30" fill="#555" /><rect x="649.00" y="328.20" width="21.00" height="1.10" fill="#4a4a4a" /><rect x="673.00" y="328.20" width="46.00" height="1.10" fill="#4a4a4a" /><rect x="720.20" y="328.20" width="0.90" height="10.40" fill="#8a8a8a" /><rect x="721.50" y="328.70" width="16.50" height="9.50" fill="#c6c6c6" /><rect x="722.30" y="330.30" width="15.00" height="2.20" fill="#555" /><rect x="722.30" y="334.20" width="15.00" height="2.20" fill="#535353" /><rect x="739.00" y="329.20" width="1.50" height="1.50" fill="#444" /><rect x="616.20" y="338.90" width="133.00" height="0.80" fill="#aebbc9" /><rect x="616.20" y="339.60" width="133.00" height="12.40" fill="#cdcdcd" /><rect x="616.20" y="339.60" width="5.60" height="12.40" fill="#dadada" /><rect x="742.00" y="339.60" width="7.20" height="12.40" fill="#d8d8d8" /><rect x="617.50" y="341.60" width="2.50" height="2.00" fill="#f2f2f2" /><rect x="617.50" y="347.10" width="2.50" height="2.00" fill="#f2f2f2" /><rect x="744.00" y="341.60" width="2.50" height="2.00" fill="#eeeeee" /><rect x="744.00" y="347.10" width="2.50" height="2.00" fill="#eeeeee" /><rect x="623.20" y="340.60" width="23.40" height="10.20" fill="#d4d4d4" /><rect x="623.70" y="342.40" width="3.40" height="2.60" fill="#262626" rx="0.6"/><rect x="624.30" y="344.10" width="2.20" height="0.80" fill="#8a7a5a" /><rect x="627.55" y="342.40" width="3.40" height="2.60" fill="#262626" rx="0.6"/><rect x="628.15" y="344.10" width="2.20" height="0.80" fill="#8a7a5a" /><rect x="631.40" y="342.40" width="3.40" height="2.60" fill="#262626" rx="0.6"/><rect x="632.00" y="344.10" width="2.20" height="0.80" fill="#8a7a5a" /><rect x="635.25" y="342.40" width="3.40" height="2.60" fill="#262626" rx="0.6"/><rect x="635.85" y="344.10" width="2.20" height="0.80" fill="#8a7a5a" /><rect x="639.10" y="342.40" width="3.40" height="2.60" fill="#262626" rx="0.6"/><rect x="639.70" y="344.10" width="2.20" height="0.80" fill="#8a7a5a" /><rect x="642.95" y="342.40" width="3.40" height="2.60" fill="#262626" rx="0.6"/><rect x="643.55" y="344.10" width="2.20" height="0.80" fill="#8a7a5a" /><rect x="623.70" y="346.50" width="3.40" height="2.60" fill="#262626" rx="0.6"/><rect x="624.30" y="348.20" width="2.20" height="0.80" fill="#8a7a5a" /><rect x="627.55" y="346.50" width="3.40" height="2.60" fill="#262626" rx="0.6"/><rect x="628.15" y="348.20" width="2.20" height="0.80" fill="#8a7a5a" /><rect x="631.40" y="346.50" width="3.40" height="2.60" fill="#262626" rx="0.6"/><rect x="632.00" y="348.20" width="2.20" height="0.80" fill="#8a7a5a" /><rect x="635.25" y="346.50" width="3.40" height="2.60" fill="#262626" rx="0.6"/><rect x="635.85" y="348.20" width="2.20" height="0.80" fill="#8a7a5a" /><rect x="639.10" y="346.50" width="3.40" height="2.60" fill="#262626" rx="0.6"/><rect x="639.70" y="348.20" width="2.20" height="0.80" fill="#8a7a5a" /><rect x="642.95" y="346.50" width="3.40" height="2.60" fill="#262626" rx="0.6"/><rect x="643.55" y="348.20" width="2.20" height="0.80" fill="#8a7a5a" /><rect x="623.70" y="345.20" width="22.50" height="1.10" fill="#efefef" /><rect x="647.80" y="340.60" width="23.40" height="10.20" fill="#d4d4d4" /><rect x="648.30" y="342.40" width="3.40" height="2.60" fill="#262626" rx="0.6"/><rect x="648.90" y="344.10" width="2.20" height="0.80" fill="#8a7a5a" /><rect x="652.15" y="342.40" width="3.40" height="2.60" fill="#262626" rx="0.6"/><rect x="652.75" y="344.10" width="2.20" height="0.80" fill="#8a7a5a" /><rect x="656.00" y="342.40" width="3.40" height="2.60" fill="#262626" rx="0.6"/><rect x="656.60" y="344.10" width="2.20" height="0.80" fill="#8a7a5a" /><rect x="659.85" y="342.40" width="3.40" height="2.60" fill="#262626" rx="0.6"/><rect x="660.45" y="344.10" width="2.20" height="0.80" fill="#8a7a5a" /><rect x="663.70" y="342.40" width="3.40" height="2.60" fill="#262626" rx="0.6"/><rect x="664.30" y="344.10" width="2.20" height="0.80" fill="#8a7a5a" /><rect x="667.55" y="342.40" width="3.40" height="2.60" fill="#262626" rx="0.6"/><rect x="668.15" y="344.10" width="2.20" height="0.80" fill="#8a7a5a" /><rect x="648.30" y="346.50" width="3.40" height="2.60" fill="#262626" rx="0.6"/><rect x="648.90" y="348.20" width="2.20" height="0.80" fill="#8a7a5a" /><rect x="652.15" y="346.50" width="3.40" height="2.60" fill="#262626" rx="0.6"/><rect x="652.75" y="348.20" width="2.20" height="0.80" fill="#8a7a5a" /><rect x="656.00" y="346.50" width="3.40" height="2.60" fill="#262626" rx="0.6"/><rect x="656.60" y="348.20" width="2.20" height="0.80" fill="#8a7a5a" /><rect x="659.85" y="346.50" width="3.40" height="2.60" fill="#262626" rx="0.6"/><rect x="660.45" y="348.20" width="2.20" height="0.80" fill="#8a7a5a" /><rect x="663.70" y="346.50" width="3.40" height="2.60" fill="#262626" rx="0.6"/><rect x="664.30" y="348.20" width="2.20" height="0.80" fill="#8a7a5a" /><rect x="667.55" y="346.50" width="3.40" height="2.60" fill="#262626" rx="0.6"/><rect x="668.15" y="348.20" width="2.20" height="0.80" fill="#8a7a5a" /><rect x="648.30" y="345.20" width="22.50" height="1.10" fill="#efefef" /><rect x="672.20" y="340.60" width="23.40" height="10.20" fill="#d4d4d4" /><rect x="672.70" y="342.40" width="3.40" height="2.60" fill="#262626" rx="0.6"/><rect x="673.30" y="344.10" width="2.20" height="0.80" fill="#8a7a5a" /><rect x="676.55" y="342.40" width="3.40" height="2.60" fill="#262626" rx="0.6"/><rect x="677.15" y="344.10" width="2.20" height="0.80" fill="#8a7a5a" /><rect x="680.40" y="342.40" width="3.40" height="2.60" fill="#262626" rx="0.6"/><rect x="681.00" y="344.10" width="2.20" height="0.80" fill="#8a7a5a" /><rect x="684.25" y="342.40" width="3.40" height="2.60" fill="#262626" rx="0.6"/><rect x="684.85" y="344.10" width="2.20" height="0.80" fill="#8a7a5a" /><rect x="688.10" y="342.40" width="3.40" height="2.60" fill="#262626" rx="0.6"/><rect x="688.70" y="344.10" width="2.20" height="0.80" fill="#8a7a5a" /><rect x="691.95" y="342.40" width="3.40" height="2.60" fill="#262626" rx="0.6"/><rect x="692.55" y="344.10" width="2.20" height="0.80" fill="#8a7a5a" /><rect x="672.70" y="346.50" width="3.40" height="2.60" fill="#262626" rx="0.6"/><rect x="673.30" y="348.20" width="2.20" height="0.80" fill="#8a7a5a" /><rect x="676.55" y="346.50" width="3.40" height="2.60" fill="#262626" rx="0.6"/><rect x="677.15" y="348.20" width="2.20" height="0.80" fill="#8a7a5a" /><rect x="680.40" y="346.50" width="3.40" height="2.60" fill="#262626" rx="0.6"/><rect x="681.00" y="348.20" width="2.20" height="0.80" fill="#8a7a5a" /><rect x="684.25" y="346.50" width="3.40" height="2.60" fill="#262626" rx="0.6"/><rect x="684.85" y="348.20" width="2.20" height="0.80" fill="#8a7a5a" /><rect x="688.10" y="346.50" width="3.40" height="2.60" fill="#262626" rx="0.6"/><rect x="688.70" y="348.20" width="2.20" height="0.80" fill="#8a7a5a" /><rect x="691.95" y="346.50" width="3.40" height="2.60" fill="#262626" rx="0.6"/><rect x="692.55" y="348.20" width="2.20" height="0.80" fill="#8a7a5a" /><rect x="672.70" y="345.20" width="22.50" height="1.10" fill="#efefef" /><rect x="697.00" y="340.60" width="23.40" height="10.20" fill="#d4d4d4" /><rect x="697.50" y="342.40" width="3.40" height="2.60" fill="#262626" rx="0.6"/><rect x="698.10" y="344.10" width="2.20" height="0.80" fill="#8a7a5a" /><rect x="701.35" y="342.40" width="3.40" height="2.60" fill="#262626" rx="0.6"/><rect x="701.95" y="344.10" width="2.20" height="0.80" fill="#8a7a5a" /><rect x="705.20" y="342.40" width="3.40" height="2.60" fill="#262626" rx="0.6"/><rect x="705.80" y="344.10" width="2.20" height="0.80" fill="#8a7a5a" /><rect x="709.05" y="342.40" width="3.40" height="2.60" fill="#262626" rx="0.6"/><rect x="709.65" y="344.10" width="2.20" height="0.80" fill="#8a7a5a" /><rect x="712.90" y="342.40" width="3.40" height="2.60" fill="#262626" rx="0.6"/><rect x="713.50" y="344.10" width="2.20" height="0.80" fill="#8a7a5a" /><rect x="716.75" y="342.40" width="3.40" height="2.60" fill="#262626" rx="0.6"/><rect x="717.35" y="344.10" width="2.20" height="0.80" fill="#8a7a5a" /><rect x="697.50" y="346.50" width="3.40" height="2.60" fill="#262626" rx="0.6"/><rect x="698.10" y="348.20" width="2.20" height="0.80" fill="#8a7a5a" /><rect x="701.35" y="346.50" width="3.40" height="2.60" fill="#262626" rx="0.6"/><rect x="701.95" y="348.20" width="2.20" height="0.80" fill="#8a7a5a" /><rect x="705.20" y="346.50" width="3.40" height="2.60" fill="#262626" rx="0.6"/><rect x="705.80" y="348.20" width="2.20" height="0.80" fill="#8a7a5a" /><rect x="709.05" y="346.50" width="3.40" height="2.60" fill="#262626" rx="0.6"/><rect x="709.65" y="348.20" width="2.20" height="0.80" fill="#8a7a5a" /><rect x="712.90" y="346.50" width="3.40" height="2.60" fill="#262626" rx="0.6"/><rect x="713.50" y="348.20" width="2.20" height="0.80" fill="#8a7a5a" /><rect x="716.75" y="346.50" width="3.40" height="2.60" fill="#262626" rx="0.6"/><rect x="717.35" y="348.20" width="2.20" height="0.80" fill="#8a7a5a" /><rect x="697.50" y="345.20" width="22.50" height="1.10" fill="#efefef" /><rect x="623.50" y="340.60" width="3.00" height="1.30" fill="#555" /><rect x="649.00" y="340.60" width="21.00" height="1.10" fill="#4a4a4a" /><rect x="673.00" y="340.60" width="46.00" height="1.10" fill="#4a4a4a" /><rect x="720.20" y="340.60" width="0.90" height="10.40" fill="#8a8a8a" /><rect x="721.50" y="341.10" width="16.50" height="9.50" fill="#c6c6c6" /><rect x="722.30" y="342.70" width="15.00" height="2.20" fill="#555" /><rect x="722.30" y="346.60" width="15.00" height="2.20" fill="#535353" /><rect x="739.00" y="341.60" width="1.50" height="1.50" fill="#444" /><rect x="616.20" y="351.30" width="133.00" height="0.80" fill="#aebbc9" /><rect x="616.20" y="352.00" width="133.00" height="12.40" fill="#cdcdcd" /><rect x="616.20" y="352.00" width="5.60" height="12.40" fill="#dadada" /><rect x="742.00" y="352.00" width="7.20" height="12.40" fill="#d8d8d8" /><rect x="617.50" y="354.00" width="2.50" height="2.00" fill="#f2f2f2" /><rect x="617.50" y="359.50" width="2.50" height="2.00" fill="#f2f2f2" /><rect x="744.00" y="354.00" width="2.50" height="2.00" fill="#eeeeee" /><rect x="744.00" y="359.50" width="2.50" height="2.00" fill="#eeeeee" /><rect x="623.20" y="353.00" width="23.40" height="10.20" fill="#d4d4d4" /><rect x="623.70" y="354.80" width="3.40" height="2.60" fill="#262626" rx="0.6"/><rect x="624.30" y="356.50" width="2.20" height="0.80" fill="#8a7a5a" /><rect x="627.55" y="354.80" width="3.40" height="2.60" fill="#262626" rx="0.6"/><rect x="628.15" y="356.50" width="2.20" height="0.80" fill="#8a7a5a" /><rect x="631.40" y="354.80" width="3.40" height="2.60" fill="#262626" rx="0.6"/><rect x="632.00" y="356.50" width="2.20" height="0.80" fill="#8a7a5a" /><rect x="635.25" y="354.80" width="3.40" height="2.60" fill="#262626" rx="0.6"/><rect x="635.85" y="356.50" width="2.20" height="0.80" fill="#8a7a5a" /><rect x="639.10" y="354.80" width="3.40" height="2.60" fill="#262626" rx="0.6"/><rect x="639.70" y="356.50" width="2.20" height="0.80" fill="#8a7a5a" /><rect x="642.95" y="354.80" width="3.40" height="2.60" fill="#262626" rx="0.6"/><rect x="643.55" y="356.50" width="2.20" height="0.80" fill="#8a7a5a" /><rect x="623.70" y="358.90" width="3.40" height="2.60" fill="#262626" rx="0.6"/><rect x="624.30" y="360.60" width="2.20" height="0.80" fill="#8a7a5a" /><rect x="627.55" y="358.90" width="3.40" height="2.60" fill="#262626" rx="0.6"/><rect x="628.15" y="360.60" width="2.20" height="0.80" fill="#8a7a5a" /><rect x="631.40" y="358.90" width="3.40" height="2.60" fill="#262626" rx="0.6"/><rect x="632.00" y="360.60" width="2.20" height="0.80" fill="#8a7a5a" /><rect x="635.25" y="358.90" width="3.40" height="2.60" fill="#262626" rx="0.6"/><rect x="635.85" y="360.60" width="2.20" height="0.80" fill="#8a7a5a" /><rect x="639.10" y="358.90" width="3.40" height="2.60" fill="#262626" rx="0.6"/><rect x="639.70" y="360.60" width="2.20" height="0.80" fill="#8a7a5a" /><rect x="642.95" y="358.90" width="3.40" height="2.60" fill="#262626" rx="0.6"/><rect x="643.55" y="360.60" width="2.20" height="0.80" fill="#8a7a5a" /><rect x="623.70" y="357.60" width="22.50" height="1.10" fill="#efefef" /><rect x="647.80" y="353.00" width="23.40" height="10.20" fill="#d4d4d4" /><rect x="648.30" y="354.80" width="3.40" height="2.60" fill="#262626" rx="0.6"/><rect x="648.90" y="356.50" width="2.20" height="0.80" fill="#8a7a5a" /><rect x="652.15" y="354.80" width="3.40" height="2.60" fill="#262626" rx="0.6"/><rect x="652.75" y="356.50" width="2.20" height="0.80" fill="#8a7a5a" /><rect x="656.00" y="354.80" width="3.40" height="2.60" fill="#262626" rx="0.6"/><rect x="656.60" y="356.50" width="2.20" height="0.80" fill="#8a7a5a" /><rect x="659.85" y="354.80" width="3.40" height="2.60" fill="#262626" rx="0.6"/><rect x="660.45" y="356.50" width="2.20" height="0.80" fill="#8a7a5a" /><rect x="663.70" y="354.80" width="3.40" height="2.60" fill="#262626" rx="0.6"/><rect x="664.30" y="356.50" width="2.20" height="0.80" fill="#8a7a5a" /><rect x="667.55" y="354.80" width="3.40" height="2.60" fill="#262626" rx="0.6"/><rect x="668.15" y="356.50" width="2.20" height="0.80" fill="#8a7a5a" /><rect x="648.30" y="358.90" width="3.40" height="2.60" fill="#262626" rx="0.6"/><rect x="648.90" y="360.60" width="2.20" height="0.80" fill="#8a7a5a" /><rect x="652.15" y="358.90" width="3.40" height="2.60" fill="#262626" rx="0.6"/><rect x="652.75" y="360.60" width="2.20" height="0.80" fill="#8a7a5a" /><rect x="656.00" y="358.90" width="3.40" height="2.60" fill="#262626" rx="0.6"/><rect x="656.60" y="360.60" width="2.20" height="0.80" fill="#8a7a5a" /><rect x="659.85" y="358.90" width="3.40" height="2.60" fill="#262626" rx="0.6"/><rect x="660.45" y="360.60" width="2.20" height="0.80" fill="#8a7a5a" /><rect x="663.70" y="358.90" width="3.40" height="2.60" fill="#262626" rx="0.6"/><rect x="664.30" y="360.60" width="2.20" height="0.80" fill="#8a7a5a" /><rect x="667.55" y="358.90" width="3.40" height="2.60" fill="#262626" rx="0.6"/><rect x="668.15" y="360.60" width="2.20" height="0.80" fill="#8a7a5a" /><rect x="648.30" y="357.60" width="22.50" height="1.10" fill="#efefef" /><rect x="672.20" y="353.00" width="23.40" height="10.20" fill="#d4d4d4" /><rect x="672.70" y="354.80" width="3.40" height="2.60" fill="#262626" rx="0.6"/><rect x="673.30" y="356.50" width="2.20" height="0.80" fill="#8a7a5a" /><rect x="676.55" y="354.80" width="3.40" height="2.60" fill="#262626" rx="0.6"/><rect x="677.15" y="356.50" width="2.20" height="0.80" fill="#8a7a5a" /><rect x="680.40" y="354.80" width="3.40" height="2.60" fill="#262626" rx="0.6"/><rect x="681.00" y="356.50" width="2.20" height="0.80" fill="#8a7a5a" /><rect x="684.25" y="354.80" width="3.40" height="2.60" fill="#262626" rx="0.6"/><rect x="684.85" y="356.50" width="2.20" height="0.80" fill="#8a7a5a" /><rect x="688.10" y="354.80" width="3.40" height="2.60" fill="#262626" rx="0.6"/><rect x="688.70" y="356.50" width="2.20" height="0.80" fill="#8a7a5a" /><rect x="691.95" y="354.80" width="3.40" height="2.60" fill="#262626" rx="0.6"/><rect x="692.55" y="356.50" width="2.20" height="0.80" fill="#8a7a5a" /><rect x="672.70" y="358.90" width="3.40" height="2.60" fill="#262626" rx="0.6"/><rect x="673.30" y="360.60" width="2.20" height="0.80" fill="#8a7a5a" /><rect x="676.55" y="358.90" width="3.40" height="2.60" fill="#262626" rx="0.6"/><rect x="677.15" y="360.60" width="2.20" height="0.80" fill="#8a7a5a" /><rect x="680.40" y="358.90" width="3.40" height="2.60" fill="#262626" rx="0.6"/><rect x="681.00" y="360.60" width="2.20" height="0.80" fill="#8a7a5a" /><rect x="684.25" y="358.90" width="3.40" height="2.60" fill="#262626" rx="0.6"/><rect x="684.85" y="360.60" width="2.20" height="0.80" fill="#8a7a5a" /><rect x="688.10" y="358.90" width="3.40" height="2.60" fill="#262626" rx="0.6"/><rect x="688.70" y="360.60" width="2.20" height="0.80" fill="#8a7a5a" /><rect x="691.95" y="358.90" width="3.40" height="2.60" fill="#262626" rx="0.6"/><rect x="692.55" y="360.60" width="2.20" height="0.80" fill="#8a7a5a" /><rect x="672.70" y="357.60" width="22.50" height="1.10" fill="#efefef" /><rect x="697.00" y="353.00" width="23.40" height="10.20" fill="#d4d4d4" /><rect x="697.50" y="354.80" width="3.40" height="2.60" fill="#262626" rx="0.6"/><rect x="698.10" y="356.50" width="2.20" height="0.80" fill="#8a7a5a" /><rect x="701.35" y="354.80" width="3.40" height="2.60" fill="#262626" rx="0.6"/><rect x="701.95" y="356.50" width="2.20" height="0.80" fill="#8a7a5a" /><rect x="705.20" y="354.80" width="3.40" height="2.60" fill="#262626" rx="0.6"/><rect x="705.80" y="356.50" width="2.20" height="0.80" fill="#8a7a5a" /><rect x="709.05" y="354.80" width="3.40" height="2.60" fill="#262626" rx="0.6"/><rect x="709.65" y="356.50" width="2.20" height="0.80" fill="#8a7a5a" /><rect x="712.90" y="354.80" width="3.40" height="2.60" fill="#262626" rx="0.6"/><rect x="713.50" y="356.50" width="2.20" height="0.80" fill="#8a7a5a" /><rect x="716.75" y="354.80" width="3.40" height="2.60" fill="#262626" rx="0.6"/><rect x="717.35" y="356.50" width="2.20" height="0.80" fill="#8a7a5a" /><rect x="697.50" y="358.90" width="3.40" height="2.60" fill="#262626" rx="0.6"/><rect x="698.10" y="360.60" width="2.20" height="0.80" fill="#8a7a5a" /><rect x="701.35" y="358.90" width="3.40" height="2.60" fill="#262626" rx="0.6"/><rect x="701.95" y="360.60" width="2.20" height="0.80" fill="#8a7a5a" /><rect x="705.20" y="358.90" width="3.40" height="2.60" fill="#262626" rx="0.6"/><rect x="705.80" y="360.60" width="2.20" height="0.80" fill="#8a7a5a" /><rect x="709.05" y="358.90" width="3.40" height="2.60" fill="#262626" rx="0.6"/><rect x="709.65" y="360.60" width="2.20" height="0.80" fill="#8a7a5a" /><rect x="712.90" y="358.90" width="3.40" height="2.60" fill="#262626" rx="0.6"/><rect x="713.50" y="360.60" width="2.20" height="0.80" fill="#8a7a5a" /><rect x="716.75" y="358.90" width="3.40" height="2.60" fill="#262626" rx="0.6"/><rect x="717.35" y="360.60" width="2.20" height="0.80" fill="#8a7a5a" /><rect x="697.50" y="357.60" width="22.50" height="1.10" fill="#efefef" /><rect x="623.50" y="353.00" width="3.00" height="1.30" fill="#555" /><rect x="649.00" y="353.00" width="21.00" height="1.10" fill="#4a4a4a" /><rect x="673.00" y="353.00" width="46.00" height="1.10" fill="#4a4a4a" /><rect x="720.20" y="353.00" width="0.90" height="10.40" fill="#8a8a8a" /><rect x="721.50" y="353.50" width="16.50" height="9.50" fill="#c6c6c6" /><rect x="722.30" y="355.10" width="15.00" height="2.20" fill="#555" /><rect x="722.30" y="359.00" width="15.00" height="2.20" fill="#535353" /><rect x="739.00" y="354.00" width="1.50" height="1.50" fill="#444" /><rect x="616.20" y="363.70" width="133.00" height="0.80" fill="#aebbc9" /><rect x="616.20" y="364.40" width="131.40" height="24.80" fill="#4c4c4c" /><rect x="614.00" y="364.00" width="135.00" height="1.10" fill="#6f7680" /><rect x="617.00" y="365.20" width="2.80" height="1.60" fill="#a9a9a9" /><rect x="617.00" y="386.60" width="2.80" height="1.60" fill="#a9a9a9" /><rect x="744.50" y="365.20" width="2.80" height="1.60" fill="#a5a5a5" /><rect x="744.50" y="386.60" width="2.80" height="1.60" fill="#a5a5a5" /><rect x="623.00" y="365.40" width="14.00" height="1.60" fill="#7c7c7c" /><rect x="626.00" y="365.50" width="9.00" height="1.40" fill="#b4b4b4" /><rect x="690.00" y="365.40" width="25.00" height="1.60" fill="#74742e" /><rect x="715.00" y="365.20" width="22.00" height="2.20" fill="#6a6a34" /><rect x="715.30" y="365.30" width="1.10" height="2.00" fill="#b4b440" /><rect x="717.28" y="365.30" width="1.10" height="2.00" fill="#b4b440" /><rect x="719.26" y="365.30" width="1.10" height="2.00" fill="#b4b440" /><rect x="721.24" y="365.30" width="1.10" height="2.00" fill="#b4b440" /><rect x="723.22" y="365.30" width="1.10" height="2.00" fill="#b4b440" /><rect x="725.20" y="365.30" width="1.10" height="2.00" fill="#b4b440" /><rect x="727.18" y="365.30" width="1.10" height="2.00" fill="#b4b440" /><rect x="729.16" y="365.30" width="1.10" height="2.00" fill="#b4b440" /><rect x="731.14" y="365.30" width="1.10" height="2.00" fill="#b4b440" /><rect x="733.12" y="365.30" width="1.10" height="2.00" fill="#b4b440" /><rect x="735.10" y="365.30" width="1.10" height="2.00" fill="#b4b440" /><rect x="738.00" y="365.60" width="3.00" height="1.30" fill="#5e5e30" /><rect x="622.80" y="368.80" width="26.20" height="1.30" fill="#858585" /><rect x="622.80" y="370.10" width="26.20" height="4.00" fill="#5a5a5a" /><path d="M623.80 370.30h3.6v1.9l-0.7 0.7h-0.5v0.5h-1.2v-0.5h-0.5l-0.7 -0.7z" fill="#050505" /><path d="M628.00 370.30h3.6v1.9l-0.7 0.7h-0.5v0.5h-1.2v-0.5h-0.5l-0.7 -0.7z" fill="#050505" /><path d="M632.20 370.30h3.6v1.9l-0.7 0.7h-0.5v0.5h-1.2v-0.5h-0.5l-0.7 -0.7z" fill="#050505" /><path d="M636.40 370.30h3.6v1.9l-0.7 0.7h-0.5v0.5h-1.2v-0.5h-0.5l-0.7 -0.7z" fill="#050505" /><path d="M640.60 370.30h3.6v1.9l-0.7 0.7h-0.5v0.5h-1.2v-0.5h-0.5l-0.7 -0.7z" fill="#050505" /><path d="M644.80 370.30h3.6v1.9l-0.7 0.7h-0.5v0.5h-1.2v-0.5h-0.5l-0.7 -0.7z" fill="#050505" /><rect x="622.80" y="381.40" width="26.20" height="1.30" fill="#858585" /><rect x="622.80" y="382.70" width="26.20" height="4.00" fill="#5a5a5a" /><path d="M623.80 382.90h3.6v1.9l-0.7 0.7h-0.5v0.5h-1.2v-0.5h-0.5l-0.7 -0.7z" fill="#050505" /><path d="M628.00 382.90h3.6v1.9l-0.7 0.7h-0.5v0.5h-1.2v-0.5h-0.5l-0.7 -0.7z" fill="#050505" /><path d="M632.20 382.90h3.6v1.9l-0.7 0.7h-0.5v0.5h-1.2v-0.5h-0.5l-0.7 -0.7z" fill="#050505" /><path d="M636.40 382.90h3.6v1.9l-0.7 0.7h-0.5v0.5h-1.2v-0.5h-0.5l-0.7 -0.7z" fill="#050505" /><path d="M640.60 382.90h3.6v1.9l-0.7 0.7h-0.5v0.5h-1.2v-0.5h-0.5l-0.7 -0.7z" fill="#050505" /><path d="M644.80 382.90h3.6v1.9l-0.7 0.7h-0.5v0.5h-1.2v-0.5h-0.5l-0.7 -0.7z" fill="#050505" /><rect x="653.30" y="368.80" width="26.20" height="1.30" fill="#858585" /><rect x="653.30" y="370.10" width="26.20" height="4.00" fill="#5a5a5a" /><path d="M654.30 370.30h3.6v1.9l-0.7 0.7h-0.5v0.5h-1.2v-0.5h-0.5l-0.7 -0.7z" fill="#050505" /><path d="M658.50 370.30h3.6v1.9l-0.7 0.7h-0.5v0.5h-1.2v-0.5h-0.5l-0.7 -0.7z" fill="#050505" /><path d="M662.70 370.30h3.6v1.9l-0.7 0.7h-0.5v0.5h-1.2v-0.5h-0.5l-0.7 -0.7z" fill="#050505" /><path d="M666.90 370.30h3.6v1.9l-0.7 0.7h-0.5v0.5h-1.2v-0.5h-0.5l-0.7 -0.7z" fill="#050505" /><path d="M671.10 370.30h3.6v1.9l-0.7 0.7h-0.5v0.5h-1.2v-0.5h-0.5l-0.7 -0.7z" fill="#050505" /><path d="M675.30 370.30h3.6v1.9l-0.7 0.7h-0.5v0.5h-1.2v-0.5h-0.5l-0.7 -0.7z" fill="#050505" /><rect x="653.30" y="381.40" width="26.20" height="1.30" fill="#858585" /><rect x="653.30" y="382.70" width="26.20" height="4.00" fill="#5a5a5a" /><path d="M654.30 382.90h3.6v1.9l-0.7 0.7h-0.5v0.5h-1.2v-0.5h-0.5l-0.7 -0.7z" fill="#050505" /><path d="M658.50 382.90h3.6v1.9l-0.7 0.7h-0.5v0.5h-1.2v-0.5h-0.5l-0.7 -0.7z" fill="#050505" /><path d="M662.70 382.90h3.6v1.9l-0.7 0.7h-0.5v0.5h-1.2v-0.5h-0.5l-0.7 -0.7z" fill="#050505" /><path d="M666.90 382.90h3.6v1.9l-0.7 0.7h-0.5v0.5h-1.2v-0.5h-0.5l-0.7 -0.7z" fill="#050505" /><path d="M671.10 382.90h3.6v1.9l-0.7 0.7h-0.5v0.5h-1.2v-0.5h-0.5l-0.7 -0.7z" fill="#050505" /><path d="M675.30 382.90h3.6v1.9l-0.7 0.7h-0.5v0.5h-1.2v-0.5h-0.5l-0.7 -0.7z" fill="#050505" /><rect x="683.90" y="368.80" width="26.20" height="1.30" fill="#858585" /><rect x="683.90" y="370.10" width="26.20" height="4.00" fill="#5a5a5a" /><path d="M684.90 370.30h3.6v1.9l-0.7 0.7h-0.5v0.5h-1.2v-0.5h-0.5l-0.7 -0.7z" fill="#050505" /><path d="M689.10 370.30h3.6v1.9l-0.7 0.7h-0.5v0.5h-1.2v-0.5h-0.5l-0.7 -0.7z" fill="#050505" /><path d="M693.30 370.30h3.6v1.9l-0.7 0.7h-0.5v0.5h-1.2v-0.5h-0.5l-0.7 -0.7z" fill="#050505" /><path d="M697.50 370.30h3.6v1.9l-0.7 0.7h-0.5v0.5h-1.2v-0.5h-0.5l-0.7 -0.7z" fill="#050505" /><path d="M701.70 370.30h3.6v1.9l-0.7 0.7h-0.5v0.5h-1.2v-0.5h-0.5l-0.7 -0.7z" fill="#050505" /><path d="M705.90 370.30h3.6v1.9l-0.7 0.7h-0.5v0.5h-1.2v-0.5h-0.5l-0.7 -0.7z" fill="#050505" /><rect x="683.90" y="381.40" width="26.20" height="1.30" fill="#858585" /><rect x="683.90" y="382.70" width="26.20" height="4.00" fill="#5a5a5a" /><path d="M684.90 382.90h3.6v1.9l-0.7 0.7h-0.5v0.5h-1.2v-0.5h-0.5l-0.7 -0.7z" fill="#050505" /><path d="M689.10 382.90h3.6v1.9l-0.7 0.7h-0.5v0.5h-1.2v-0.5h-0.5l-0.7 -0.7z" fill="#050505" /><path d="M693.30 382.90h3.6v1.9l-0.7 0.7h-0.5v0.5h-1.2v-0.5h-0.5l-0.7 -0.7z" fill="#050505" /><path d="M697.50 382.90h3.6v1.9l-0.7 0.7h-0.5v0.5h-1.2v-0.5h-0.5l-0.7 -0.7z" fill="#050505" /><path d="M701.70 382.90h3.6v1.9l-0.7 0.7h-0.5v0.5h-1.2v-0.5h-0.5l-0.7 -0.7z" fill="#050505" /><path d="M705.90 382.90h3.6v1.9l-0.7 0.7h-0.5v0.5h-1.2v-0.5h-0.5l-0.7 -0.7z" fill="#050505" /><rect x="714.40" y="368.80" width="26.20" height="1.30" fill="#858585" /><rect x="714.40" y="370.10" width="26.20" height="4.00" fill="#5a5a5a" /><path d="M715.40 370.30h3.6v1.9l-0.7 0.7h-0.5v0.5h-1.2v-0.5h-0.5l-0.7 -0.7z" fill="#050505" /><path d="M719.60 370.30h3.6v1.9l-0.7 0.7h-0.5v0.5h-1.2v-0.5h-0.5l-0.7 -0.7z" fill="#050505" /><path d="M723.80 370.30h3.6v1.9l-0.7 0.7h-0.5v0.5h-1.2v-0.5h-0.5l-0.7 -0.7z" fill="#050505" /><path d="M728.00 370.30h3.6v1.9l-0.7 0.7h-0.5v0.5h-1.2v-0.5h-0.5l-0.7 -0.7z" fill="#050505" /><path d="M732.20 370.30h3.6v1.9l-0.7 0.7h-0.5v0.5h-1.2v-0.5h-0.5l-0.7 -0.7z" fill="#050505" /><path d="M736.40 370.30h3.6v1.9l-0.7 0.7h-0.5v0.5h-1.2v-0.5h-0.5l-0.7 -0.7z" fill="#050505" /><rect x="714.40" y="381.40" width="26.20" height="1.30" fill="#858585" /><rect x="714.40" y="382.70" width="26.20" height="4.00" fill="#5a5a5a" /><path d="M715.40 382.90h3.6v1.9l-0.7 0.7h-0.5v0.5h-1.2v-0.5h-0.5l-0.7 -0.7z" fill="#050505" /><path d="M719.60 382.90h3.6v1.9l-0.7 0.7h-0.5v0.5h-1.2v-0.5h-0.5l-0.7 -0.7z" fill="#050505" /><path d="M723.80 382.90h3.6v1.9l-0.7 0.7h-0.5v0.5h-1.2v-0.5h-0.5l-0.7 -0.7z" fill="#050505" /><path d="M728.00 382.90h3.6v1.9l-0.7 0.7h-0.5v0.5h-1.2v-0.5h-0.5l-0.7 -0.7z" fill="#050505" /><path d="M732.20 382.90h3.6v1.9l-0.7 0.7h-0.5v0.5h-1.2v-0.5h-0.5l-0.7 -0.7z" fill="#050505" /><path d="M736.40 382.90h3.6v1.9l-0.7 0.7h-0.5v0.5h-1.2v-0.5h-0.5l-0.7 -0.7z" fill="#050505" /><rect x="616.20" y="389.20" width="131.40" height="24.80" fill="#4c4c4c" /><rect x="614.00" y="388.80" width="135.00" height="1.10" fill="#6f7680" /><rect x="617.00" y="390.00" width="2.80" height="1.60" fill="#a9a9a9" /><rect x="617.00" y="411.40" width="2.80" height="1.60" fill="#a9a9a9" /><rect x="744.50" y="390.00" width="2.80" height="1.60" fill="#a5a5a5" /><rect x="744.50" y="411.40" width="2.80" height="1.60" fill="#a5a5a5" /><rect x="623.00" y="390.20" width="14.00" height="1.60" fill="#7c7c7c" /><rect x="626.00" y="390.30" width="9.00" height="1.40" fill="#b4b4b4" /><rect x="690.00" y="390.20" width="25.00" height="1.60" fill="#74742e" /><rect x="715.00" y="390.00" width="22.00" height="2.20" fill="#6a6a34" /><rect x="715.30" y="390.10" width="1.10" height="2.00" fill="#b4b440" /><rect x="717.28" y="390.10" width="1.10" height="2.00" fill="#b4b440" /><rect x="719.26" y="390.10" width="1.10" height="2.00" fill="#b4b440" /><rect x="721.24" y="390.10" width="1.10" height="2.00" fill="#b4b440" /><rect x="723.22" y="390.10" width="1.10" height="2.00" fill="#b4b440" /><rect x="725.20" y="390.10" width="1.10" height="2.00" fill="#b4b440" /><rect x="727.18" y="390.10" width="1.10" height="2.00" fill="#b4b440" /><rect x="729.16" y="390.10" width="1.10" height="2.00" fill="#b4b440" /><rect x="731.14" y="390.10" width="1.10" height="2.00" fill="#b4b440" /><rect x="733.12" y="390.10" width="1.10" height="2.00" fill="#b4b440" /><rect x="735.10" y="390.10" width="1.10" height="2.00" fill="#b4b440" /><rect x="738.00" y="390.40" width="3.00" height="1.30" fill="#5e5e30" /><rect x="622.80" y="393.60" width="26.20" height="1.30" fill="#858585" /><rect x="622.80" y="394.90" width="26.20" height="4.00" fill="#5a5a5a" /><path d="M623.80 395.10h3.6v1.9l-0.7 0.7h-0.5v0.5h-1.2v-0.5h-0.5l-0.7 -0.7z" fill="#050505" /><path d="M628.00 395.10h3.6v1.9l-0.7 0.7h-0.5v0.5h-1.2v-0.5h-0.5l-0.7 -0.7z" fill="#050505" /><path d="M632.20 395.10h3.6v1.9l-0.7 0.7h-0.5v0.5h-1.2v-0.5h-0.5l-0.7 -0.7z" fill="#050505" /><path d="M636.40 395.10h3.6v1.9l-0.7 0.7h-0.5v0.5h-1.2v-0.5h-0.5l-0.7 -0.7z" fill="#050505" /><path d="M640.60 395.10h3.6v1.9l-0.7 0.7h-0.5v0.5h-1.2v-0.5h-0.5l-0.7 -0.7z" fill="#050505" /><path d="M644.80 395.10h3.6v1.9l-0.7 0.7h-0.5v0.5h-1.2v-0.5h-0.5l-0.7 -0.7z" fill="#050505" /><rect x="622.80" y="406.20" width="26.20" height="1.30" fill="#858585" /><rect x="622.80" y="407.50" width="26.20" height="4.00" fill="#5a5a5a" /><path d="M623.80 407.70h3.6v1.9l-0.7 0.7h-0.5v0.5h-1.2v-0.5h-0.5l-0.7 -0.7z" fill="#050505" /><path d="M628.00 407.70h3.6v1.9l-0.7 0.7h-0.5v0.5h-1.2v-0.5h-0.5l-0.7 -0.7z" fill="#050505" /><path d="M632.20 407.70h3.6v1.9l-0.7 0.7h-0.5v0.5h-1.2v-0.5h-0.5l-0.7 -0.7z" fill="#050505" /><path d="M636.40 407.70h3.6v1.9l-0.7 0.7h-0.5v0.5h-1.2v-0.5h-0.5l-0.7 -0.7z" fill="#050505" /><path d="M640.60 407.70h3.6v1.9l-0.7 0.7h-0.5v0.5h-1.2v-0.5h-0.5l-0.7 -0.7z" fill="#050505" /><path d="M644.80 407.70h3.6v1.9l-0.7 0.7h-0.5v0.5h-1.2v-0.5h-0.5l-0.7 -0.7z" fill="#050505" /><rect x="653.30" y="393.60" width="26.20" height="1.30" fill="#858585" /><rect x="653.30" y="394.90" width="26.20" height="4.00" fill="#5a5a5a" /><path d="M654.30 395.10h3.6v1.9l-0.7 0.7h-0.5v0.5h-1.2v-0.5h-0.5l-0.7 -0.7z" fill="#050505" /><path d="M658.50 395.10h3.6v1.9l-0.7 0.7h-0.5v0.5h-1.2v-0.5h-0.5l-0.7 -0.7z" fill="#050505" /><path d="M662.70 395.10h3.6v1.9l-0.7 0.7h-0.5v0.5h-1.2v-0.5h-0.5l-0.7 -0.7z" fill="#050505" /><path d="M666.90 395.10h3.6v1.9l-0.7 0.7h-0.5v0.5h-1.2v-0.5h-0.5l-0.7 -0.7z" fill="#050505" /><path d="M671.10 395.10h3.6v1.9l-0.7 0.7h-0.5v0.5h-1.2v-0.5h-0.5l-0.7 -0.7z" fill="#050505" /><path d="M675.30 395.10h3.6v1.9l-0.7 0.7h-0.5v0.5h-1.2v-0.5h-0.5l-0.7 -0.7z" fill="#050505" /><rect x="653.30" y="406.20" width="26.20" height="1.30" fill="#858585" /><rect x="653.30" y="407.50" width="26.20" height="4.00" fill="#5a5a5a" /><path d="M654.30 407.70h3.6v1.9l-0.7 0.7h-0.5v0.5h-1.2v-0.5h-0.5l-0.7 -0.7z" fill="#050505" /><path d="M658.50 407.70h3.6v1.9l-0.7 0.7h-0.5v0.5h-1.2v-0.5h-0.5l-0.7 -0.7z" fill="#050505" /><path d="M662.70 407.70h3.6v1.9l-0.7 0.7h-0.5v0.5h-1.2v-0.5h-0.5l-0.7 -0.7z" fill="#050505" /><path d="M666.90 407.70h3.6v1.9l-0.7 0.7h-0.5v0.5h-1.2v-0.5h-0.5l-0.7 -0.7z" fill="#050505" /><path d="M671.10 407.70h3.6v1.9l-0.7 0.7h-0.5v0.5h-1.2v-0.5h-0.5l-0.7 -0.7z" fill="#050505" /><path d="M675.30 407.70h3.6v1.9l-0.7 0.7h-0.5v0.5h-1.2v-0.5h-0.5l-0.7 -0.7z" fill="#050505" /><rect x="683.90" y="393.60" width="26.20" height="1.30" fill="#858585" /><rect x="683.90" y="394.90" width="26.20" height="4.00" fill="#5a5a5a" /><path d="M684.90 395.10h3.6v1.9l-0.7 0.7h-0.5v0.5h-1.2v-0.5h-0.5l-0.7 -0.7z" fill="#050505" /><path d="M689.10 395.10h3.6v1.9l-0.7 0.7h-0.5v0.5h-1.2v-0.5h-0.5l-0.7 -0.7z" fill="#050505" /><path d="M693.30 395.10h3.6v1.9l-0.7 0.7h-0.5v0.5h-1.2v-0.5h-0.5l-0.7 -0.7z" fill="#050505" /><path d="M697.50 395.10h3.6v1.9l-0.7 0.7h-0.5v0.5h-1.2v-0.5h-0.5l-0.7 -0.7z" fill="#050505" /><path d="M701.70 395.10h3.6v1.9l-0.7 0.7h-0.5v0.5h-1.2v-0.5h-0.5l-0.7 -0.7z" fill="#050505" /><path d="M705.90 395.10h3.6v1.9l-0.7 0.7h-0.5v0.5h-1.2v-0.5h-0.5l-0.7 -0.7z" fill="#050505" /><rect x="683.90" y="406.20" width="26.20" height="1.30" fill="#858585" /><rect x="683.90" y="407.50" width="26.20" height="4.00" fill="#5a5a5a" /><path d="M684.90 407.70h3.6v1.9l-0.7 0.7h-0.5v0.5h-1.2v-0.5h-0.5l-0.7 -0.7z" fill="#050505" /><path d="M689.10 407.70h3.6v1.9l-0.7 0.7h-0.5v0.5h-1.2v-0.5h-0.5l-0.7 -0.7z" fill="#050505" /><path d="M693.30 407.70h3.6v1.9l-0.7 0.7h-0.5v0.5h-1.2v-0.5h-0.5l-0.7 -0.7z" fill="#050505" /><path d="M697.50 407.70h3.6v1.9l-0.7 0.7h-0.5v0.5h-1.2v-0.5h-0.5l-0.7 -0.7z" fill="#050505" /><path d="M701.70 407.70h3.6v1.9l-0.7 0.7h-0.5v0.5h-1.2v-0.5h-0.5l-0.7 -0.7z" fill="#050505" /><path d="M705.90 407.70h3.6v1.9l-0.7 0.7h-0.5v0.5h-1.2v-0.5h-0.5l-0.7 -0.7z" fill="#050505" /><rect x="714.40" y="393.60" width="26.20" height="1.30" fill="#858585" /><rect x="714.40" y="394.90" width="26.20" height="4.00" fill="#5a5a5a" /><path d="M715.40 395.10h3.6v1.9l-0.7 0.7h-0.5v0.5h-1.2v-0.5h-0.5l-0.7 -0.7z" fill="#050505" /><path d="M719.60 395.10h3.6v1.9l-0.7 0.7h-0.5v0.5h-1.2v-0.5h-0.5l-0.7 -0.7z" fill="#050505" /><path d="M723.80 395.10h3.6v1.9l-0.7 0.7h-0.5v0.5h-1.2v-0.5h-0.5l-0.7 -0.7z" fill="#050505" /><path d="M728.00 395.10h3.6v1.9l-0.7 0.7h-0.5v0.5h-1.2v-0.5h-0.5l-0.7 -0.7z" fill="#050505" /><path d="M732.20 395.10h3.6v1.9l-0.7 0.7h-0.5v0.5h-1.2v-0.5h-0.5l-0.7 -0.7z" fill="#050505" /><path d="M736.40 395.10h3.6v1.9l-0.7 0.7h-0.5v0.5h-1.2v-0.5h-0.5l-0.7 -0.7z" fill="#050505" /><rect x="714.40" y="406.20" width="26.20" height="1.30" fill="#858585" /><rect x="714.40" y="407.50" width="26.20" height="4.00" fill="#5a5a5a" /><path d="M715.40 407.70h3.6v1.9l-0.7 0.7h-0.5v0.5h-1.2v-0.5h-0.5l-0.7 -0.7z" fill="#050505" /><path d="M719.60 407.70h3.6v1.9l-0.7 0.7h-0.5v0.5h-1.2v-0.5h-0.5l-0.7 -0.7z" fill="#050505" /><path d="M723.80 407.70h3.6v1.9l-0.7 0.7h-0.5v0.5h-1.2v-0.5h-0.5l-0.7 -0.7z" fill="#050505" /><path d="M728.00 407.70h3.6v1.9l-0.7 0.7h-0.5v0.5h-1.2v-0.5h-0.5l-0.7 -0.7z" fill="#050505" /><path d="M732.20 407.70h3.6v1.9l-0.7 0.7h-0.5v0.5h-1.2v-0.5h-0.5l-0.7 -0.7z" fill="#050505" /><path d="M736.40 407.70h3.6v1.9l-0.7 0.7h-0.5v0.5h-1.2v-0.5h-0.5l-0.7 -0.7z" fill="#050505" /><rect x="616.20" y="414.00" width="133.00" height="12.40" fill="#cdcdcd" /><rect x="616.20" y="414.00" width="5.60" height="12.40" fill="#dadada" /><rect x="742.00" y="414.00" width="7.20" height="12.40" fill="#d8d8d8" /><rect x="617.50" y="416.00" width="2.50" height="2.00" fill="#f2f2f2" /><rect x="617.50" y="421.50" width="2.50" height="2.00" fill="#f2f2f2" /><rect x="744.00" y="416.00" width="2.50" height="2.00" fill="#eeeeee" /><rect x="744.00" y="421.50" width="2.50" height="2.00" fill="#eeeeee" /><rect x="623.20" y="415.00" width="23.40" height="10.20" fill="#d4d4d4" /><rect x="623.70" y="416.80" width="3.40" height="2.60" fill="#262626" rx="0.6"/><rect x="624.30" y="418.50" width="2.20" height="0.80" fill="#8a7a5a" /><rect x="627.55" y="416.80" width="3.40" height="2.60" fill="#262626" rx="0.6"/><rect x="628.15" y="418.50" width="2.20" height="0.80" fill="#8a7a5a" /><rect x="631.40" y="416.80" width="3.40" height="2.60" fill="#262626" rx="0.6"/><rect x="632.00" y="418.50" width="2.20" height="0.80" fill="#8a7a5a" /><rect x="635.25" y="416.80" width="3.40" height="2.60" fill="#262626" rx="0.6"/><rect x="635.85" y="418.50" width="2.20" height="0.80" fill="#8a7a5a" /><rect x="639.10" y="416.80" width="3.40" height="2.60" fill="#262626" rx="0.6"/><rect x="639.70" y="418.50" width="2.20" height="0.80" fill="#8a7a5a" /><rect x="642.95" y="416.80" width="3.40" height="2.60" fill="#262626" rx="0.6"/><rect x="643.55" y="418.50" width="2.20" height="0.80" fill="#8a7a5a" /><rect x="623.70" y="420.90" width="3.40" height="2.60" fill="#262626" rx="0.6"/><rect x="624.30" y="422.60" width="2.20" height="0.80" fill="#8a7a5a" /><rect x="627.55" y="420.90" width="3.40" height="2.60" fill="#262626" rx="0.6"/><rect x="628.15" y="422.60" width="2.20" height="0.80" fill="#8a7a5a" /><rect x="631.40" y="420.90" width="3.40" height="2.60" fill="#262626" rx="0.6"/><rect x="632.00" y="422.60" width="2.20" height="0.80" fill="#8a7a5a" /><rect x="635.25" y="420.90" width="3.40" height="2.60" fill="#262626" rx="0.6"/><rect x="635.85" y="422.60" width="2.20" height="0.80" fill="#8a7a5a" /><rect x="639.10" y="420.90" width="3.40" height="2.60" fill="#262626" rx="0.6"/><rect x="639.70" y="422.60" width="2.20" height="0.80" fill="#8a7a5a" /><rect x="642.95" y="420.90" width="3.40" height="2.60" fill="#262626" rx="0.6"/><rect x="643.55" y="422.60" width="2.20" height="0.80" fill="#8a7a5a" /><rect x="623.70" y="419.60" width="22.50" height="1.10" fill="#efefef" /><rect x="647.80" y="415.00" width="23.40" height="10.20" fill="#d4d4d4" /><rect x="648.30" y="416.80" width="3.40" height="2.60" fill="#262626" rx="0.6"/><rect x="648.90" y="418.50" width="2.20" height="0.80" fill="#8a7a5a" /><rect x="652.15" y="416.80" width="3.40" height="2.60" fill="#262626" rx="0.6"/><rect x="652.75" y="418.50" width="2.20" height="0.80" fill="#8a7a5a" /><rect x="656.00" y="416.80" width="3.40" height="2.60" fill="#262626" rx="0.6"/><rect x="656.60" y="418.50" width="2.20" height="0.80" fill="#8a7a5a" /><rect x="659.85" y="416.80" width="3.40" height="2.60" fill="#262626" rx="0.6"/><rect x="660.45" y="418.50" width="2.20" height="0.80" fill="#8a7a5a" /><rect x="663.70" y="416.80" width="3.40" height="2.60" fill="#262626" rx="0.6"/><rect x="664.30" y="418.50" width="2.20" height="0.80" fill="#8a7a5a" /><rect x="667.55" y="416.80" width="3.40" height="2.60" fill="#262626" rx="0.6"/><rect x="668.15" y="418.50" width="2.20" height="0.80" fill="#8a7a5a" /><rect x="648.30" y="420.90" width="3.40" height="2.60" fill="#262626" rx="0.6"/><rect x="648.90" y="422.60" width="2.20" height="0.80" fill="#8a7a5a" /><rect x="652.15" y="420.90" width="3.40" height="2.60" fill="#262626" rx="0.6"/><rect x="652.75" y="422.60" width="2.20" height="0.80" fill="#8a7a5a" /><rect x="656.00" y="420.90" width="3.40" height="2.60" fill="#262626" rx="0.6"/><rect x="656.60" y="422.60" width="2.20" height="0.80" fill="#8a7a5a" /><rect x="659.85" y="420.90" width="3.40" height="2.60" fill="#262626" rx="0.6"/><rect x="660.45" y="422.60" width="2.20" height="0.80" fill="#8a7a5a" /><rect x="663.70" y="420.90" width="3.40" height="2.60" fill="#262626" rx="0.6"/><rect x="664.30" y="422.60" width="2.20" height="0.80" fill="#8a7a5a" /><rect x="667.55" y="420.90" width="3.40" height="2.60" fill="#262626" rx="0.6"/><rect x="668.15" y="422.60" width="2.20" height="0.80" fill="#8a7a5a" /><rect x="648.30" y="419.60" width="22.50" height="1.10" fill="#efefef" /><rect x="672.20" y="415.00" width="23.40" height="10.20" fill="#d4d4d4" /><rect x="672.70" y="416.80" width="3.40" height="2.60" fill="#262626" rx="0.6"/><rect x="673.30" y="418.50" width="2.20" height="0.80" fill="#8a7a5a" /><rect x="676.55" y="416.80" width="3.40" height="2.60" fill="#262626" rx="0.6"/><rect x="677.15" y="418.50" width="2.20" height="0.80" fill="#8a7a5a" /><rect x="680.40" y="416.80" width="3.40" height="2.60" fill="#262626" rx="0.6"/><rect x="681.00" y="418.50" width="2.20" height="0.80" fill="#8a7a5a" /><rect x="684.25" y="416.80" width="3.40" height="2.60" fill="#262626" rx="0.6"/><rect x="684.85" y="418.50" width="2.20" height="0.80" fill="#8a7a5a" /><rect x="688.10" y="416.80" width="3.40" height="2.60" fill="#262626" rx="0.6"/><rect x="688.70" y="418.50" width="2.20" height="0.80" fill="#8a7a5a" /><rect x="691.95" y="416.80" width="3.40" height="2.60" fill="#262626" rx="0.6"/><rect x="692.55" y="418.50" width="2.20" height="0.80" fill="#8a7a5a" /><rect x="672.70" y="420.90" width="3.40" height="2.60" fill="#262626" rx="0.6"/><rect x="673.30" y="422.60" width="2.20" height="0.80" fill="#8a7a5a" /><rect x="676.55" y="420.90" width="3.40" height="2.60" fill="#262626" rx="0.6"/><rect x="677.15" y="422.60" width="2.20" height="0.80" fill="#8a7a5a" /><rect x="680.40" y="420.90" width="3.40" height="2.60" fill="#262626" rx="0.6"/><rect x="681.00" y="422.60" width="2.20" height="0.80" fill="#8a7a5a" /><rect x="684.25" y="420.90" width="3.40" height="2.60" fill="#262626" rx="0.6"/><rect x="684.85" y="422.60" width="2.20" height="0.80" fill="#8a7a5a" /><rect x="688.10" y="420.90" width="3.40" height="2.60" fill="#262626" rx="0.6"/><rect x="688.70" y="422.60" width="2.20" height="0.80" fill="#8a7a5a" /><rect x="691.95" y="420.90" width="3.40" height="2.60" fill="#262626" rx="0.6"/><rect x="692.55" y="422.60" width="2.20" height="0.80" fill="#8a7a5a" /><rect x="672.70" y="419.60" width="22.50" height="1.10" fill="#efefef" /><rect x="697.00" y="415.00" width="23.40" height="10.20" fill="#d4d4d4" /><rect x="697.50" y="416.80" width="3.40" height="2.60" fill="#262626" rx="0.6"/><rect x="698.10" y="418.50" width="2.20" height="0.80" fill="#8a7a5a" /><rect x="701.35" y="416.80" width="3.40" height="2.60" fill="#262626" rx="0.6"/><rect x="701.95" y="418.50" width="2.20" height="0.80" fill="#8a7a5a" /><rect x="705.20" y="416.80" width="3.40" height="2.60" fill="#262626" rx="0.6"/><rect x="705.80" y="418.50" width="2.20" height="0.80" fill="#8a7a5a" /><rect x="709.05" y="416.80" width="3.40" height="2.60" fill="#262626" rx="0.6"/><rect x="709.65" y="418.50" width="2.20" height="0.80" fill="#8a7a5a" /><rect x="712.90" y="416.80" width="3.40" height="2.60" fill="#262626" rx="0.6"/><rect x="713.50" y="418.50" width="2.20" height="0.80" fill="#8a7a5a" /><rect x="716.75" y="416.80" width="3.40" height="2.60" fill="#262626" rx="0.6"/><rect x="717.35" y="418.50" width="2.20" height="0.80" fill="#8a7a5a" /><rect x="697.50" y="420.90" width="3.40" height="2.60" fill="#262626" rx="0.6"/><rect x="698.10" y="422.60" width="2.20" height="0.80" fill="#8a7a5a" /><rect x="701.35" y="420.90" width="3.40" height="2.60" fill="#262626" rx="0.6"/><rect x="701.95" y="422.60" width="2.20" height="0.80" fill="#8a7a5a" /><rect x="705.20" y="420.90" width="3.40" height="2.60" fill="#262626" rx="0.6"/><rect x="705.80" y="422.60" width="2.20" height="0.80" fill="#8a7a5a" /><rect x="709.05" y="420.90" width="3.40" height="2.60" fill="#262626" rx="0.6"/><rect x="709.65" y="422.60" width="2.20" height="0.80" fill="#8a7a5a" /><rect x="712.90" y="420.90" width="3.40" height="2.60" fill="#262626" rx="0.6"/><rect x="713.50" y="422.60" width="2.20" height="0.80" fill="#8a7a5a" /><rect x="716.75" y="420.90" width="3.40" height="2.60" fill="#262626" rx="0.6"/><rect x="717.35" y="422.60" width="2.20" height="0.80" fill="#8a7a5a" /><rect x="697.50" y="419.60" width="22.50" height="1.10" fill="#efefef" /><rect x="623.50" y="415.00" width="3.00" height="1.30" fill="#555" /><rect x="649.00" y="415.00" width="21.00" height="1.10" fill="#4a4a4a" /><rect x="673.00" y="415.00" width="46.00" height="1.10" fill="#4a4a4a" /><rect x="720.20" y="415.00" width="0.90" height="10.40" fill="#8a8a8a" /><rect x="721.50" y="415.50" width="16.50" height="9.50" fill="#c6c6c6" /><rect x="722.30" y="417.10" width="15.00" height="2.20" fill="#555" /><rect x="722.30" y="421.00" width="15.00" height="2.20" fill="#535353" /><rect x="739.00" y="416.00" width="1.50" height="1.50" fill="#444" /><rect x="616.20" y="425.70" width="133.00" height="0.80" fill="#aebbc9" /><path d="M741 425.80L749.2 417.60V425.80Z" fill="#06066e" /><rect x="616.20" y="426.40" width="133.00" height="12.40" fill="#cdcdcd" /><rect x="616.20" y="426.40" width="5.60" height="12.40" fill="#dadada" /><rect x="742.00" y="426.40" width="7.20" height="12.40" fill="#d8d8d8" /><rect x="617.50" y="428.40" width="2.50" height="2.00" fill="#f2f2f2" /><rect x="617.50" y="433.90" width="2.50" height="2.00" fill="#f2f2f2" /><rect x="744.00" y="428.40" width="2.50" height="2.00" fill="#eeeeee" /><rect x="744.00" y="433.90" width="2.50" height="2.00" fill="#eeeeee" /><rect x="623.20" y="427.40" width="23.40" height="10.20" fill="#d4d4d4" /><rect x="623.70" y="429.20" width="3.40" height="2.60" fill="#262626" rx="0.6"/><rect x="624.30" y="430.90" width="2.20" height="0.80" fill="#8a7a5a" /><rect x="627.55" y="429.20" width="3.40" height="2.60" fill="#262626" rx="0.6"/><rect x="628.15" y="430.90" width="2.20" height="0.80" fill="#8a7a5a" /><rect x="631.40" y="429.20" width="3.40" height="2.60" fill="#262626" rx="0.6"/><rect x="632.00" y="430.90" width="2.20" height="0.80" fill="#8a7a5a" /><rect x="635.25" y="429.20" width="3.40" height="2.60" fill="#262626" rx="0.6"/><rect x="635.85" y="430.90" width="2.20" height="0.80" fill="#8a7a5a" /><rect x="639.10" y="429.20" width="3.40" height="2.60" fill="#262626" rx="0.6"/><rect x="639.70" y="430.90" width="2.20" height="0.80" fill="#8a7a5a" /><rect x="642.95" y="429.20" width="3.40" height="2.60" fill="#262626" rx="0.6"/><rect x="643.55" y="430.90" width="2.20" height="0.80" fill="#8a7a5a" /><rect x="623.70" y="433.30" width="3.40" height="2.60" fill="#262626" rx="0.6"/><rect x="624.30" y="435.00" width="2.20" height="0.80" fill="#8a7a5a" /><rect x="627.55" y="433.30" width="3.40" height="2.60" fill="#262626" rx="0.6"/><rect x="628.15" y="435.00" width="2.20" height="0.80" fill="#8a7a5a" /><rect x="631.40" y="433.30" width="3.40" height="2.60" fill="#262626" rx="0.6"/><rect x="632.00" y="435.00" width="2.20" height="0.80" fill="#8a7a5a" /><rect x="635.25" y="433.30" width="3.40" height="2.60" fill="#262626" rx="0.6"/><rect x="635.85" y="435.00" width="2.20" height="0.80" fill="#8a7a5a" /><rect x="639.10" y="433.30" width="3.40" height="2.60" fill="#262626" rx="0.6"/><rect x="639.70" y="435.00" width="2.20" height="0.80" fill="#8a7a5a" /><rect x="642.95" y="433.30" width="3.40" height="2.60" fill="#262626" rx="0.6"/><rect x="643.55" y="435.00" width="2.20" height="0.80" fill="#8a7a5a" /><rect x="623.70" y="432.00" width="22.50" height="1.10" fill="#efefef" /><rect x="647.80" y="427.40" width="23.40" height="10.20" fill="#d4d4d4" /><rect x="648.30" y="429.20" width="3.40" height="2.60" fill="#262626" rx="0.6"/><rect x="648.90" y="430.90" width="2.20" height="0.80" fill="#8a7a5a" /><rect x="652.15" y="429.20" width="3.40" height="2.60" fill="#262626" rx="0.6"/><rect x="652.75" y="430.90" width="2.20" height="0.80" fill="#8a7a5a" /><rect x="656.00" y="429.20" width="3.40" height="2.60" fill="#262626" rx="0.6"/><rect x="656.60" y="430.90" width="2.20" height="0.80" fill="#8a7a5a" /><rect x="659.85" y="429.20" width="3.40" height="2.60" fill="#262626" rx="0.6"/><rect x="660.45" y="430.90" width="2.20" height="0.80" fill="#8a7a5a" /><rect x="663.70" y="429.20" width="3.40" height="2.60" fill="#262626" rx="0.6"/><rect x="664.30" y="430.90" width="2.20" height="0.80" fill="#8a7a5a" /><rect x="667.55" y="429.20" width="3.40" height="2.60" fill="#262626" rx="0.6"/><rect x="668.15" y="430.90" width="2.20" height="0.80" fill="#8a7a5a" /><rect x="648.30" y="433.30" width="3.40" height="2.60" fill="#262626" rx="0.6"/><rect x="648.90" y="435.00" width="2.20" height="0.80" fill="#8a7a5a" /><rect x="652.15" y="433.30" width="3.40" height="2.60" fill="#262626" rx="0.6"/><rect x="652.75" y="435.00" width="2.20" height="0.80" fill="#8a7a5a" /><rect x="656.00" y="433.30" width="3.40" height="2.60" fill="#262626" rx="0.6"/><rect x="656.60" y="435.00" width="2.20" height="0.80" fill="#8a7a5a" /><rect x="659.85" y="433.30" width="3.40" height="2.60" fill="#262626" rx="0.6"/><rect x="660.45" y="435.00" width="2.20" height="0.80" fill="#8a7a5a" /><rect x="663.70" y="433.30" width="3.40" height="2.60" fill="#262626" rx="0.6"/><rect x="664.30" y="435.00" width="2.20" height="0.80" fill="#8a7a5a" /><rect x="667.55" y="433.30" width="3.40" height="2.60" fill="#262626" rx="0.6"/><rect x="668.15" y="435.00" width="2.20" height="0.80" fill="#8a7a5a" /><rect x="648.30" y="432.00" width="22.50" height="1.10" fill="#efefef" /><rect x="672.20" y="427.40" width="23.40" height="10.20" fill="#d4d4d4" /><rect x="672.70" y="429.20" width="3.40" height="2.60" fill="#262626" rx="0.6"/><rect x="673.30" y="430.90" width="2.20" height="0.80" fill="#8a7a5a" /><rect x="676.55" y="429.20" width="3.40" height="2.60" fill="#262626" rx="0.6"/><rect x="677.15" y="430.90" width="2.20" height="0.80" fill="#8a7a5a" /><rect x="680.40" y="429.20" width="3.40" height="2.60" fill="#262626" rx="0.6"/><rect x="681.00" y="430.90" width="2.20" height="0.80" fill="#8a7a5a" /><rect x="684.25" y="429.20" width="3.40" height="2.60" fill="#262626" rx="0.6"/><rect x="684.85" y="430.90" width="2.20" height="0.80" fill="#8a7a5a" /><rect x="688.10" y="429.20" width="3.40" height="2.60" fill="#262626" rx="0.6"/><rect x="688.70" y="430.90" width="2.20" height="0.80" fill="#8a7a5a" /><rect x="691.95" y="429.20" width="3.40" height="2.60" fill="#262626" rx="0.6"/><rect x="692.55" y="430.90" width="2.20" height="0.80" fill="#8a7a5a" /><rect x="672.70" y="433.30" width="3.40" height="2.60" fill="#262626" rx="0.6"/><rect x="673.30" y="435.00" width="2.20" height="0.80" fill="#8a7a5a" /><rect x="676.55" y="433.30" width="3.40" height="2.60" fill="#262626" rx="0.6"/><rect x="677.15" y="435.00" width="2.20" height="0.80" fill="#8a7a5a" /><rect x="680.40" y="433.30" width="3.40" height="2.60" fill="#262626" rx="0.6"/><rect x="681.00" y="435.00" width="2.20" height="0.80" fill="#8a7a5a" /><rect x="684.25" y="433.30" width="3.40" height="2.60" fill="#262626" rx="0.6"/><rect x="684.85" y="435.00" width="2.20" height="0.80" fill="#8a7a5a" /><rect x="688.10" y="433.30" width="3.40" height="2.60" fill="#262626" rx="0.6"/><rect x="688.70" y="435.00" width="2.20" height="0.80" fill="#8a7a5a" /><rect x="691.95" y="433.30" width="3.40" height="2.60" fill="#262626" rx="0.6"/><rect x="692.55" y="435.00" width="2.20" height="0.80" fill="#8a7a5a" /><rect x="672.70" y="432.00" width="22.50" height="1.10" fill="#efefef" /><rect x="697.00" y="427.40" width="23.40" height="10.20" fill="#d4d4d4" /><rect x="697.50" y="429.20" width="3.40" height="2.60" fill="#262626" rx="0.6"/><rect x="698.10" y="430.90" width="2.20" height="0.80" fill="#8a7a5a" /><rect x="701.35" y="429.20" width="3.40" height="2.60" fill="#262626" rx="0.6"/><rect x="701.95" y="430.90" width="2.20" height="0.80" fill="#8a7a5a" /><rect x="705.20" y="429.20" width="3.40" height="2.60" fill="#262626" rx="0.6"/><rect x="705.80" y="430.90" width="2.20" height="0.80" fill="#8a7a5a" /><rect x="709.05" y="429.20" width="3.40" height="2.60" fill="#262626" rx="0.6"/><rect x="709.65" y="430.90" width="2.20" height="0.80" fill="#8a7a5a" /><rect x="712.90" y="429.20" width="3.40" height="2.60" fill="#262626" rx="0.6"/><rect x="713.50" y="430.90" width="2.20" height="0.80" fill="#8a7a5a" /><rect x="716.75" y="429.20" width="3.40" height="2.60" fill="#262626" rx="0.6"/><rect x="717.35" y="430.90" width="2.20" height="0.80" fill="#8a7a5a" /><rect x="697.50" y="433.30" width="3.40" height="2.60" fill="#262626" rx="0.6"/><rect x="698.10" y="435.00" width="2.20" height="0.80" fill="#8a7a5a" /><rect x="701.35" y="433.30" width="3.40" height="2.60" fill="#262626" rx="0.6"/><rect x="701.95" y="435.00" width="2.20" height="0.80" fill="#8a7a5a" /><rect x="705.20" y="433.30" width="3.40" height="2.60" fill="#262626" rx="0.6"/><rect x="705.80" y="435.00" width="2.20" height="0.80" fill="#8a7a5a" /><rect x="709.05" y="433.30" width="3.40" height="2.60" fill="#262626" rx="0.6"/><rect x="709.65" y="435.00" width="2.20" height="0.80" fill="#8a7a5a" /><rect x="712.90" y="433.30" width="3.40" height="2.60" fill="#262626" rx="0.6"/><rect x="713.50" y="435.00" width="2.20" height="0.80" fill="#8a7a5a" /><rect x="716.75" y="433.30" width="3.40" height="2.60" fill="#262626" rx="0.6"/><rect x="717.35" y="435.00" width="2.20" height="0.80" fill="#8a7a5a" /><rect x="697.50" y="432.00" width="22.50" height="1.10" fill="#efefef" /><rect x="623.50" y="427.40" width="3.00" height="1.30" fill="#555" /><rect x="649.00" y="427.40" width="21.00" height="1.10" fill="#4a4a4a" /><rect x="673.00" y="427.40" width="46.00" height="1.10" fill="#4a4a4a" /><rect x="720.20" y="427.40" width="0.90" height="10.40" fill="#8a8a8a" /><rect x="721.50" y="427.90" width="16.50" height="9.50" fill="#c6c6c6" /><rect x="722.30" y="429.50" width="15.00" height="2.20" fill="#555" /><rect x="722.30" y="433.40" width="15.00" height="2.20" fill="#535353" /><rect x="739.00" y="428.40" width="1.50" height="1.50" fill="#444" /><rect x="616.20" y="438.10" width="133.00" height="0.80" fill="#aebbc9" /><rect x="616.20" y="438.80" width="131.40" height="24.80" fill="#4c4c4c" /><rect x="614.00" y="438.40" width="135.00" height="1.10" fill="#6f7680" /><rect x="617.00" y="439.60" width="2.80" height="1.60" fill="#a9a9a9" /><rect x="617.00" y="461.00" width="2.80" height="1.60" fill="#a9a9a9" /><rect x="744.50" y="439.60" width="2.80" height="1.60" fill="#a5a5a5" /><rect x="744.50" y="461.00" width="2.80" height="1.60" fill="#a5a5a5" /><rect x="623.00" y="439.80" width="14.00" height="1.60" fill="#7c7c7c" /><rect x="626.00" y="439.90" width="9.00" height="1.40" fill="#b4b4b4" /><rect x="690.00" y="439.80" width="25.00" height="1.60" fill="#74742e" /><rect x="715.00" y="439.60" width="22.00" height="2.20" fill="#6a6a34" /><rect x="715.30" y="439.70" width="1.10" height="2.00" fill="#b4b440" /><rect x="717.28" y="439.70" width="1.10" height="2.00" fill="#b4b440" /><rect x="719.26" y="439.70" width="1.10" height="2.00" fill="#b4b440" /><rect x="721.24" y="439.70" width="1.10" height="2.00" fill="#b4b440" /><rect x="723.22" y="439.70" width="1.10" height="2.00" fill="#b4b440" /><rect x="725.20" y="439.70" width="1.10" height="2.00" fill="#b4b440" /><rect x="727.18" y="439.70" width="1.10" height="2.00" fill="#b4b440" /><rect x="729.16" y="439.70" width="1.10" height="2.00" fill="#b4b440" /><rect x="731.14" y="439.70" width="1.10" height="2.00" fill="#b4b440" /><rect x="733.12" y="439.70" width="1.10" height="2.00" fill="#b4b440" /><rect x="735.10" y="439.70" width="1.10" height="2.00" fill="#b4b440" /><rect x="738.00" y="440.00" width="3.00" height="1.30" fill="#5e5e30" /><rect x="622.80" y="443.20" width="26.20" height="1.30" fill="#858585" /><rect x="622.80" y="444.50" width="26.20" height="4.00" fill="#5a5a5a" /><path d="M623.80 444.70h3.6v1.9l-0.7 0.7h-0.5v0.5h-1.2v-0.5h-0.5l-0.7 -0.7z" fill="#050505" /><path d="M628.00 444.70h3.6v1.9l-0.7 0.7h-0.5v0.5h-1.2v-0.5h-0.5l-0.7 -0.7z" fill="#050505" /><path d="M632.20 444.70h3.6v1.9l-0.7 0.7h-0.5v0.5h-1.2v-0.5h-0.5l-0.7 -0.7z" fill="#050505" /><path d="M636.40 444.70h3.6v1.9l-0.7 0.7h-0.5v0.5h-1.2v-0.5h-0.5l-0.7 -0.7z" fill="#050505" /><path d="M640.60 444.70h3.6v1.9l-0.7 0.7h-0.5v0.5h-1.2v-0.5h-0.5l-0.7 -0.7z" fill="#050505" /><path d="M644.80 444.70h3.6v1.9l-0.7 0.7h-0.5v0.5h-1.2v-0.5h-0.5l-0.7 -0.7z" fill="#050505" /><rect x="622.80" y="455.80" width="26.20" height="1.30" fill="#858585" /><rect x="622.80" y="457.10" width="26.20" height="4.00" fill="#5a5a5a" /><path d="M623.80 457.30h3.6v1.9l-0.7 0.7h-0.5v0.5h-1.2v-0.5h-0.5l-0.7 -0.7z" fill="#050505" /><path d="M628.00 457.30h3.6v1.9l-0.7 0.7h-0.5v0.5h-1.2v-0.5h-0.5l-0.7 -0.7z" fill="#050505" /><path d="M632.20 457.30h3.6v1.9l-0.7 0.7h-0.5v0.5h-1.2v-0.5h-0.5l-0.7 -0.7z" fill="#050505" /><path d="M636.40 457.30h3.6v1.9l-0.7 0.7h-0.5v0.5h-1.2v-0.5h-0.5l-0.7 -0.7z" fill="#050505" /><path d="M640.60 457.30h3.6v1.9l-0.7 0.7h-0.5v0.5h-1.2v-0.5h-0.5l-0.7 -0.7z" fill="#050505" /><path d="M644.80 457.30h3.6v1.9l-0.7 0.7h-0.5v0.5h-1.2v-0.5h-0.5l-0.7 -0.7z" fill="#050505" /><rect x="653.30" y="443.20" width="26.20" height="1.30" fill="#858585" /><rect x="653.30" y="444.50" width="26.20" height="4.00" fill="#5a5a5a" /><path d="M654.30 444.70h3.6v1.9l-0.7 0.7h-0.5v0.5h-1.2v-0.5h-0.5l-0.7 -0.7z" fill="#050505" /><path d="M658.50 444.70h3.6v1.9l-0.7 0.7h-0.5v0.5h-1.2v-0.5h-0.5l-0.7 -0.7z" fill="#050505" /><path d="M662.70 444.70h3.6v1.9l-0.7 0.7h-0.5v0.5h-1.2v-0.5h-0.5l-0.7 -0.7z" fill="#050505" /><path d="M666.90 444.70h3.6v1.9l-0.7 0.7h-0.5v0.5h-1.2v-0.5h-0.5l-0.7 -0.7z" fill="#050505" /><path d="M671.10 444.70h3.6v1.9l-0.7 0.7h-0.5v0.5h-1.2v-0.5h-0.5l-0.7 -0.7z" fill="#050505" /><path d="M675.30 444.70h3.6v1.9l-0.7 0.7h-0.5v0.5h-1.2v-0.5h-0.5l-0.7 -0.7z" fill="#050505" /><rect x="653.30" y="455.80" width="26.20" height="1.30" fill="#858585" /><rect x="653.30" y="457.10" width="26.20" height="4.00" fill="#5a5a5a" /><path d="M654.30 457.30h3.6v1.9l-0.7 0.7h-0.5v0.5h-1.2v-0.5h-0.5l-0.7 -0.7z" fill="#050505" /><path d="M658.50 457.30h3.6v1.9l-0.7 0.7h-0.5v0.5h-1.2v-0.5h-0.5l-0.7 -0.7z" fill="#050505" /><path d="M662.70 457.30h3.6v1.9l-0.7 0.7h-0.5v0.5h-1.2v-0.5h-0.5l-0.7 -0.7z" fill="#050505" /><path d="M666.90 457.30h3.6v1.9l-0.7 0.7h-0.5v0.5h-1.2v-0.5h-0.5l-0.7 -0.7z" fill="#050505" /><path d="M671.10 457.30h3.6v1.9l-0.7 0.7h-0.5v0.5h-1.2v-0.5h-0.5l-0.7 -0.7z" fill="#050505" /><path d="M675.30 457.30h3.6v1.9l-0.7 0.7h-0.5v0.5h-1.2v-0.5h-0.5l-0.7 -0.7z" fill="#050505" /><rect x="683.90" y="443.20" width="26.20" height="1.30" fill="#858585" /><rect x="683.90" y="444.50" width="26.20" height="4.00" fill="#5a5a5a" /><path d="M684.90 444.70h3.6v1.9l-0.7 0.7h-0.5v0.5h-1.2v-0.5h-0.5l-0.7 -0.7z" fill="#050505" /><path d="M689.10 444.70h3.6v1.9l-0.7 0.7h-0.5v0.5h-1.2v-0.5h-0.5l-0.7 -0.7z" fill="#050505" /><path d="M693.30 444.70h3.6v1.9l-0.7 0.7h-0.5v0.5h-1.2v-0.5h-0.5l-0.7 -0.7z" fill="#050505" /><path d="M697.50 444.70h3.6v1.9l-0.7 0.7h-0.5v0.5h-1.2v-0.5h-0.5l-0.7 -0.7z" fill="#050505" /><path d="M701.70 444.70h3.6v1.9l-0.7 0.7h-0.5v0.5h-1.2v-0.5h-0.5l-0.7 -0.7z" fill="#050505" /><path d="M705.90 444.70h3.6v1.9l-0.7 0.7h-0.5v0.5h-1.2v-0.5h-0.5l-0.7 -0.7z" fill="#050505" /><rect x="683.90" y="455.80" width="26.20" height="1.30" fill="#858585" /><rect x="683.90" y="457.10" width="26.20" height="4.00" fill="#5a5a5a" /><path d="M684.90 457.30h3.6v1.9l-0.7 0.7h-0.5v0.5h-1.2v-0.5h-0.5l-0.7 -0.7z" fill="#050505" /><path d="M689.10 457.30h3.6v1.9l-0.7 0.7h-0.5v0.5h-1.2v-0.5h-0.5l-0.7 -0.7z" fill="#050505" /><path d="M693.30 457.30h3.6v1.9l-0.7 0.7h-0.5v0.5h-1.2v-0.5h-0.5l-0.7 -0.7z" fill="#050505" /><path d="M697.50 457.30h3.6v1.9l-0.7 0.7h-0.5v0.5h-1.2v-0.5h-0.5l-0.7 -0.7z" fill="#050505" /><path d="M701.70 457.30h3.6v1.9l-0.7 0.7h-0.5v0.5h-1.2v-0.5h-0.5l-0.7 -0.7z" fill="#050505" /><path d="M705.90 457.30h3.6v1.9l-0.7 0.7h-0.5v0.5h-1.2v-0.5h-0.5l-0.7 -0.7z" fill="#050505" /><rect x="714.40" y="443.20" width="26.20" height="1.30" fill="#858585" /><rect x="714.40" y="444.50" width="26.20" height="4.00" fill="#5a5a5a" /><path d="M715.40 444.70h3.6v1.9l-0.7 0.7h-0.5v0.5h-1.2v-0.5h-0.5l-0.7 -0.7z" fill="#050505" /><path d="M719.60 444.70h3.6v1.9l-0.7 0.7h-0.5v0.5h-1.2v-0.5h-0.5l-0.7 -0.7z" fill="#050505" /><path d="M723.80 444.70h3.6v1.9l-0.7 0.7h-0.5v0.5h-1.2v-0.5h-0.5l-0.7 -0.7z" fill="#050505" /><path d="M728.00 444.70h3.6v1.9l-0.7 0.7h-0.5v0.5h-1.2v-0.5h-0.5l-0.7 -0.7z" fill="#050505" /><path d="M732.20 444.70h3.6v1.9l-0.7 0.7h-0.5v0.5h-1.2v-0.5h-0.5l-0.7 -0.7z" fill="#050505" /><path d="M736.40 444.70h3.6v1.9l-0.7 0.7h-0.5v0.5h-1.2v-0.5h-0.5l-0.7 -0.7z" fill="#050505" /><rect x="714.40" y="455.80" width="26.20" height="1.30" fill="#858585" /><rect x="714.40" y="457.10" width="26.20" height="4.00" fill="#5a5a5a" /><path d="M715.40 457.30h3.6v1.9l-0.7 0.7h-0.5v0.5h-1.2v-0.5h-0.5l-0.7 -0.7z" fill="#050505" /><path d="M719.60 457.30h3.6v1.9l-0.7 0.7h-0.5v0.5h-1.2v-0.5h-0.5l-0.7 -0.7z" fill="#050505" /><path d="M723.80 457.30h3.6v1.9l-0.7 0.7h-0.5v0.5h-1.2v-0.5h-0.5l-0.7 -0.7z" fill="#050505" /><path d="M728.00 457.30h3.6v1.9l-0.7 0.7h-0.5v0.5h-1.2v-0.5h-0.5l-0.7 -0.7z" fill="#050505" /><path d="M732.20 457.30h3.6v1.9l-0.7 0.7h-0.5v0.5h-1.2v-0.5h-0.5l-0.7 -0.7z" fill="#050505" /><path d="M736.40 457.30h3.6v1.9l-0.7 0.7h-0.5v0.5h-1.2v-0.5h-0.5l-0.7 -0.7z" fill="#050505" /><rect x="616.20" y="463.60" width="131.40" height="24.80" fill="#4c4c4c" /><rect x="614.00" y="463.20" width="135.00" height="1.10" fill="#6f7680" /><rect x="617.00" y="464.40" width="2.80" height="1.60" fill="#a9a9a9" /><rect x="617.00" y="485.80" width="2.80" height="1.60" fill="#a9a9a9" /><rect x="744.50" y="464.40" width="2.80" height="1.60" fill="#a5a5a5" /><rect x="744.50" y="485.80" width="2.80" height="1.60" fill="#a5a5a5" /><rect x="623.00" y="464.60" width="14.00" height="1.60" fill="#7c7c7c" /><rect x="626.00" y="464.70" width="9.00" height="1.40" fill="#b4b4b4" /><rect x="690.00" y="464.60" width="25.00" height="1.60" fill="#74742e" /><rect x="715.00" y="464.40" width="22.00" height="2.20" fill="#6a6a34" /><rect x="715.30" y="464.50" width="1.10" height="2.00" fill="#b4b440" /><rect x="717.28" y="464.50" width="1.10" height="2.00" fill="#b4b440" /><rect x="719.26" y="464.50" width="1.10" height="2.00" fill="#b4b440" /><rect x="721.24" y="464.50" width="1.10" height="2.00" fill="#b4b440" /><rect x="723.22" y="464.50" width="1.10" height="2.00" fill="#b4b440" /><rect x="725.20" y="464.50" width="1.10" height="2.00" fill="#b4b440" /><rect x="727.18" y="464.50" width="1.10" height="2.00" fill="#b4b440" /><rect x="729.16" y="464.50" width="1.10" height="2.00" fill="#b4b440" /><rect x="731.14" y="464.50" width="1.10" height="2.00" fill="#b4b440" /><rect x="733.12" y="464.50" width="1.10" height="2.00" fill="#b4b440" /><rect x="735.10" y="464.50" width="1.10" height="2.00" fill="#b4b440" /><rect x="738.00" y="464.80" width="3.00" height="1.30" fill="#5e5e30" /><rect x="622.80" y="468.00" width="26.20" height="1.30" fill="#858585" /><rect x="622.80" y="469.30" width="26.20" height="4.00" fill="#5a5a5a" /><path d="M623.80 469.50h3.6v1.9l-0.7 0.7h-0.5v0.5h-1.2v-0.5h-0.5l-0.7 -0.7z" fill="#050505" /><path d="M628.00 469.50h3.6v1.9l-0.7 0.7h-0.5v0.5h-1.2v-0.5h-0.5l-0.7 -0.7z" fill="#050505" /><path d="M632.20 469.50h3.6v1.9l-0.7 0.7h-0.5v0.5h-1.2v-0.5h-0.5l-0.7 -0.7z" fill="#050505" /><path d="M636.40 469.50h3.6v1.9l-0.7 0.7h-0.5v0.5h-1.2v-0.5h-0.5l-0.7 -0.7z" fill="#050505" /><path d="M640.60 469.50h3.6v1.9l-0.7 0.7h-0.5v0.5h-1.2v-0.5h-0.5l-0.7 -0.7z" fill="#050505" /><path d="M644.80 469.50h3.6v1.9l-0.7 0.7h-0.5v0.5h-1.2v-0.5h-0.5l-0.7 -0.7z" fill="#050505" /><rect x="622.80" y="480.60" width="26.20" height="1.30" fill="#858585" /><rect x="622.80" y="481.90" width="26.20" height="4.00" fill="#5a5a5a" /><path d="M623.80 482.10h3.6v1.9l-0.7 0.7h-0.5v0.5h-1.2v-0.5h-0.5l-0.7 -0.7z" fill="#050505" /><path d="M628.00 482.10h3.6v1.9l-0.7 0.7h-0.5v0.5h-1.2v-0.5h-0.5l-0.7 -0.7z" fill="#050505" /><path d="M632.20 482.10h3.6v1.9l-0.7 0.7h-0.5v0.5h-1.2v-0.5h-0.5l-0.7 -0.7z" fill="#050505" /><path d="M636.40 482.10h3.6v1.9l-0.7 0.7h-0.5v0.5h-1.2v-0.5h-0.5l-0.7 -0.7z" fill="#050505" /><path d="M640.60 482.10h3.6v1.9l-0.7 0.7h-0.5v0.5h-1.2v-0.5h-0.5l-0.7 -0.7z" fill="#050505" /><path d="M644.80 482.10h3.6v1.9l-0.7 0.7h-0.5v0.5h-1.2v-0.5h-0.5l-0.7 -0.7z" fill="#050505" /><rect x="653.30" y="468.00" width="26.20" height="1.30" fill="#858585" /><rect x="653.30" y="469.30" width="26.20" height="4.00" fill="#5a5a5a" /><path d="M654.30 469.50h3.6v1.9l-0.7 0.7h-0.5v0.5h-1.2v-0.5h-0.5l-0.7 -0.7z" fill="#050505" /><path d="M658.50 469.50h3.6v1.9l-0.7 0.7h-0.5v0.5h-1.2v-0.5h-0.5l-0.7 -0.7z" fill="#050505" /><path d="M662.70 469.50h3.6v1.9l-0.7 0.7h-0.5v0.5h-1.2v-0.5h-0.5l-0.7 -0.7z" fill="#050505" /><path d="M666.90 469.50h3.6v1.9l-0.7 0.7h-0.5v0.5h-1.2v-0.5h-0.5l-0.7 -0.7z" fill="#050505" /><path d="M671.10 469.50h3.6v1.9l-0.7 0.7h-0.5v0.5h-1.2v-0.5h-0.5l-0.7 -0.7z" fill="#050505" /><path d="M675.30 469.50h3.6v1.9l-0.7 0.7h-0.5v0.5h-1.2v-0.5h-0.5l-0.7 -0.7z" fill="#050505" /><rect x="653.30" y="480.60" width="26.20" height="1.30" fill="#858585" /><rect x="653.30" y="481.90" width="26.20" height="4.00" fill="#5a5a5a" /><path d="M654.30 482.10h3.6v1.9l-0.7 0.7h-0.5v0.5h-1.2v-0.5h-0.5l-0.7 -0.7z" fill="#050505" /><path d="M658.50 482.10h3.6v1.9l-0.7 0.7h-0.5v0.5h-1.2v-0.5h-0.5l-0.7 -0.7z" fill="#050505" /><path d="M662.70 482.10h3.6v1.9l-0.7 0.7h-0.5v0.5h-1.2v-0.5h-0.5l-0.7 -0.7z" fill="#050505" /><path d="M666.90 482.10h3.6v1.9l-0.7 0.7h-0.5v0.5h-1.2v-0.5h-0.5l-0.7 -0.7z" fill="#050505" /><path d="M671.10 482.10h3.6v1.9l-0.7 0.7h-0.5v0.5h-1.2v-0.5h-0.5l-0.7 -0.7z" fill="#050505" /><path d="M675.30 482.10h3.6v1.9l-0.7 0.7h-0.5v0.5h-1.2v-0.5h-0.5l-0.7 -0.7z" fill="#050505" /><rect x="683.90" y="468.00" width="26.20" height="1.30" fill="#858585" /><rect x="683.90" y="469.30" width="26.20" height="4.00" fill="#5a5a5a" /><path d="M684.90 469.50h3.6v1.9l-0.7 0.7h-0.5v0.5h-1.2v-0.5h-0.5l-0.7 -0.7z" fill="#050505" /><path d="M689.10 469.50h3.6v1.9l-0.7 0.7h-0.5v0.5h-1.2v-0.5h-0.5l-0.7 -0.7z" fill="#050505" /><path d="M693.30 469.50h3.6v1.9l-0.7 0.7h-0.5v0.5h-1.2v-0.5h-0.5l-0.7 -0.7z" fill="#050505" /><path d="M697.50 469.50h3.6v1.9l-0.7 0.7h-0.5v0.5h-1.2v-0.5h-0.5l-0.7 -0.7z" fill="#050505" /><path d="M701.70 469.50h3.6v1.9l-0.7 0.7h-0.5v0.5h-1.2v-0.5h-0.5l-0.7 -0.7z" fill="#050505" /><path d="M705.90 469.50h3.6v1.9l-0.7 0.7h-0.5v0.5h-1.2v-0.5h-0.5l-0.7 -0.7z" fill="#050505" /><rect x="683.90" y="480.60" width="26.20" height="1.30" fill="#858585" /><rect x="683.90" y="481.90" width="26.20" height="4.00" fill="#5a5a5a" /><path d="M684.90 482.10h3.6v1.9l-0.7 0.7h-0.5v0.5h-1.2v-0.5h-0.5l-0.7 -0.7z" fill="#050505" /><path d="M689.10 482.10h3.6v1.9l-0.7 0.7h-0.5v0.5h-1.2v-0.5h-0.5l-0.7 -0.7z" fill="#050505" /><path d="M693.30 482.10h3.6v1.9l-0.7 0.7h-0.5v0.5h-1.2v-0.5h-0.5l-0.7 -0.7z" fill="#050505" /><path d="M697.50 482.10h3.6v1.9l-0.7 0.7h-0.5v0.5h-1.2v-0.5h-0.5l-0.7 -0.7z" fill="#050505" /><path d="M701.70 482.10h3.6v1.9l-0.7 0.7h-0.5v0.5h-1.2v-0.5h-0.5l-0.7 -0.7z" fill="#050505" /><path d="M705.90 482.10h3.6v1.9l-0.7 0.7h-0.5v0.5h-1.2v-0.5h-0.5l-0.7 -0.7z" fill="#050505" /><rect x="714.40" y="468.00" width="26.20" height="1.30" fill="#858585" /><rect x="714.40" y="469.30" width="26.20" height="4.00" fill="#5a5a5a" /><path d="M715.40 469.50h3.6v1.9l-0.7 0.7h-0.5v0.5h-1.2v-0.5h-0.5l-0.7 -0.7z" fill="#050505" /><path d="M719.60 469.50h3.6v1.9l-0.7 0.7h-0.5v0.5h-1.2v-0.5h-0.5l-0.7 -0.7z" fill="#050505" /><path d="M723.80 469.50h3.6v1.9l-0.7 0.7h-0.5v0.5h-1.2v-0.5h-0.5l-0.7 -0.7z" fill="#050505" /><path d="M728.00 469.50h3.6v1.9l-0.7 0.7h-0.5v0.5h-1.2v-0.5h-0.5l-0.7 -0.7z" fill="#050505" /><path d="M732.20 469.50h3.6v1.9l-0.7 0.7h-0.5v0.5h-1.2v-0.5h-0.5l-0.7 -0.7z" fill="#050505" /><path d="M736.40 469.50h3.6v1.9l-0.7 0.7h-0.5v0.5h-1.2v-0.5h-0.5l-0.7 -0.7z" fill="#050505" /><rect x="714.40" y="480.60" width="26.20" height="1.30" fill="#858585" /><rect x="714.40" y="481.90" width="26.20" height="4.00" fill="#5a5a5a" /><path d="M715.40 482.10h3.6v1.9l-0.7 0.7h-0.5v0.5h-1.2v-0.5h-0.5l-0.7 -0.7z" fill="#050505" /><path d="M719.60 482.10h3.6v1.9l-0.7 0.7h-0.5v0.5h-1.2v-0.5h-0.5l-0.7 -0.7z" fill="#050505" /><path d="M723.80 482.10h3.6v1.9l-0.7 0.7h-0.5v0.5h-1.2v-0.5h-0.5l-0.7 -0.7z" fill="#050505" /><path d="M728.00 482.10h3.6v1.9l-0.7 0.7h-0.5v0.5h-1.2v-0.5h-0.5l-0.7 -0.7z" fill="#050505" /><path d="M732.20 482.10h3.6v1.9l-0.7 0.7h-0.5v0.5h-1.2v-0.5h-0.5l-0.7 -0.7z" fill="#050505" /><path d="M736.40 482.10h3.6v1.9l-0.7 0.7h-0.5v0.5h-1.2v-0.5h-0.5l-0.7 -0.7z" fill="#050505" /><rect x="616.20" y="488.40" width="133.00" height="12.40" fill="#cdcdcd" /><rect x="616.20" y="488.40" width="5.60" height="12.40" fill="#dadada" /><rect x="742.00" y="488.40" width="7.20" height="12.40" fill="#d8d8d8" /><rect x="617.50" y="490.40" width="2.50" height="2.00" fill="#f2f2f2" /><rect x="617.50" y="495.90" width="2.50" height="2.00" fill="#f2f2f2" /><rect x="744.00" y="490.40" width="2.50" height="2.00" fill="#eeeeee" /><rect x="744.00" y="495.90" width="2.50" height="2.00" fill="#eeeeee" /><rect x="623.20" y="489.40" width="23.40" height="10.20" fill="#d4d4d4" /><rect x="623.70" y="491.20" width="3.40" height="2.60" fill="#262626" rx="0.6"/><rect x="624.30" y="492.90" width="2.20" height="0.80" fill="#8a7a5a" /><rect x="627.55" y="491.20" width="3.40" height="2.60" fill="#262626" rx="0.6"/><rect x="628.15" y="492.90" width="2.20" height="0.80" fill="#8a7a5a" /><rect x="631.40" y="491.20" width="3.40" height="2.60" fill="#262626" rx="0.6"/><rect x="632.00" y="492.90" width="2.20" height="0.80" fill="#8a7a5a" /><rect x="635.25" y="491.20" width="3.40" height="2.60" fill="#262626" rx="0.6"/><rect x="635.85" y="492.90" width="2.20" height="0.80" fill="#8a7a5a" /><rect x="639.10" y="491.20" width="3.40" height="2.60" fill="#262626" rx="0.6"/><rect x="639.70" y="492.90" width="2.20" height="0.80" fill="#8a7a5a" /><rect x="642.95" y="491.20" width="3.40" height="2.60" fill="#262626" rx="0.6"/><rect x="643.55" y="492.90" width="2.20" height="0.80" fill="#8a7a5a" /><rect x="623.70" y="495.30" width="3.40" height="2.60" fill="#262626" rx="0.6"/><rect x="624.30" y="497.00" width="2.20" height="0.80" fill="#8a7a5a" /><rect x="627.55" y="495.30" width="3.40" height="2.60" fill="#262626" rx="0.6"/><rect x="628.15" y="497.00" width="2.20" height="0.80" fill="#8a7a5a" /><rect x="631.40" y="495.30" width="3.40" height="2.60" fill="#262626" rx="0.6"/><rect x="632.00" y="497.00" width="2.20" height="0.80" fill="#8a7a5a" /><rect x="635.25" y="495.30" width="3.40" height="2.60" fill="#262626" rx="0.6"/><rect x="635.85" y="497.00" width="2.20" height="0.80" fill="#8a7a5a" /><rect x="639.10" y="495.30" width="3.40" height="2.60" fill="#262626" rx="0.6"/><rect x="639.70" y="497.00" width="2.20" height="0.80" fill="#8a7a5a" /><rect x="642.95" y="495.30" width="3.40" height="2.60" fill="#262626" rx="0.6"/><rect x="643.55" y="497.00" width="2.20" height="0.80" fill="#8a7a5a" /><rect x="623.70" y="494.00" width="22.50" height="1.10" fill="#efefef" /><rect x="647.80" y="489.40" width="23.40" height="10.20" fill="#d4d4d4" /><rect x="648.30" y="491.20" width="3.40" height="2.60" fill="#262626" rx="0.6"/><rect x="648.90" y="492.90" width="2.20" height="0.80" fill="#8a7a5a" /><rect x="652.15" y="491.20" width="3.40" height="2.60" fill="#262626" rx="0.6"/><rect x="652.75" y="492.90" width="2.20" height="0.80" fill="#8a7a5a" /><rect x="656.00" y="491.20" width="3.40" height="2.60" fill="#262626" rx="0.6"/><rect x="656.60" y="492.90" width="2.20" height="0.80" fill="#8a7a5a" /><rect x="659.85" y="491.20" width="3.40" height="2.60" fill="#262626" rx="0.6"/><rect x="660.45" y="492.90" width="2.20" height="0.80" fill="#8a7a5a" /><rect x="663.70" y="491.20" width="3.40" height="2.60" fill="#262626" rx="0.6"/><rect x="664.30" y="492.90" width="2.20" height="0.80" fill="#8a7a5a" /><rect x="667.55" y="491.20" width="3.40" height="2.60" fill="#262626" rx="0.6"/><rect x="668.15" y="492.90" width="2.20" height="0.80" fill="#8a7a5a" /><rect x="648.30" y="495.30" width="3.40" height="2.60" fill="#262626" rx="0.6"/><rect x="648.90" y="497.00" width="2.20" height="0.80" fill="#8a7a5a" /><rect x="652.15" y="495.30" width="3.40" height="2.60" fill="#262626" rx="0.6"/><rect x="652.75" y="497.00" width="2.20" height="0.80" fill="#8a7a5a" /><rect x="656.00" y="495.30" width="3.40" height="2.60" fill="#262626" rx="0.6"/><rect x="656.60" y="497.00" width="2.20" height="0.80" fill="#8a7a5a" /><rect x="659.85" y="495.30" width="3.40" height="2.60" fill="#262626" rx="0.6"/><rect x="660.45" y="497.00" width="2.20" height="0.80" fill="#8a7a5a" /><rect x="663.70" y="495.30" width="3.40" height="2.60" fill="#262626" rx="0.6"/><rect x="664.30" y="497.00" width="2.20" height="0.80" fill="#8a7a5a" /><rect x="667.55" y="495.30" width="3.40" height="2.60" fill="#262626" rx="0.6"/><rect x="668.15" y="497.00" width="2.20" height="0.80" fill="#8a7a5a" /><rect x="648.30" y="494.00" width="22.50" height="1.10" fill="#efefef" /><rect x="672.20" y="489.40" width="23.40" height="10.20" fill="#d4d4d4" /><rect x="672.70" y="491.20" width="3.40" height="2.60" fill="#262626" rx="0.6"/><rect x="673.30" y="492.90" width="2.20" height="0.80" fill="#8a7a5a" /><rect x="676.55" y="491.20" width="3.40" height="2.60" fill="#262626" rx="0.6"/><rect x="677.15" y="492.90" width="2.20" height="0.80" fill="#8a7a5a" /><rect x="680.40" y="491.20" width="3.40" height="2.60" fill="#262626" rx="0.6"/><rect x="681.00" y="492.90" width="2.20" height="0.80" fill="#8a7a5a" /><rect x="684.25" y="491.20" width="3.40" height="2.60" fill="#262626" rx="0.6"/><rect x="684.85" y="492.90" width="2.20" height="0.80" fill="#8a7a5a" /><rect x="688.10" y="491.20" width="3.40" height="2.60" fill="#262626" rx="0.6"/><rect x="688.70" y="492.90" width="2.20" height="0.80" fill="#8a7a5a" /><rect x="691.95" y="491.20" width="3.40" height="2.60" fill="#262626" rx="0.6"/><rect x="692.55" y="492.90" width="2.20" height="0.80" fill="#8a7a5a" /><rect x="672.70" y="495.30" width="3.40" height="2.60" fill="#262626" rx="0.6"/><rect x="673.30" y="497.00" width="2.20" height="0.80" fill="#8a7a5a" /><rect x="676.55" y="495.30" width="3.40" height="2.60" fill="#262626" rx="0.6"/><rect x="677.15" y="497.00" width="2.20" height="0.80" fill="#8a7a5a" /><rect x="680.40" y="495.30" width="3.40" height="2.60" fill="#262626" rx="0.6"/><rect x="681.00" y="497.00" width="2.20" height="0.80" fill="#8a7a5a" /><rect x="684.25" y="495.30" width="3.40" height="2.60" fill="#262626" rx="0.6"/><rect x="684.85" y="497.00" width="2.20" height="0.80" fill="#8a7a5a" /><rect x="688.10" y="495.30" width="3.40" height="2.60" fill="#262626" rx="0.6"/><rect x="688.70" y="497.00" width="2.20" height="0.80" fill="#8a7a5a" /><rect x="691.95" y="495.30" width="3.40" height="2.60" fill="#262626" rx="0.6"/><rect x="692.55" y="497.00" width="2.20" height="0.80" fill="#8a7a5a" /><rect x="672.70" y="494.00" width="22.50" height="1.10" fill="#efefef" /><rect x="697.00" y="489.40" width="23.40" height="10.20" fill="#d4d4d4" /><rect x="697.50" y="491.20" width="3.40" height="2.60" fill="#262626" rx="0.6"/><rect x="698.10" y="492.90" width="2.20" height="0.80" fill="#8a7a5a" /><rect x="701.35" y="491.20" width="3.40" height="2.60" fill="#262626" rx="0.6"/><rect x="701.95" y="492.90" width="2.20" height="0.80" fill="#8a7a5a" /><rect x="705.20" y="491.20" width="3.40" height="2.60" fill="#262626" rx="0.6"/><rect x="705.80" y="492.90" width="2.20" height="0.80" fill="#8a7a5a" /><rect x="709.05" y="491.20" width="3.40" height="2.60" fill="#262626" rx="0.6"/><rect x="709.65" y="492.90" width="2.20" height="0.80" fill="#8a7a5a" /><rect x="712.90" y="491.20" width="3.40" height="2.60" fill="#262626" rx="0.6"/><rect x="713.50" y="492.90" width="2.20" height="0.80" fill="#8a7a5a" /><rect x="716.75" y="491.20" width="3.40" height="2.60" fill="#262626" rx="0.6"/><rect x="717.35" y="492.90" width="2.20" height="0.80" fill="#8a7a5a" /><rect x="697.50" y="495.30" width="3.40" height="2.60" fill="#262626" rx="0.6"/><rect x="698.10" y="497.00" width="2.20" height="0.80" fill="#8a7a5a" /><rect x="701.35" y="495.30" width="3.40" height="2.60" fill="#262626" rx="0.6"/><rect x="701.95" y="497.00" width="2.20" height="0.80" fill="#8a7a5a" /><rect x="705.20" y="495.30" width="3.40" height="2.60" fill="#262626" rx="0.6"/><rect x="705.80" y="497.00" width="2.20" height="0.80" fill="#8a7a5a" /><rect x="709.05" y="495.30" width="3.40" height="2.60" fill="#262626" rx="0.6"/><rect x="709.65" y="497.00" width="2.20" height="0.80" fill="#8a7a5a" /><rect x="712.90" y="495.30" width="3.40" height="2.60" fill="#262626" rx="0.6"/><rect x="713.50" y="497.00" width="2.20" height="0.80" fill="#8a7a5a" /><rect x="716.75" y="495.30" width="3.40" height="2.60" fill="#262626" rx="0.6"/><rect x="717.35" y="497.00" width="2.20" height="0.80" fill="#8a7a5a" /><rect x="697.50" y="494.00" width="22.50" height="1.10" fill="#efefef" /><rect x="623.50" y="489.40" width="3.00" height="1.30" fill="#555" /><rect x="649.00" y="489.40" width="21.00" height="1.10" fill="#4a4a4a" /><rect x="673.00" y="489.40" width="46.00" height="1.10" fill="#4a4a4a" /><rect x="720.20" y="489.40" width="0.90" height="10.40" fill="#8a8a8a" /><rect x="721.50" y="489.90" width="16.50" height="9.50" fill="#c6c6c6" /><rect x="722.30" y="491.50" width="15.00" height="2.20" fill="#555" /><rect x="722.30" y="495.40" width="15.00" height="2.20" fill="#535353" /><rect x="739.00" y="490.40" width="1.50" height="1.50" fill="#444" /><rect x="616.20" y="500.10" width="133.00" height="0.80" fill="#aebbc9" /><path d="M741 500.20L749.2 492.00V500.20Z" fill="#06066e" /><rect x="616.20" y="500.80" width="133.00" height="12.40" fill="#cdcdcd" /><rect x="616.20" y="500.80" width="5.60" height="12.40" fill="#dadada" /><rect x="742.00" y="500.80" width="7.20" height="12.40" fill="#d8d8d8" /><rect x="617.50" y="502.80" width="2.50" height="2.00" fill="#f2f2f2" /><rect x="617.50" y="508.30" width="2.50" height="2.00" fill="#f2f2f2" /><rect x="744.00" y="502.80" width="2.50" height="2.00" fill="#eeeeee" /><rect x="744.00" y="508.30" width="2.50" height="2.00" fill="#eeeeee" /><rect x="623.20" y="501.80" width="23.40" height="10.20" fill="#d4d4d4" /><rect x="623.70" y="503.60" width="3.40" height="2.60" fill="#262626" rx="0.6"/><rect x="624.30" y="505.30" width="2.20" height="0.80" fill="#8a7a5a" /><rect x="627.55" y="503.60" width="3.40" height="2.60" fill="#262626" rx="0.6"/><rect x="628.15" y="505.30" width="2.20" height="0.80" fill="#8a7a5a" /><rect x="631.40" y="503.60" width="3.40" height="2.60" fill="#262626" rx="0.6"/><rect x="632.00" y="505.30" width="2.20" height="0.80" fill="#8a7a5a" /><rect x="635.25" y="503.60" width="3.40" height="2.60" fill="#262626" rx="0.6"/><rect x="635.85" y="505.30" width="2.20" height="0.80" fill="#8a7a5a" /><rect x="639.10" y="503.60" width="3.40" height="2.60" fill="#262626" rx="0.6"/><rect x="639.70" y="505.30" width="2.20" height="0.80" fill="#8a7a5a" /><rect x="642.95" y="503.60" width="3.40" height="2.60" fill="#262626" rx="0.6"/><rect x="643.55" y="505.30" width="2.20" height="0.80" fill="#8a7a5a" /><rect x="623.70" y="507.70" width="3.40" height="2.60" fill="#262626" rx="0.6"/><rect x="624.30" y="509.40" width="2.20" height="0.80" fill="#8a7a5a" /><rect x="627.55" y="507.70" width="3.40" height="2.60" fill="#262626" rx="0.6"/><rect x="628.15" y="509.40" width="2.20" height="0.80" fill="#8a7a5a" /><rect x="631.40" y="507.70" width="3.40" height="2.60" fill="#262626" rx="0.6"/><rect x="632.00" y="509.40" width="2.20" height="0.80" fill="#8a7a5a" /><rect x="635.25" y="507.70" width="3.40" height="2.60" fill="#262626" rx="0.6"/><rect x="635.85" y="509.40" width="2.20" height="0.80" fill="#8a7a5a" /><rect x="639.10" y="507.70" width="3.40" height="2.60" fill="#262626" rx="0.6"/><rect x="639.70" y="509.40" width="2.20" height="0.80" fill="#8a7a5a" /><rect x="642.95" y="507.70" width="3.40" height="2.60" fill="#262626" rx="0.6"/><rect x="643.55" y="509.40" width="2.20" height="0.80" fill="#8a7a5a" /><rect x="623.70" y="506.40" width="22.50" height="1.10" fill="#efefef" /><rect x="647.80" y="501.80" width="23.40" height="10.20" fill="#d4d4d4" /><rect x="648.30" y="503.60" width="3.40" height="2.60" fill="#262626" rx="0.6"/><rect x="648.90" y="505.30" width="2.20" height="0.80" fill="#8a7a5a" /><rect x="652.15" y="503.60" width="3.40" height="2.60" fill="#262626" rx="0.6"/><rect x="652.75" y="505.30" width="2.20" height="0.80" fill="#8a7a5a" /><rect x="656.00" y="503.60" width="3.40" height="2.60" fill="#262626" rx="0.6"/><rect x="656.60" y="505.30" width="2.20" height="0.80" fill="#8a7a5a" /><rect x="659.85" y="503.60" width="3.40" height="2.60" fill="#262626" rx="0.6"/><rect x="660.45" y="505.30" width="2.20" height="0.80" fill="#8a7a5a" /><rect x="663.70" y="503.60" width="3.40" height="2.60" fill="#262626" rx="0.6"/><rect x="664.30" y="505.30" width="2.20" height="0.80" fill="#8a7a5a" /><rect x="667.55" y="503.60" width="3.40" height="2.60" fill="#262626" rx="0.6"/><rect x="668.15" y="505.30" width="2.20" height="0.80" fill="#8a7a5a" /><rect x="648.30" y="507.70" width="3.40" height="2.60" fill="#262626" rx="0.6"/><rect x="648.90" y="509.40" width="2.20" height="0.80" fill="#8a7a5a" /><rect x="652.15" y="507.70" width="3.40" height="2.60" fill="#262626" rx="0.6"/><rect x="652.75" y="509.40" width="2.20" height="0.80" fill="#8a7a5a" /><rect x="656.00" y="507.70" width="3.40" height="2.60" fill="#262626" rx="0.6"/><rect x="656.60" y="509.40" width="2.20" height="0.80" fill="#8a7a5a" /><rect x="659.85" y="507.70" width="3.40" height="2.60" fill="#262626" rx="0.6"/><rect x="660.45" y="509.40" width="2.20" height="0.80" fill="#8a7a5a" /><rect x="663.70" y="507.70" width="3.40" height="2.60" fill="#262626" rx="0.6"/><rect x="664.30" y="509.40" width="2.20" height="0.80" fill="#8a7a5a" /><rect x="667.55" y="507.70" width="3.40" height="2.60" fill="#262626" rx="0.6"/><rect x="668.15" y="509.40" width="2.20" height="0.80" fill="#8a7a5a" /><rect x="648.30" y="506.40" width="22.50" height="1.10" fill="#efefef" /><rect x="672.20" y="501.80" width="23.40" height="10.20" fill="#d4d4d4" /><rect x="672.70" y="503.60" width="3.40" height="2.60" fill="#262626" rx="0.6"/><rect x="673.30" y="505.30" width="2.20" height="0.80" fill="#8a7a5a" /><rect x="676.55" y="503.60" width="3.40" height="2.60" fill="#262626" rx="0.6"/><rect x="677.15" y="505.30" width="2.20" height="0.80" fill="#8a7a5a" /><rect x="680.40" y="503.60" width="3.40" height="2.60" fill="#262626" rx="0.6"/><rect x="681.00" y="505.30" width="2.20" height="0.80" fill="#8a7a5a" /><rect x="684.25" y="503.60" width="3.40" height="2.60" fill="#262626" rx="0.6"/><rect x="684.85" y="505.30" width="2.20" height="0.80" fill="#8a7a5a" /><rect x="688.10" y="503.60" width="3.40" height="2.60" fill="#262626" rx="0.6"/><rect x="688.70" y="505.30" width="2.20" height="0.80" fill="#8a7a5a" /><rect x="691.95" y="503.60" width="3.40" height="2.60" fill="#262626" rx="0.6"/><rect x="692.55" y="505.30" width="2.20" height="0.80" fill="#8a7a5a" /><rect x="672.70" y="507.70" width="3.40" height="2.60" fill="#262626" rx="0.6"/><rect x="673.30" y="509.40" width="2.20" height="0.80" fill="#8a7a5a" /><rect x="676.55" y="507.70" width="3.40" height="2.60" fill="#262626" rx="0.6"/><rect x="677.15" y="509.40" width="2.20" height="0.80" fill="#8a7a5a" /><rect x="680.40" y="507.70" width="3.40" height="2.60" fill="#262626" rx="0.6"/><rect x="681.00" y="509.40" width="2.20" height="0.80" fill="#8a7a5a" /><rect x="684.25" y="507.70" width="3.40" height="2.60" fill="#262626" rx="0.6"/><rect x="684.85" y="509.40" width="2.20" height="0.80" fill="#8a7a5a" /><rect x="688.10" y="507.70" width="3.40" height="2.60" fill="#262626" rx="0.6"/><rect x="688.70" y="509.40" width="2.20" height="0.80" fill="#8a7a5a" /><rect x="691.95" y="507.70" width="3.40" height="2.60" fill="#262626" rx="0.6"/><rect x="692.55" y="509.40" width="2.20" height="0.80" fill="#8a7a5a" /><rect x="672.70" y="506.40" width="22.50" height="1.10" fill="#efefef" /><rect x="697.00" y="501.80" width="23.40" height="10.20" fill="#d4d4d4" /><rect x="697.50" y="503.60" width="3.40" height="2.60" fill="#262626" rx="0.6"/><rect x="698.10" y="505.30" width="2.20" height="0.80" fill="#8a7a5a" /><rect x="701.35" y="503.60" width="3.40" height="2.60" fill="#262626" rx="0.6"/><rect x="701.95" y="505.30" width="2.20" height="0.80" fill="#8a7a5a" /><rect x="705.20" y="503.60" width="3.40" height="2.60" fill="#262626" rx="0.6"/><rect x="705.80" y="505.30" width="2.20" height="0.80" fill="#8a7a5a" /><rect x="709.05" y="503.60" width="3.40" height="2.60" fill="#262626" rx="0.6"/><rect x="709.65" y="505.30" width="2.20" height="0.80" fill="#8a7a5a" /><rect x="712.90" y="503.60" width="3.40" height="2.60" fill="#262626" rx="0.6"/><rect x="713.50" y="505.30" width="2.20" height="0.80" fill="#8a7a5a" /><rect x="716.75" y="503.60" width="3.40" height="2.60" fill="#262626" rx="0.6"/><rect x="717.35" y="505.30" width="2.20" height="0.80" fill="#8a7a5a" /><rect x="697.50" y="507.70" width="3.40" height="2.60" fill="#262626" rx="0.6"/><rect x="698.10" y="509.40" width="2.20" height="0.80" fill="#8a7a5a" /><rect x="701.35" y="507.70" width="3.40" height="2.60" fill="#262626" rx="0.6"/><rect x="701.95" y="509.40" width="2.20" height="0.80" fill="#8a7a5a" /><rect x="705.20" y="507.70" width="3.40" height="2.60" fill="#262626" rx="0.6"/><rect x="705.80" y="509.40" width="2.20" height="0.80" fill="#8a7a5a" /><rect x="709.05" y="507.70" width="3.40" height="2.60" fill="#262626" rx="0.6"/><rect x="709.65" y="509.40" width="2.20" height="0.80" fill="#8a7a5a" /><rect x="712.90" y="507.70" width="3.40" height="2.60" fill="#262626" rx="0.6"/><rect x="713.50" y="509.40" width="2.20" height="0.80" fill="#8a7a5a" /><rect x="716.75" y="507.70" width="3.40" height="2.60" fill="#262626" rx="0.6"/><rect x="717.35" y="509.40" width="2.20" height="0.80" fill="#8a7a5a" /><rect x="697.50" y="506.40" width="22.50" height="1.10" fill="#efefef" /><rect x="623.50" y="501.80" width="3.00" height="1.30" fill="#555" /><rect x="649.00" y="501.80" width="21.00" height="1.10" fill="#4a4a4a" /><rect x="673.00" y="501.80" width="46.00" height="1.10" fill="#4a4a4a" /><rect x="720.20" y="501.80" width="0.90" height="10.40" fill="#8a8a8a" /><rect x="721.50" y="502.30" width="16.50" height="9.50" fill="#c6c6c6" /><rect x="722.30" y="503.90" width="15.00" height="2.20" fill="#555" /><rect x="722.30" y="507.80" width="15.00" height="2.20" fill="#535353" /><rect x="739.00" y="502.80" width="1.50" height="1.50" fill="#444" /><rect x="616.20" y="512.50" width="133.00" height="0.80" fill="#aebbc9" /><rect x="616.20" y="513.20" width="131.40" height="12.40" fill="#5a5a5a" /><rect x="620.80" y="514.20" width="125.50" height="10.80" fill="#dfe8f5" /><rect x="617.00" y="514.70" width="2.80" height="2.20" fill="#e8eef6" /><rect x="617.00" y="518.70" width="2.80" height="2.20" fill="#e8eef6" /><rect x="617.00" y="522.20" width="2.80" height="2.20" fill="#e8eef6" /><rect x="616.20" y="525.60" width="131.40" height="24.80" fill="#5e5e5e" /><rect x="617.00" y="526.60" width="2.80" height="2.00" fill="#dfe6f0" /><rect x="744.50" y="526.60" width="2.80" height="2.00" fill="#d8dde6" /><rect x="617.00" y="530.60" width="2.80" height="2.00" fill="#dfe6f0" /><rect x="744.50" y="530.60" width="2.80" height="2.00" fill="#d8dde6" /><rect x="617.00" y="534.60" width="2.80" height="2.00" fill="#dfe6f0" /><rect x="744.50" y="534.60" width="2.80" height="2.00" fill="#d8dde6" /><rect x="617.00" y="538.60" width="2.80" height="2.00" fill="#dfe6f0" /><rect x="744.50" y="538.60" width="2.80" height="2.00" fill="#d8dde6" /><rect x="617.00" y="542.60" width="2.80" height="2.00" fill="#dfe6f0" /><rect x="744.50" y="542.60" width="2.80" height="2.00" fill="#d8dde6" /><rect x="617.00" y="546.60" width="2.80" height="2.00" fill="#dfe6f0" /><rect x="744.50" y="546.60" width="2.80" height="2.00" fill="#d8dde6" /><rect x="621.50" y="526.20" width="121.00" height="23.40" fill="#6b6b6b" /><rect x="622.00" y="549.20" width="120.00" height="1.00" fill="#8d8d8d" /><rect x="626.00" y="527.20" width="14.00" height="5.00" fill="#4e4e4e" /><path d="M627.50 531.40l1.5 -3l1.5 3z" fill="#cfcfcf" /><path d="M631.80 531.40l1.5 -3l1.5 3z" fill="#cfcfcf" /><path d="M636.10 531.40l1.5 -3l1.5 3z" fill="#cfcfcf" /><rect x="624.50" y="534.40" width="17.50" height="9.00" fill="#333" /><rect x="629.00" y="535.90" width="7.50" height="6.00" fill="#7e8a3c" /><rect x="630.00" y="536.60" width="5.50" height="4.50" fill="#98a44c" /><circle cx="645.5" cy="539.10" r="2.2" fill="#1a1a1a"/><path d="M644.2 540.10L642.5 548.10h1.3L646 540.60z" fill="#222" /><rect x="624.00" y="545.10" width="6.00" height="3.00" fill="#cfcfcf" /><rect x="625.00" y="545.80" width="4.00" height="1.60" fill="#444" /><circle cx="657" cy="532.10" r="1.3" fill="#333"/><circle cx="653.5" cy="543.10" r="1.6" fill="#333"/><circle cx="659.5" cy="543.10" r="1.6" fill="#333"/><path d="M664.10 528.40h4.2q2.4 0 2.4 2.6v4.2q0 2.6 -2.4 2.6h-4.2z" fill="#0b0b0b" /><rect x="665.20" y="529.90" width="3.40" height="6.40" fill="#2a2a2a" /><rect x="666.30" y="526.80" width="1.60" height="0.90" fill="#39a23a" /><path d="M673.73 528.40h4.2q2.4 0 2.4 2.6v4.2q0 2.6 -2.4 2.6h-4.2z" fill="#0b0b0b" /><rect x="674.83" y="529.90" width="3.40" height="6.40" fill="#2a2a2a" /><rect x="675.93" y="526.80" width="1.60" height="0.90" fill="#39a23a" /><path d="M683.36 528.40h4.2q2.4 0 2.4 2.6v4.2q0 2.6 -2.4 2.6h-4.2z" fill="#0b0b0b" /><rect x="684.46" y="529.90" width="3.40" height="6.40" fill="#2a2a2a" /><rect x="685.56" y="526.80" width="1.60" height="0.90" fill="#39a23a" /><path d="M692.99 528.40h4.2q2.4 0 2.4 2.6v4.2q0 2.6 -2.4 2.6h-4.2z" fill="#0b0b0b" /><rect x="694.09" y="529.90" width="3.40" height="6.40" fill="#2a2a2a" /><rect x="695.19" y="526.80" width="1.60" height="0.90" fill="#39a23a" /><path d="M702.62 528.40h4.2q2.4 0 2.4 2.6v4.2q0 2.6 -2.4 2.6h-4.2z" fill="#0b0b0b" /><rect x="703.72" y="529.90" width="3.40" height="6.40" fill="#2a2a2a" /><rect x="704.82" y="526.80" width="1.60" height="0.90" fill="#39a23a" /><path d="M712.25 528.40h4.2q2.4 0 2.4 2.6v4.2q0 2.6 -2.4 2.6h-4.2z" fill="#0b0b0b" /><rect x="713.35" y="529.90" width="3.40" height="6.40" fill="#2a2a2a" /><rect x="714.45" y="526.80" width="1.60" height="0.90" fill="#39a23a" /><path d="M721.88 528.40h4.2q2.4 0 2.4 2.6v4.2q0 2.6 -2.4 2.6h-4.2z" fill="#0b0b0b" /><rect x="722.98" y="529.90" width="3.40" height="6.40" fill="#2a2a2a" /><rect x="724.08" y="526.80" width="1.60" height="0.90" fill="#39a23a" /><path d="M731.51 528.40h4.2q2.4 0 2.4 2.6v4.2q0 2.6 -2.4 2.6h-4.2z" fill="#0b0b0b" /><rect x="732.61" y="529.90" width="3.40" height="6.40" fill="#2a2a2a" /><rect x="733.71" y="526.80" width="1.60" height="0.90" fill="#39a23a" /><rect x="664.30" y="539.40" width="9.60" height="7.80" fill="#0e0e0e" rx="1"/><rect x="665.50" y="540.60" width="7.20" height="5.40" fill="#262626" /><rect x="667.80" y="542.80" width="2.60" height="1.00" fill="#0c0c0c" /><rect x="668.30" y="548.60" width="1.60" height="0.90" fill="#39a23a" /><rect x="677.14" y="539.40" width="9.60" height="7.80" fill="#0e0e0e" rx="1"/><rect x="678.34" y="540.60" width="7.20" height="5.40" fill="#262626" /><rect x="680.64" y="542.80" width="2.60" height="1.00" fill="#0c0c0c" /><rect x="681.14" y="548.60" width="1.60" height="0.90" fill="#39a23a" /><rect x="689.98" y="539.40" width="9.60" height="7.80" fill="#0e0e0e" rx="1"/><rect x="691.18" y="540.60" width="7.20" height="5.40" fill="#262626" /><rect x="693.48" y="542.80" width="2.60" height="1.00" fill="#0c0c0c" /><rect x="693.98" y="548.60" width="1.60" height="0.90" fill="#39a23a" /><rect x="702.82" y="539.40" width="9.60" height="7.80" fill="#0e0e0e" rx="1"/><rect x="704.02" y="540.60" width="7.20" height="5.40" fill="#262626" /><rect x="706.32" y="542.80" width="2.60" height="1.00" fill="#0c0c0c" /><rect x="706.82" y="548.60" width="1.60" height="0.90" fill="#39a23a" /><rect x="715.66" y="539.40" width="9.60" height="7.80" fill="#0e0e0e" rx="1"/><rect x="716.86" y="540.60" width="7.20" height="5.40" fill="#262626" /><rect x="719.16" y="542.80" width="2.60" height="1.00" fill="#0c0c0c" /><rect x="719.66" y="548.60" width="1.60" height="0.90" fill="#39a23a" /><rect x="728.50" y="539.40" width="9.60" height="7.80" fill="#0e0e0e" rx="1"/><rect x="729.70" y="540.60" width="7.20" height="5.40" fill="#262626" /><rect x="732.00" y="542.80" width="2.60" height="1.00" fill="#0c0c0c" /><rect x="732.50" y="548.60" width="1.60" height="0.90" fill="#39a23a" /><rect x="740.00" y="535.10" width="2.50" height="1.00" fill="#aaa" /><rect x="740.00" y="542.60" width="2.50" height="1.00" fill="#aaa" /><rect x="616.20" y="550.40" width="131.40" height="24.80" fill="#5e5e5e" /><rect x="617.00" y="551.40" width="2.80" height="2.00" fill="#dfe6f0" /><rect x="744.50" y="551.40" width="2.80" height="2.00" fill="#d8dde6" /><rect x="617.00" y="555.40" width="2.80" height="2.00" fill="#dfe6f0" /><rect x="744.50" y="555.40" width="2.80" height="2.00" fill="#d8dde6" /><rect x="617.00" y="559.40" width="2.80" height="2.00" fill="#dfe6f0" /><rect x="744.50" y="559.40" width="2.80" height="2.00" fill="#d8dde6" /><rect x="617.00" y="563.40" width="2.80" height="2.00" fill="#dfe6f0" /><rect x="744.50" y="563.40" width="2.80" height="2.00" fill="#d8dde6" /><rect x="617.00" y="567.40" width="2.80" height="2.00" fill="#dfe6f0" /><rect x="744.50" y="567.40" width="2.80" height="2.00" fill="#d8dde6" /><rect x="617.00" y="571.40" width="2.80" height="2.00" fill="#dfe6f0" /><rect x="744.50" y="571.40" width="2.80" height="2.00" fill="#d8dde6" /><rect x="621.50" y="551.00" width="121.00" height="23.40" fill="#6b6b6b" /><rect x="622.00" y="574.00" width="120.00" height="1.00" fill="#8d8d8d" /><rect x="626.00" y="552.00" width="14.00" height="5.00" fill="#4e4e4e" /><path d="M627.50 556.20l1.5 -3l1.5 3z" fill="#cfcfcf" /><path d="M631.80 556.20l1.5 -3l1.5 3z" fill="#cfcfcf" /><path d="M636.10 556.20l1.5 -3l1.5 3z" fill="#cfcfcf" /><rect x="624.50" y="559.20" width="17.50" height="9.00" fill="#333" /><rect x="629.00" y="560.70" width="7.50" height="6.00" fill="#7e8a3c" /><rect x="630.00" y="561.40" width="5.50" height="4.50" fill="#98a44c" /><circle cx="645.5" cy="563.90" r="2.2" fill="#1a1a1a"/><path d="M644.2 564.90L642.5 572.90h1.3L646 565.40z" fill="#222" /><rect x="624.00" y="569.90" width="6.00" height="3.00" fill="#cfcfcf" /><rect x="625.00" y="570.60" width="4.00" height="1.60" fill="#444" /><circle cx="657" cy="556.90" r="1.3" fill="#333"/><circle cx="653.5" cy="567.90" r="1.6" fill="#333"/><circle cx="659.5" cy="567.90" r="1.6" fill="#333"/><path d="M664.10 553.20h4.2q2.4 0 2.4 2.6v4.2q0 2.6 -2.4 2.6h-4.2z" fill="#0b0b0b" /><rect x="665.20" y="554.70" width="3.40" height="6.40" fill="#2a2a2a" /><rect x="666.30" y="551.60" width="1.60" height="0.90" fill="#39a23a" /><path d="M673.73 553.20h4.2q2.4 0 2.4 2.6v4.2q0 2.6 -2.4 2.6h-4.2z" fill="#0b0b0b" /><rect x="674.83" y="554.70" width="3.40" height="6.40" fill="#2a2a2a" /><rect x="675.93" y="551.60" width="1.60" height="0.90" fill="#39a23a" /><path d="M683.36 553.20h4.2q2.4 0 2.4 2.6v4.2q0 2.6 -2.4 2.6h-4.2z" fill="#0b0b0b" /><rect x="684.46" y="554.70" width="3.40" height="6.40" fill="#2a2a2a" /><rect x="685.56" y="551.60" width="1.60" height="0.90" fill="#39a23a" /><path d="M692.99 553.20h4.2q2.4 0 2.4 2.6v4.2q0 2.6 -2.4 2.6h-4.2z" fill="#0b0b0b" /><rect x="694.09" y="554.70" width="3.40" height="6.40" fill="#2a2a2a" /><rect x="695.19" y="551.60" width="1.60" height="0.90" fill="#39a23a" /><path d="M702.62 553.20h4.2q2.4 0 2.4 2.6v4.2q0 2.6 -2.4 2.6h-4.2z" fill="#0b0b0b" /><rect x="703.72" y="554.70" width="3.40" height="6.40" fill="#2a2a2a" /><rect x="704.82" y="551.60" width="1.60" height="0.90" fill="#39a23a" /><path d="M712.25 553.20h4.2q2.4 0 2.4 2.6v4.2q0 2.6 -2.4 2.6h-4.2z" fill="#0b0b0b" /><rect x="713.35" y="554.70" width="3.40" height="6.40" fill="#2a2a2a" /><rect x="714.45" y="551.60" width="1.60" height="0.90" fill="#39a23a" /><path d="M721.88 553.20h4.2q2.4 0 2.4 2.6v4.2q0 2.6 -2.4 2.6h-4.2z" fill="#0b0b0b" /><rect x="722.98" y="554.70" width="3.40" height="6.40" fill="#2a2a2a" /><rect x="724.08" y="551.60" width="1.60" height="0.90" fill="#39a23a" /><path d="M731.51 553.20h4.2q2.4 0 2.4 2.6v4.2q0 2.6 -2.4 2.6h-4.2z" fill="#0b0b0b" /><rect x="732.61" y="554.70" width="3.40" height="6.40" fill="#2a2a2a" /><rect x="733.71" y="551.60" width="1.60" height="0.90" fill="#39a23a" /><rect x="664.30" y="564.20" width="9.60" height="7.80" fill="#0e0e0e" rx="1"/><rect x="665.50" y="565.40" width="7.20" height="5.40" fill="#262626" /><rect x="667.80" y="567.60" width="2.60" height="1.00" fill="#0c0c0c" /><rect x="668.30" y="573.40" width="1.60" height="0.90" fill="#39a23a" /><rect x="677.14" y="564.20" width="9.60" height="7.80" fill="#0e0e0e" rx="1"/><rect x="678.34" y="565.40" width="7.20" height="5.40" fill="#262626" /><rect x="680.64" y="567.60" width="2.60" height="1.00" fill="#0c0c0c" /><rect x="681.14" y="573.40" width="1.60" height="0.90" fill="#39a23a" /><rect x="689.98" y="564.20" width="9.60" height="7.80" fill="#0e0e0e" rx="1"/><rect x="691.18" y="565.40" width="7.20" height="5.40" fill="#262626" /><rect x="693.48" y="567.60" width="2.60" height="1.00" fill="#0c0c0c" /><rect x="693.98" y="573.40" width="1.60" height="0.90" fill="#39a23a" /><rect x="702.82" y="564.20" width="9.60" height="7.80" fill="#0e0e0e" rx="1"/><rect x="704.02" y="565.40" width="7.20" height="5.40" fill="#262626" /><rect x="706.32" y="567.60" width="2.60" height="1.00" fill="#0c0c0c" /><rect x="706.82" y="573.40" width="1.60" height="0.90" fill="#39a23a" /><rect x="715.66" y="564.20" width="9.60" height="7.80" fill="#0e0e0e" rx="1"/><rect x="716.86" y="565.40" width="7.20" height="5.40" fill="#262626" /><rect x="719.16" y="567.60" width="2.60" height="1.00" fill="#0c0c0c" /><rect x="719.66" y="573.40" width="1.60" height="0.90" fill="#39a23a" /><rect x="728.50" y="564.20" width="9.60" height="7.80" fill="#0e0e0e" rx="1"/><rect x="729.70" y="565.40" width="7.20" height="5.40" fill="#262626" /><rect x="732.00" y="567.60" width="2.60" height="1.00" fill="#0c0c0c" /><rect x="732.50" y="573.40" width="1.60" height="0.90" fill="#39a23a" /><rect x="740.00" y="559.90" width="2.50" height="1.00" fill="#aaa" /><rect x="740.00" y="567.40" width="2.50" height="1.00" fill="#aaa" /><rect x="616.20" y="575.20" width="131.40" height="49.60" fill="#3a3a3a" /><rect x="615.20" y="575.50" width="7.20" height="48.80" fill="#262626" /><rect x="742.00" y="575.50" width="7.20" height="48.80" fill="#262626" /><rect x="614.00" y="575.20" width="135.00" height="1.00" fill="#8a8a8a" /><rect x="617.50" y="579.20" width="2.20" height="2.20" fill="#f0f0f0" /><rect x="745.00" y="579.20" width="2.20" height="2.20" fill="#f0f0f0" /><rect x="617.50" y="582.70" width="2.20" height="2.20" fill="#f0f0f0" /><rect x="745.00" y="582.70" width="2.20" height="2.20" fill="#f0f0f0" /><rect x="617.50" y="612.80" width="2.20" height="2.20" fill="#f0f0f0" /><rect x="745.00" y="612.80" width="2.20" height="2.20" fill="#f0f0f0" /><rect x="617.50" y="616.30" width="2.20" height="2.20" fill="#f0f0f0" /><rect x="745.00" y="616.30" width="2.20" height="2.20" fill="#f0f0f0" /><rect x="622.40" y="575.50" width="119.60" height="48.80" fill="#0d0d0d" /><rect x="626.3" y="577.70" width="87.6" height="45.10" fill="url(#mesh)"/><rect x="714.00" y="575.50" width="28.00" height="48.80" fill="#2e2e2e" /><rect x="717.00" y="590.00" width="20.50" height="20.80" fill="#5a5a5a" /><rect x="718.00" y="591.00" width="18.50" height="18.80" fill="#1e1e1e" /><rect x="719.50" y="594.70" width="15.50" height="1.20" fill="#bdbdbd" /><rect x="719.50" y="597.70" width="7.00" height="4.50" fill="#d0d0d0" /><rect x="727.50" y="597.70" width="7.50" height="4.50" fill="#9a9a9a" /><rect x="720.50" y="598.70" width="5.00" height="2.50" fill="#333" /><rect x="728.50" y="598.70" width="5.50" height="2.50" fill="#444" /><rect x="720.00" y="605.20" width="6.00" height="1.00" fill="#888" /><rect x="728.00" y="605.20" width="6.00" height="1.00" fill="#888" /><text x="633" y="601.70" font-family="Liberation Sans" font-size="3.6" font-style="italic" font-weight="bold" fill="#d0d0d0">APC</text><rect x="614.00" y="624.40" width="135.00" height="1.20" fill="#8fa0b4" /><rect x="606.20" y="625.60" width="154.00" height="9.20" fill="#6a6a6a" /><rect x="623.00" y="628.40" width="120.00" height="4.80" fill="#575757" /><rect x="634.00" y="629.00" width="3.00" height="3.00" fill="#474747" /><rect x="662.00" y="629.00" width="3.00" height="3.00" fill="#474747" /><rect x="676.00" y="629.00" width="3.00" height="3.00" fill="#474747" /><rect x="684.00" y="629.00" width="3.00" height="3.00" fill="#474747" /><rect x="692.00" y="629.00" width="3.00" height="3.00" fill="#474747" /><rect x="736.00" y="629.00" width="3.00" height="3.00" fill="#474747" /><path d="M613 634.8h11.5v6.5l-1.5 2.8h-8.5l-1.5 -2.8z" fill="#3b3b3b" /><path d="M627 634.8h11.5v6.5l-1.5 2.8h-8.5l-1.5 -2.8z" fill="#3b3b3b" /><path d="M727 634.8h11.5v6.5l-1.5 2.8h-8.5l-1.5 -2.8z" fill="#3b3b3b" /><path d="M741 634.8h11.5v6.5l-1.5 2.8h-8.5l-1.5 -2.8z" fill="#3b3b3b" /><rect x="606.50" y="636.30" width="6.00" height="1.00" fill="#a0a0a0" /><rect x="754.50" y="636.30" width="6.00" height="1.00" fill="#a0a0a0" /><rect x="610.90" y="104.00" width="141.10" height="23.60" fill="none" stroke="#ff0000" stroke-width="2"/><rect x="612.20" y="202.90" width="138.20" height="37.20" fill="none" stroke="#2e9a5a" stroke-width="1.6"/><rect x="611.70" y="315.70" width="136.10" height="48.30" fill="none" stroke="#2e9a5a" stroke-width="1.6"/><rect x="612.25" y="415.25" width="135.60" height="23.70" fill="none" stroke="#0000f0" stroke-width="2.1"/><rect x="612.35" y="489.85" width="135.50" height="23.60" fill="none" stroke="#f39a1e" stroke-width="2.1"/></svg>
<svg class="a" style="left:0;top:0" width="841" height="672"><text x="596.5" y="110" font-family="Liberation Sans" font-size="7" font-weight="normal" fill="#ff1010" stroke="#ff1010" stroke-width="0.22" text-anchor="end" textLength="37.5" lengthAdjust="spacingAndGlyphs">Distribution</text><text x="596.3" y="209" font-family="Liberation Sans" font-size="7" font-weight="normal" fill="#118a11" stroke="#118a11" stroke-width="0.22" text-anchor="end" textLength="40.4" lengthAdjust="spacingAndGlyphs">Data Stack 1</text><text x="596.3" y="322.8" font-family="Liberation Sans" font-size="7" font-weight="normal" fill="#118a11" stroke="#118a11" stroke-width="0.22" text-anchor="end" textLength="41" lengthAdjust="spacingAndGlyphs">Data Stack 2</text><text x="596.7" y="419.9" font-family="Liberation Sans" font-size="7" font-weight="normal" fill="#1010ff" stroke="#1010ff" stroke-width="0.22" text-anchor="end" textLength="26.8" lengthAdjust="spacingAndGlyphs">Security</text><text x="596.3" y="495.1" font-family="Liberation Sans" font-size="7" font-weight="normal" fill="#f39a1e" stroke="#f39a1e" stroke-width="0.22" text-anchor="end" textLength="66.5" lengthAdjust="spacingAndGlyphs">Building Automation</text><rect x="767" y="104.8" width="42.8" height="10.9" fill="#fcaa3a"/><rect x="768.1" y="106.7" width="39.6" height="7.1" fill="#ffdcae"/><text x="768.5" y="113.6" font-family="Liberation Sans" font-size="8.2" font-weight="bold" fill="#ff9200" stroke="#ff9200" stroke-width="0.6" textLength="38.5" lengthAdjust="spacingAndGlyphs">BA-AR3515</text><text x="767.6" y="124.8" font-family="Liberation Sans" font-size="7" font-weight="normal" fill="#111" stroke="#111" stroke-width="0.22" text-anchor="start" textLength="54.7" lengthAdjust="spacingAndGlyphs">SW_YHIK2I4EW6</text><text x="767.6" y="136" font-family="Liberation Sans" font-size="7" font-weight="normal" fill="#111" stroke="#111" stroke-width="0.22" text-anchor="start" textLength="53.4" lengthAdjust="spacingAndGlyphs">PP_chuBUJAwuy</text><text x="767.6" y="161" font-family="Liberation Sans" font-size="7" font-weight="normal" fill="#111" stroke="#111" stroke-width="0.22" text-anchor="start" textLength="51.9" lengthAdjust="spacingAndGlyphs">PP_odbfzT54nv</text><text x="767.6" y="186" font-family="Liberation Sans" font-size="7" font-weight="normal" fill="#111" stroke="#111" stroke-width="0.22" text-anchor="start" textLength="50.8" lengthAdjust="spacingAndGlyphs">PP_EIJR6AX91L</text><text x="767.6" y="247.8" font-family="Liberation Sans" font-size="7" font-weight="normal" fill="#111" stroke="#111" stroke-width="0.22" text-anchor="start" textLength="48.1" lengthAdjust="spacingAndGlyphs">PP_kBjhlUnzXt</text><text x="767.6" y="272.8" font-family="Liberation Sans" font-size="7" font-weight="normal" fill="#111" stroke="#111" stroke-width="0.22" text-anchor="start" textLength="53.9" lengthAdjust="spacingAndGlyphs">PP_HaNhcOVylc</text><text x="767.6" y="297.3" font-family="Liberation Sans" font-size="7" font-weight="normal" fill="#111" stroke="#111" stroke-width="0.22" text-anchor="start" textLength="52.8" lengthAdjust="spacingAndGlyphs">PP_4QfHvcJOrd</text><text x="767.6" y="372.7" font-family="Liberation Sans" font-size="7" font-weight="normal" fill="#111" stroke="#111" stroke-width="0.22" text-anchor="start" textLength="49.9" lengthAdjust="spacingAndGlyphs">PP_UluySqjv3p</text><text x="767.6" y="396.8" font-family="Liberation Sans" font-size="7" font-weight="normal" fill="#111" stroke="#111" stroke-width="0.22" text-anchor="start" textLength="54.8" lengthAdjust="spacingAndGlyphs">PP_PnrhbHSQKt</text><text x="767.6" y="446.9" font-family="Liberation Sans" font-size="7" font-weight="normal" fill="#111" stroke="#111" stroke-width="0.22" text-anchor="start" textLength="60.8" lengthAdjust="spacingAndGlyphs">PP_FWAJrNMLDN</text><text x="767.6" y="471.8" font-family="Liberation Sans" font-size="7" font-weight="normal" fill="#111" stroke="#111" stroke-width="0.22" text-anchor="start" textLength="53.6" lengthAdjust="spacingAndGlyphs">PP_JfQgjWf6YC</text><text x="766.8" y="533.9" font-family="Liberation Sans" font-size="7" font-weight="normal" fill="#111" stroke="#111" stroke-width="0.22" text-anchor="start" textLength="57" lengthAdjust="spacingAndGlyphs">PDU_DKBQea4fiL</text><text x="766.8" y="558.8" font-family="Liberation Sans" font-size="7" font-weight="normal" fill="#111" stroke="#111" stroke-width="0.22" text-anchor="start" textLength="49.1" lengthAdjust="spacingAndGlyphs">PDU_CtRfilISzJ</text><text x="766.8" y="583.8" font-family="Liberation Sans" font-size="7" font-weight="normal" fill="#111" stroke="#111" stroke-width="0.22" text-anchor="start" textLength="64.8" lengthAdjust="spacingAndGlyphs">UPS_QwE9nWT7RN</text><text x="767.6" y="211.7" font-family="Liberation Sans" font-size="8.4" font-weight="normal" fill="#111" stroke="#111" stroke-width="0.22" text-anchor="start" textLength="56.25" lengthAdjust="spacingAndGlyphs">SW_bBnd3TQjcy</text><text x="767.6" y="224" font-family="Liberation Sans" font-size="8.4" font-weight="normal" fill="#111" stroke="#111" stroke-width="0.22" text-anchor="start" textLength="57.8" lengthAdjust="spacingAndGlyphs">SW_wmtVvfBrUh</text><text x="767.6" y="236.4" font-family="Liberation Sans" font-size="8.4" font-weight="normal" fill="#111" stroke="#111" stroke-width="0.22" text-anchor="start" textLength="60.2" lengthAdjust="spacingAndGlyphs">SW_Gh4lhNRHrm</text><text x="767.6" y="323.8" font-family="Liberation Sans" font-size="8.4" font-weight="normal" fill="#111" stroke="#111" stroke-width="0.22" text-anchor="start" textLength="57.3" lengthAdjust="spacingAndGlyphs">SW_LEXrACaZt2</text><text x="767.6" y="336.5" font-family="Liberation Sans" font-size="8.4" font-weight="normal" fill="#111" stroke="#111" stroke-width="0.22" text-anchor="start" textLength="59.3" lengthAdjust="spacingAndGlyphs">SW_1vbpWy7cx6</text><text x="767.6" y="348.4" font-family="Liberation Sans" font-size="8.4" font-weight="normal" fill="#111" stroke="#111" stroke-width="0.22" text-anchor="start" textLength="61" lengthAdjust="spacingAndGlyphs">SW_oY8nSN76S4</text><text x="767.6" y="360.3" font-family="Liberation Sans" font-size="8.4" font-weight="normal" fill="#111" stroke="#111" stroke-width="0.22" text-anchor="start" textLength="56.9" lengthAdjust="spacingAndGlyphs">SW_yz1yDG54rd</text><text x="767.6" y="423.8" font-family="Liberation Sans" font-size="8.4" font-weight="normal" fill="#111" stroke="#111" stroke-width="0.22" text-anchor="start" textLength="35.7" lengthAdjust="spacingAndGlyphs">SC_R2507</text><text x="767.6" y="436" font-family="Liberation Sans" font-size="8.4" font-weight="normal" fill="#111" stroke="#111" stroke-width="0.22" text-anchor="start" textLength="58.8" lengthAdjust="spacingAndGlyphs">SW_D9h4zYpF4e</text><text x="767.6" y="498.3" font-family="Liberation Sans" font-size="8.4" font-weight="normal" fill="#111" stroke="#111" stroke-width="0.22" text-anchor="start" textLength="35.7" lengthAdjust="spacingAndGlyphs">SC_R2506</text><text x="767.6" y="510.8" font-family="Liberation Sans" font-size="8.4" font-weight="normal" fill="#111" stroke="#111" stroke-width="0.22" text-anchor="start" textLength="65.5" lengthAdjust="spacingAndGlyphs">SW_MhEvcQGWGv</text><text x="673" y="642.8" font-family="Liberation Serif" font-size="8.6" font-weight="normal" fill="#111" stroke="#111" stroke-width="0.35" text-anchor="start" textLength="18.7" lengthAdjust="spacingAndGlyphs">Front</text></svg>
</body></html>
